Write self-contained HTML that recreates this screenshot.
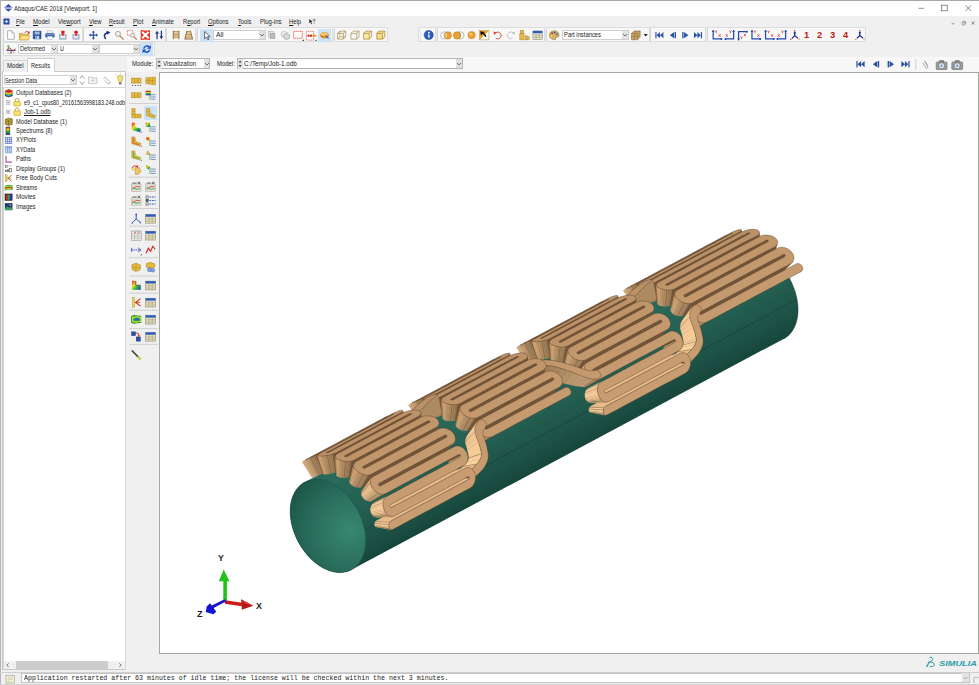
<!DOCTYPE html>
<html><head><meta charset="utf-8"><title>Abaqus/CAE 2018 [Viewport: 1]</title><style>
html,body{margin:0;padding:0}
body{width:979px;height:685px;overflow:hidden;background:#f0f0f0;position:relative;font-family:'Liberation Sans',sans-serif}
#r div,#r svg,#r span{position:absolute}
.t{white-space:nowrap;line-height:1em;height:1em;transform-origin:0 50%;letter-spacing:0}
u{text-decoration:underline;text-decoration-thickness:.5px;text-underline-offset:.6px}
</style></head><body><div id="r"><div style="left:0px;top:0px;width:979px;height:1px;background:#a4aaa4"></div>
<div style="left:0px;top:0px;width:1px;height:685px;background:#b4b8b4"></div>
<div style="left:1px;top:1px;width:978px;height:14.5px;background:#fff"></div>
<div style="left:2px;top:71px;width:124px;height:599px;background:#fff;border:1px solid #c9c9c9;box-sizing:border-box"></div>
<div style="left:3px;top:59.5px;width:24.5px;height:12px;background:#f0f0f0;border:1px solid #d4d4d4;border-bottom:none;box-sizing:border-box"></div>
<div style="left:27px;top:57.5px;width:27.5px;height:14.5px;background:#fff;border:1px solid #d0d0d0;border-bottom:none;box-sizing:border-box"></div>
<div style="left:3.5px;top:74.5px;width:73px;height:10.8px;background:#fff;border:1px solid #cfcfcf;box-sizing:border-box"></div>
<div style="left:70px;top:75.5px;width:6px;height:8.8px;background:#e1e1e1"></div>
<svg style="left:70px;top:76.9px" width="6" height="6" viewBox="0 0 6 6"><path d="M1 2 L3 4 L5 2" fill="none" stroke="#555" stroke-width=".8"/></svg>
<div style="left:3px;top:87px;width:122.5px;height:583px;border:1px solid #d6d6d6;border-bottom:none;box-sizing:border-box"></div>
<div style="left:3.5px;top:660.8px;width:121.5px;height:8.6px;background:#f0f0f0"></div>
<div style="left:16px;top:661.4px;width:91.5px;height:7.6px;background:#cdcdcd"></div>
<div style="left:159.3px;top:72px;width:819.4px;height:581.8px;background:#fff;border:1px solid #a3a8a3;box-sizing:border-box"></div>
<div style="left:0px;top:671.5px;width:979px;height:0.7px;background:#cfcfcf"></div>
<div style="left:21px;top:672.6px;width:948.5px;height:10.2px;background:#fff;border:1px solid #c4c4c4;box-sizing:border-box"></div>
<div style="left:962px;top:673.4px;width:7px;height:8.6px;background:#e4e4e4"></div>
<div style="left:0px;top:683.6px;width:979px;height:1.4px;background:#d2d2d2"></div>
<div style="left:2.5px;top:27.4px;width:80.1px;height:14.4px;background:#f8f8f8;border:1px solid #dcdcdc;box-sizing:border-box"></div>
<div style="left:83.2px;top:27.4px;width:82.4px;height:14.4px;background:#f8f8f8;border:1px solid #dcdcdc;box-sizing:border-box"></div>
<div style="left:166px;top:27.4px;width:30.2px;height:14.4px;background:#f8f8f8;border:1px solid #dcdcdc;box-sizing:border-box"></div>
<div style="left:196.6px;top:27.4px;width:136.6px;height:14.4px;background:#f8f8f8;border:1px solid #dcdcdc;box-sizing:border-box"></div>
<div style="left:333.6px;top:27.4px;width:54px;height:14.4px;background:#f8f8f8;border:1px solid #dcdcdc;box-sizing:border-box"></div>
<div style="left:418.4px;top:27.4px;width:17.4px;height:14.4px;background:#f8f8f8;border:1px solid #dcdcdc;box-sizing:border-box"></div>
<div style="left:436.6px;top:27.4px;width:108.8px;height:14.4px;background:#f8f8f8;border:1px solid #dcdcdc;box-sizing:border-box"></div>
<div style="left:546px;top:27.4px;width:104px;height:14.4px;background:#f8f8f8;border:1px solid #dcdcdc;box-sizing:border-box"></div>
<div style="left:650.4px;top:27.4px;width:56px;height:14.4px;background:#f8f8f8;border:1px solid #dcdcdc;box-sizing:border-box"></div>
<div style="left:707px;top:27.4px;width:159.4px;height:14.4px;background:#f8f8f8;border:1px solid #dcdcdc;box-sizing:border-box"></div>
<div style="left:2.5px;top:41.6px;width:152.5px;height:14.4px;background:#f8f8f8;border:1px solid #dcdcdc;box-sizing:border-box"></div>
<div style="left:213px;top:29.6px;width:52.5px;height:10.8px;background:#fff;border:1px solid #cfcfcf;box-sizing:border-box"></div>
<div style="left:259px;top:30.6px;width:6px;height:8.8px;background:#e1e1e1"></div>
<svg style="left:259px;top:32px" width="6" height="6" viewBox="0 0 6 6"><path d="M1 2 L3 4 L5 2" fill="none" stroke="#555" stroke-width=".8"/></svg>
<div style="left:562px;top:29.6px;width:66.5px;height:10.8px;background:#fff;border:1px solid #cfcfcf;box-sizing:border-box"></div>
<div style="left:622px;top:30.6px;width:6px;height:8.8px;background:#e1e1e1"></div>
<svg style="left:622px;top:32px" width="6" height="6" viewBox="0 0 6 6"><path d="M1 2 L3 4 L5 2" fill="none" stroke="#555" stroke-width=".8"/></svg>
<div style="left:18px;top:43.6px;width:39px;height:10.8px;background:#fff;border:1px solid #cfcfcf;box-sizing:border-box"></div>
<div style="left:50.5px;top:44.6px;width:6px;height:8.8px;background:#e1e1e1"></div>
<svg style="left:50.5px;top:46px" width="6" height="6" viewBox="0 0 6 6"><path d="M1 2 L3 4 L5 2" fill="none" stroke="#555" stroke-width=".8"/></svg>
<div style="left:57px;top:43.6px;width:41.5px;height:10.8px;background:#fff;border:1px solid #cfcfcf;box-sizing:border-box"></div>
<div style="left:92px;top:44.6px;width:6px;height:8.8px;background:#e1e1e1"></div>
<svg style="left:92px;top:46px" width="6" height="6" viewBox="0 0 6 6"><path d="M1 2 L3 4 L5 2" fill="none" stroke="#555" stroke-width=".8"/></svg>
<div style="left:98.8px;top:43.6px;width:41px;height:10.8px;background:#fff;border:1px solid #cfcfcf;box-sizing:border-box"></div>
<div style="left:133.3px;top:44.6px;width:6px;height:8.8px;background:#e1e1e1"></div>
<svg style="left:133.3px;top:46px" width="6" height="6" viewBox="0 0 6 6"><path d="M1 2 L3 4 L5 2" fill="none" stroke="#555" stroke-width=".8"/></svg>
<div style="left:127px;top:56.6px;width:852px;height:15px;background:#f7f7f7"></div>
<div style="left:156px;top:58.2px;width:53.8px;height:11.2px;background:#fff;border:1px solid #b4b4b4;box-sizing:border-box"></div>
<div style="left:203.8px;top:59.2px;width:5.5px;height:9.2px;background:#e1e1e1"></div>
<svg style="left:203.55px;top:60.8px" width="6" height="6" viewBox="0 0 6 6"><path d="M1 2 L3 4 L5 2" fill="none" stroke="#555" stroke-width=".8"/></svg>
<div style="left:156.6px;top:59px;width:5px;height:9.6px;background:#e4e4e4"></div>
<div style="left:237px;top:58.2px;width:225.5px;height:11.2px;background:#fff;border:1px solid #b4b4b4;box-sizing:border-box"></div>
<div style="left:456px;top:59.2px;width:6px;height:9.2px;background:#e1e1e1"></div>
<svg style="left:456px;top:60.8px" width="6" height="6" viewBox="0 0 6 6"><path d="M1 2 L3 4 L5 2" fill="none" stroke="#555" stroke-width=".8"/></svg>
<div style="left:237.6px;top:59px;width:5px;height:9.6px;background:#e4e4e4"></div>
<div style="left:200.3px;top:28.6px;width:12.4px;height:13px;background:#cbe3f8"></div>
<div style="left:318.2px;top:28.6px;width:13.2px;height:13px;background:#cbe3f8"></div>
<div style="left:140.2px;top:42.6px;width:13.2px;height:13px;background:#cbe3f8"></div>
<div style="left:144.2px;top:106.4px;width:13.2px;height:13.6px;background:#cbe3f8"></div>
<svg style="left:0;top:0" width="979" height="685" viewBox="0 0 979 685"><g transform="translate(4.20 3.60) scale(0.840)"><path d="M5 .4L9 4H1Z" fill="#3a4cb0"/><path d="M5 9.6L9 6H1Z" fill="#3a4cb0"/><rect x="0" y="4.4" width="10" height="1.2" fill="#6a78c8"/></g>
<path d="M918.5 8.3H924" stroke="#444" stroke-width=".6"/>
<rect x="941.6" y="5.2" width="5.6" height="5.6" fill="none" stroke="#444" stroke-width=".6"/>
<path d="M965.4 5.2L971.2 11M971.2 5.2L965.4 11" stroke="#444" stroke-width=".6"/>
<path d="M951.6 23.8H954.4" stroke="#666" stroke-width=".7"/>
<path d="M962 22.4H964.6V25H962ZM963 22.4V21.4H965.6V24H964.6" fill="none" stroke="#666" stroke-width=".5"/>
<path d="M971.6 21.4L974.6 24.6M974.6 21.4L971.6 24.6" stroke="#666" stroke-width=".7"/>
<g transform="translate(3.20 18.20) scale(0.660)"><rect x=".4" y=".4" width="9.2" height="9.2" rx="1" fill="#2a4aa8"/><path d="M2 5L5 2.4L8 5L5 7.6Z" fill="#9ab4e8"/><circle cx="5" cy="5" r="1.3" fill="#fff"/></g>
<g transform="translate(308.60 18.40) scale(0.700)"><path d="M1 .8V7L2.6 5.6L3.8 8.2L4.8 7.8L3.6 5.2H5.6Z" fill="#222"/><path d="M6.4 3Q6.4 1.2 7.8 1.2Q9.2 1.2 9.2 2.6Q9.2 3.6 7.9 4.4V5.6M7.9 6.8V7.8" fill="none" stroke="#222" stroke-width=".9"/></g>
<path d="M3.4 30V41" stroke="#c4c4c4" stroke-width=".8" stroke-dasharray=".8 .8"/>
<path d="M83.6 30V41" stroke="#c4c4c4" stroke-width=".8" stroke-dasharray=".8 .8"/>
<path d="M166.4 30V41" stroke="#c4c4c4" stroke-width=".8" stroke-dasharray=".8 .8"/>
<path d="M196.8 30V41" stroke="#c4c4c4" stroke-width=".8" stroke-dasharray=".8 .8"/>
<path d="M334.0 30V41" stroke="#c4c4c4" stroke-width=".8" stroke-dasharray=".8 .8"/>
<path d="M420.4 30V41" stroke="#c4c4c4" stroke-width=".8" stroke-dasharray=".8 .8"/>
<path d="M437.2 30V41" stroke="#c4c4c4" stroke-width=".8" stroke-dasharray=".8 .8"/>
<path d="M546.2 30V41" stroke="#c4c4c4" stroke-width=".8" stroke-dasharray=".8 .8"/>
<path d="M650.6 30V41" stroke="#c4c4c4" stroke-width=".8" stroke-dasharray=".8 .8"/>
<path d="M707.2 30V41" stroke="#c4c4c4" stroke-width=".8" stroke-dasharray=".8 .8"/>
<path d="M3.4 44V55" stroke="#c4c4c4" stroke-width=".8" stroke-dasharray=".8 .8"/>
<path d="M915.8 59V70" stroke="#c4c4c4" stroke-width=".8"/>
<g transform="translate(6.20 30.30) scale(0.940)"><path d="M1.5 .5H6L8.5 3V9.5H1.5Z" fill="#fff" stroke="#8a8a8a" stroke-width=".7"/><path d="M6 .5V3H8.5" fill="#eee" stroke="#8a8a8a" stroke-width=".6"/></g>
<g transform="translate(18.80 30.30) scale(1.060)"><path d="M.5 3H4L5 4H9V9H.5Z" fill="#e8b84a" stroke="#b98a22" stroke-width=".5"/><path d="M.5 9L2 5H10.5L9 9Z" fill="#fbe08a" stroke="#c79a2c" stroke-width=".5"/><path d="M5.5 2.2Q7.5 .2 9.3 1.8" fill="none" stroke="#d8281e" stroke-width=".9"/><path d="M10.2 .6V3.2H7.8Z" fill="#d8281e"/></g>
<g transform="translate(32.40 30.30) scale(0.940)"><rect x=".8" y=".8" width="8.4" height="8.4" rx=".6" fill="#2c58a8" stroke="#1c3c80" stroke-width=".5"/><rect x="2.3" y="1.3" width="5.4" height="3.2" fill="#9fb8dc"/><rect x="2.8" y="6" width="4.4" height="3.2" fill="#c8d4e8"/><rect x="3.4" y="6.5" width="1.2" height="2.2" fill="#2c58a8"/></g>
<g transform="translate(45.00 30.30) scale(0.980)"><rect x="2.4" y=".6" width="5.2" height="3" fill="#f4f4f4" stroke="#999" stroke-width=".4"/><rect x=".5" y="3.2" width="9" height="4" rx=".8" fill="#3a62b4" stroke="#24408a" stroke-width=".4"/><rect x="2.2" y="6" width="5.6" height="3.4" fill="#fff" stroke="#8a94b0" stroke-width=".4"/><rect x="1" y="4" width="8" height=".9" fill="#7f9ad0"/></g>
<g transform="translate(58.20 30.30) scale(0.940)"><rect x="1.4" y="4.6" width="7" height="4.8" fill="#b9c4d8" stroke="#7082a8" stroke-width=".5"/><rect x="2.4" y="6" width="5" height="2.2" fill="#e8ecf4"/><path d="M3.2 .6H6.8V3.4H5.9V5.6H4.1V3.4H3.2Z" fill="#dd1c1c"/></g>
<g transform="translate(71.40 30.30) scale(0.940)"><rect x="1.6" y="4.4" width="6.6" height="5" fill="#c0c6da" stroke="#7b86a8" stroke-width=".5"/><rect x="2.6" y="5.8" width="4.4" height="2.4" fill="#e4e6f0"/><circle cx="5" cy="2.1" r="1.9" fill="#dd1c1c"/><rect x="4.3" y="3" width="1.4" height="3" fill="#dd1c1c"/></g>
<g transform="translate(88.60 30.30) scale(0.960)"><path d="M5 .2L6.6 2.2H5.6V4.4H7.8V3.4L9.8 5L7.8 6.6V5.6H5.6V7.8H6.6L5 9.8L3.4 7.8H4.4V5.6H2.2V6.6L.2 5L2.2 3.4V4.4H4.4V2.2H3.4Z" fill="#2a48b0"/></g>
<g transform="translate(101.80 30.30) scale(0.940)"><path d="M4.2 9.2Q.6 4.8 5.8 2.6" fill="none" stroke="#1e2e86" stroke-width="1.6"/><path d="M5 .4L9.2 2.2L5.8 4.8Z" fill="#1e2e86"/></g>
<g transform="translate(114.40 30.30) scale(0.940)"><circle cx="3.8" cy="3.8" r="2.7" fill="#f2f2f2" stroke="#a8a090" stroke-width=".9"/><path d="M5.8 5.8L9.4 9.4" stroke="#b8955a" stroke-width="1.5" stroke-linecap="round"/></g>
<g transform="translate(126.80 29.70) scale(1.000)"><rect x=".6" y=".6" width="5.6" height="5" fill="#fff" stroke="#d84030" stroke-width=".6" stroke-dasharray="1 .5"/><circle cx="5.6" cy="5.6" r="2" fill="#f2f2f2" stroke="#a8a090" stroke-width=".8"/><path d="M7.2 7.2L9.6 9.6" stroke="#b8955a" stroke-width="1.3" stroke-linecap="round"/></g>
<g transform="translate(140.40 30.10) scale(1.000)"><rect x=".4" y=".4" width="9.2" height="9.2" fill="#e83a28"/><path d="M1.4 1.4L8.6 8.6M8.6 1.4L1.4 8.6" stroke="#fff" stroke-width="1.9"/><rect x="3.4" y="3.4" width="3.2" height="3.2" fill="#fff"/><path d="M.4 .4H3.2L.4 3.2ZM9.6 .4V3.2L6.8 .4ZM.4 9.6V6.8L3.2 9.6ZM9.6 9.6H6.8L9.6 6.8Z" fill="#e83a28"/></g>
<g transform="translate(154.60 30.30) scale(0.940)"><path d="M2.6 9.4V3.2" stroke="#1e2e86" stroke-width="1.3"/><path d="M.6 3.8L2.6 .4L4.6 3.8Z" fill="#1e2e86"/><path d="M7.2 .6V6.8" stroke="#1e2e86" stroke-width="1.3"/><path d="M5.2 6.2L7.2 9.6L9.2 6.2Z" fill="#1e2e86"/></g>
<g transform="translate(171.40 30.30) scale(0.940)"><path d="M2 1.2H8M2 2.9H8M2 4.6H8M2 6.3H8M2 8H8" stroke="#c49a4c" stroke-width="1.1"/><path d="M2 .4V9.6M8 .4V9.6" stroke="#7a5c28" stroke-width=".9"/></g>
<g transform="translate(184.00 30.30) scale(0.940)"><path d="M3 1.2H7M2.7 2.9H7.3M2.3 4.6H7.7M1.9 6.3H8.1M1.4 8H8.6" stroke="#c49a4c" stroke-width="1.1"/><path d="M3.2 .4L.9 9.4M6.8 .4L9.1 9.4M.6 9.3H9.4" stroke="#7a5c28" stroke-width=".9" fill="none"/></g>
<g transform="translate(202.20 30.70) scale(0.940)"><path d="M2.6 .8V8.6L4.6 6.8L6 9.6L7.2 9L5.8 6.3H8.4Z" fill="#fff" stroke="#222" stroke-width=".7" stroke-linejoin="round"/></g>
<g transform="translate(267.00 30.30) scale(0.940)"><rect x="1.4" y="1" width="5.6" height="6.6" fill="#e4e4e4" stroke="#a0a0a0" stroke-width=".5"/><rect x="3.4" y="3.4" width="5" height="5.6" fill="#bdbdbd" stroke="#8c8c8c" stroke-width=".5"/></g>
<g transform="translate(280.40 30.30) scale(0.980)"><path d="M1 2.4L4 .8L7 2.4V5.8L4 7.4L1 5.8Z" fill="#ececec" stroke="#9a9a9a" stroke-width=".5"/><path d="M3.4 4.6L6.4 3L9.4 4.6V8L6.4 9.6L3.4 8Z" fill="#d8d8d8" stroke="#8c8c8c" stroke-width=".5"/></g>
<g transform="translate(293.00 30.50) scale(1.080)"><rect x=".6" y=".8" width="8" height="6.4" fill="#fffafa" stroke="#d83828" stroke-width=".6" stroke-dasharray="1.4 .4"/><path d="M8.4 9.8H10V8.2Z" fill="#222"/></g>
<g transform="translate(305.80 30.50) scale(1.080)"><rect x=".6" y=".8" width="6.6" height="8" fill="#fff" stroke="#d83828" stroke-width=".6" stroke-dasharray="1 .6"/><circle cx="2.6" cy="4.8" r="1.1" fill="#d81818"/><circle cx="5" cy="4.8" r="1.1" fill="#d81818"/><circle cx="7.6" cy="4.8" r="1.2" fill="#e8a020"/><circle cx="9.2" cy="4.8" r=".8" fill="#e8a020"/><path d="M8.6 9.8H10V8.4Z" fill="#222"/></g>
<g transform="translate(320.00 30.30) scale(0.960)"><ellipse cx="4.6" cy="5.2" rx="4.2" ry="3" fill="#f0a030" stroke="#c87818" stroke-width=".5"/><ellipse cx="4.4" cy="4" rx="3.4" ry="1.6" fill="#f8c870"/><path d="M5.6 5.4L9 8.4" stroke="#3858b8" stroke-width="1.2"/><path d="M1.4 6.4H4" stroke="#d84020" stroke-width=".8"/></g>
<g transform="translate(336.80 30.30) scale(0.960)"><path d="M.8 3.2H6.8V9.2H.8ZM.8 3.2L3.2 .8H9.2L6.8 3.2M9.2 .8V6.8L6.8 9.2" fill="none" stroke="#9a7420" stroke-width=".6" stroke-linejoin="round"/><path d="M3.2 .8V6.8H9.2M3.2 6.8L.8 9.2" fill="none" stroke="#9a7420" stroke-width=".5"/></g>
<g transform="translate(350.20 30.30) scale(0.960)"><path d="M.8 3.2H6.8V9.2H.8ZM.8 3.2L3.2 .8H9.2L6.8 3.2M9.2 .8V6.8L6.8 9.2" fill="none" stroke="#9a7420" stroke-width=".6" stroke-linejoin="round"/></g>
<g transform="translate(362.80 30.30) scale(0.960)"><path d="M.8 3.2H6.8V9.2H.8ZM.8 3.2L3.2 .8H9.2L6.8 3.2M9.2 .8V6.8L6.8 9.2" fill="#f8e9a4" stroke="#9a7420" stroke-width=".6" stroke-linejoin="round"/></g>
<g transform="translate(376.00 30.30) scale(0.960)"><path d="M.8 3.2H6.8V9.2H.8ZM.8 3.2L3.2 .8H9.2L6.8 3.2M9.2 .8V6.8L6.8 9.2" fill="#f4dc80" stroke="#9a7420" stroke-width=".6" stroke-linejoin="round"/></g>
<g transform="translate(423.80 30.10) scale(0.980)"><circle cx="5" cy="5" r="4.7" fill="#2a5cc0" stroke="#1a3c90" stroke-width=".5"/><circle cx="5.2" cy="2.6" r=".9" fill="#fff"/><path d="M4 4.4H5.9V7.8H4.6V5.2H4Z" fill="#fff"/></g>
<g transform="translate(440.20 29.70) scale(1.140)"><circle cx="3.6" cy="5" r="3.2" fill="#fff" stroke="#888" stroke-width=".5"/><circle cx="6.6" cy="5" r="3.2" fill="#f0a030" stroke="#b87818" stroke-width=".5"/><path d="M5.1 2.2A3.2 3.2 0 0 1 5.1 7.8A3.2 3.2 0 0 1 5.1 2.2" fill="#f6c060" stroke="#888" stroke-width=".3"/></g>
<g transform="translate(453.00 29.70) scale(1.140)"><circle cx="6.4" cy="5" r="3.2" fill="#fff" stroke="#888" stroke-width=".5"/><circle cx="3.6" cy="5" r="3.2" fill="#f0a030" stroke="#b87818" stroke-width=".5"/><path d="M5 2.2A3.2 3.2 0 0 1 5 7.8" fill="none" stroke="#888" stroke-width=".4"/></g>
<g transform="translate(467.60 31.10) scale(0.800)"><circle cx="5" cy="5" r="4.6" fill="#f0a030" stroke="#c07818" stroke-width=".6"/><circle cx="4" cy="3.8" r="1.8" fill="#f8c878"/></g>
<g transform="translate(479.00 30.10) scale(1.040)"><rect x=".5" y=".6" width="9" height="8.8" fill="#fff" stroke="#b08838" stroke-width=".5"/><path d="M.5 .6H9.5L.5 9.4Z" fill="#e8a030"/><path d="M2.4 2.4Q5.4 3 6.6 6.4" stroke="#111" stroke-width="1.3" fill="none"/><path d="M1.2 1.2L5.2 1.8L1.8 5.2Z" fill="#111"/></g>
<g transform="translate(493.00 30.30) scale(0.940)"><path d="M2.2 3.4A3.6 3.6 0 1 1 3 8.4" fill="none" stroke="#d84a3a" stroke-width="1"/><path d="M.4 1.2L4 2.4L1.2 5Z" fill="#d84a3a"/></g>
<g transform="translate(506.00 30.30) scale(0.940)"><path d="M7.8 3.4A3.6 3.6 0 1 0 7 8.4" fill="none" stroke="#c4c4c4" stroke-width="1"/><path d="M9.6 1.2L6 2.4L8.8 5Z" fill="#c4c4c4"/></g>
<g transform="translate(519.00 29.90) scale(1.060)"><rect x=".8" y="3.6" width="4" height="5.8" fill="#e8b850" stroke="#a88020" stroke-width=".5"/><rect x="1.6" y=".6" width="2.6" height="2.6" fill="#e8b850" stroke="#a88020" stroke-width=".5"/><rect x="6" y="5.6" width="1.6" height="3.8" fill="#e8b850" stroke="#a88020" stroke-width=".4"/><rect x="8.2" y="6.4" width="1.4" height="3" fill="#e8b850" stroke="#a88020" stroke-width=".4"/></g>
<g transform="translate(532.40 30.10) scale(1.040)"><rect x=".5" y=".8" width="9" height="8.4" fill="#e8e2c8" stroke="#8a8a78" stroke-width=".5"/><rect x=".5" y=".8" width="9" height="2.2" fill="#2c5cc0"/><path d="M.5 5H9.5M.5 7H9.5M3.5 3V9.2M6.5 3V9.2" stroke="#9a947c" stroke-width=".45"/></g>
<g transform="translate(549.00 30.10) scale(1.040)"><path d="M5 .6C8 .6 9.6 2.6 9.6 4.8C9.6 7 8 7 7 7C6 7 6.2 8.4 6.4 9C4 10 .4 8 .4 5C.4 2.4 2.4 .6 5 .6Z" fill="#d8b070" stroke="#8a6830" stroke-width=".5"/><circle cx="3" cy="3" r=".9" fill="#d82020"/><circle cx="5.6" cy="2.4" r=".9" fill="#2050c8"/><circle cx="7.6" cy="4" r=".9" fill="#20a040"/><circle cx="2.4" cy="5.6" r=".9" fill="#f0e020"/></g>
<g transform="translate(630.60 30.10) scale(1.020)"><path d="M.8 3.4L3.4 .8H9.4V6.6L6.8 9.4H.8Z" fill="#c8a868" stroke="#7a6030" stroke-width=".5"/><path d="M.8 3.4H6.8V9.4M6.8 3.4L9.4 .8M.8 6.4H6.8L9.4 3.8M3.8 3.4V9.4M3.8 3.4L6.4 .8" fill="none" stroke="#7a6030" stroke-width=".45"/></g>
<path d="M643.6 34L645.7 36.6L647.8 34Z" fill="#222"/>
<g transform="translate(655.00 30.90) scale(0.860)"><rect x=".4" y="1.4" width="1.4" height="7.2" fill="#2c55a8"/><path d="M5.8 1.4V8.6L1.8 5ZM9.8 1.4V8.6L5.8 5Z" fill="#2c55a8"/></g>
<g transform="translate(668.60 30.90) scale(0.860)"><rect x="7" y="1.4" width="1.6" height="7.2" fill="#2c55a8"/><path d="M6.4 1.4V8.6L1.4 5Z" fill="#2c55a8"/></g>
<g transform="translate(681.00 30.90) scale(0.860)"><rect x="1.4" y="1.4" width="1.6" height="7.2" fill="#2c55a8"/><path d="M3.6 1.4V8.6L8.6 5Z" fill="#2c55a8"/></g>
<g transform="translate(693.80 30.90) scale(0.860)"><rect x="8.2" y="1.4" width="1.4" height="7.2" fill="#2c55a8"/><path d="M4.2 1.4V8.6L8.2 5ZM.2 1.4V8.6L4.2 5Z" fill="#2c55a8"/></g>
<g transform="translate(711.40 29.70) scale(1.100)"><path d="M1.6 .6V8.4H9.4" fill="none" stroke="#2446b4" stroke-width="1.1"/><path d="M.4 2L1.6 0L2.8 2Z" fill="#2446b4"/><circle cx="9.1" cy="8.4" r=".9" fill="#2446b4"/><path d="M3.4 0.8L4.3 2.0L5.2 0.8M4.3 2.0V3.2" fill="none" stroke="#d02818" stroke-width=".65"/><path d="M6.6 4.2L8.4 6.4M8.4 4.2L6.6 6.4" fill="none" stroke="#d02818" stroke-width=".65"/></g>
<g transform="translate(724.40 29.70) scale(1.100)"><path d="M8.4 .6V8.4H.6" fill="none" stroke="#2446b4" stroke-width="1.1"/><path d="M7.2 2L8.4 0L9.6 2Z" fill="#2446b4"/><circle cx=".9" cy="8.4" r=".9" fill="#2446b4"/><path d="M4.6 0.8L5.5 2.0L6.4 0.8M5.5 2.0V3.2" fill="none" stroke="#d02818" stroke-width=".65"/><path d="M1.2 4.2L3.0 6.4M3.0 4.2L1.2 6.4" fill="none" stroke="#d02818" stroke-width=".65"/></g>
<g transform="translate(736.80 29.70) scale(1.100)"><path d="M1.6 9.6V1.8H9.4" fill="none" stroke="#2446b4" stroke-width="1.1"/><path d="M.4 8L1.6 10L2.8 8Z" fill="#2446b4"/><circle cx="9.2" cy="1.8" r=".9" fill="#2446b4"/><path d="M3.4 6.2L4.3 7.4L5.2 6.2M4.3 7.4V8.6" fill="none" stroke="#d02818" stroke-width=".65"/><path d="M6.4 3.6L8.2 5.8M8.2 3.6L6.4 5.8" fill="none" stroke="#d02818" stroke-width=".65"/></g>
<g transform="translate(750.20 29.70) scale(1.100)"><path d="M1.6 .6V8.4H9.4" fill="none" stroke="#2446b4" stroke-width="1.1"/><path d="M.4 2L1.6 0L2.8 2Z" fill="#2446b4"/><circle cx="9.1" cy="8.4" r=".9" fill="#2446b4"/><path d="M3.4 0.8L4.3 2.0L5.2 0.8M4.3 2.0V3.2" fill="none" stroke="#d02818" stroke-width=".65"/><path d="M6.6 4.2L8.4 6.4M8.4 4.2L6.6 6.4" fill="none" stroke="#d02818" stroke-width=".65"/></g>
<g transform="translate(763.80 29.70) scale(1.100)"><path d="M1.6 .6V8.4H9.4" fill="none" stroke="#2446b4" stroke-width="1.1"/><path d="M.4 2L1.6 0L2.8 2Z" fill="#2446b4"/><circle cx="9.1" cy="8.4" r=".9" fill="#2446b4"/><path d="M3.4 0.8L4.3 2.0L5.2 0.8M4.3 2.0V3.2" fill="none" stroke="#d02818" stroke-width=".65"/><path d="M6.6 4.2L8.4 6.4M8.4 4.2L6.6 6.4" fill="none" stroke="#d02818" stroke-width=".65"/></g>
<g transform="translate(776.40 29.70) scale(1.100)"><path d="M8.4 .6V8.4H.6" fill="none" stroke="#2446b4" stroke-width="1.1"/><path d="M7.2 2L8.4 0L9.6 2Z" fill="#2446b4"/><circle cx=".9" cy="8.4" r=".9" fill="#2446b4"/><path d="M4.6 0.8L5.5 2.0L6.4 0.8M5.5 2.0V3.2" fill="none" stroke="#d02818" stroke-width=".65"/><path d="M1.2 4.2L3.0 6.4M3.0 4.2L1.2 6.4" fill="none" stroke="#d02818" stroke-width=".65"/></g>
<g transform="translate(789.40 29.90) scale(1.060)"><path d="M5 5.4V2.2M5 5.4L2.2 8.2M5 5.4L8 7.8" fill="none" stroke="#1e2e86" stroke-width="1.2"/><circle cx="5" cy="2.6" r="1" fill="#1e2e86"/><circle cx="5" cy=".8" r=".6" fill="#d02818"/><circle cx="1.2" cy="9" r=".6" fill="#d02818"/><circle cx="9" cy="8.6" r=".6" fill="#d02818"/></g>
<g transform="translate(854.60 29.90) scale(1.040)"><path d="M5 5.4V2.2M5 5.4L2.2 8.2M5 5.4L8 7.8" fill="none" stroke="#1e2e86" stroke-width="1.2"/><circle cx="5" cy="2.6" r="1" fill="#1e2e86"/><circle cx="5" cy=".8" r=".6" fill="#d02818"/><circle cx="1.2" cy="9" r=".6" fill="#d02818"/><circle cx="9" cy="8.6" r=".6" fill="#d02818"/></g>
<g transform="translate(5.80 43.60) scale(1.060)"><path d="M.8 6.4H9.2" stroke="#2858b0" stroke-width="1.2"/><path d="M1 6.4Q3 2 5 5.4T9 4.8" fill="none" stroke="#d03020" stroke-width=".9"/><path d="M2.4 1.6V6M2.4 1.6L1.4 3M2.4 1.6L3.4 3" stroke="#30a040" stroke-width=".7" fill="none"/><path d="M1 8.8H9" stroke="#555" stroke-width=".5" stroke-dasharray=".8 .6"/><path d="M5 6.4V9.6" stroke="#c03020" stroke-width=".8"/></g>
<g transform="translate(141.80 44.20) scale(0.980)"><path d="M2 4.6A3.2 3.2 0 0 1 7.6 3" fill="none" stroke="#1c50c8" stroke-width="1.5"/><path d="M9.2 .8V4.6H5.4Z" fill="#1c50c8"/><path d="M8 5.4A3.2 3.2 0 0 1 2.4 7" fill="none" stroke="#1c50c8" stroke-width="1.5"/><path d="M.8 9.2V5.4H4.6Z" fill="#1c50c8"/></g>
<path d="M157.5 62.6L159.1 60.4L160.7 62.6ZM157.5 65L159.1 67.2L160.7 65Z" fill="#444"/>
<path d="M238.5 62.6L240.1 60.4L241.7 62.6ZM238.5 65L240.1 67.2L241.7 65Z" fill="#444"/>
<g transform="translate(856.00 59.80) scale(0.880)"><rect x=".4" y="1.4" width="1.4" height="7.2" fill="#2c4f9c"/><path d="M5.8 1.4V8.6L1.8 5ZM9.8 1.4V8.6L5.8 5Z" fill="#2c4f9c"/></g>
<g transform="translate(871.60 59.80) scale(0.880)"><rect x="7" y="1.4" width="1.6" height="7.2" fill="#2c4f9c"/><path d="M6.4 1.4V8.6L1.4 5Z" fill="#2c4f9c"/></g>
<g transform="translate(886.40 59.80) scale(0.880)"><rect x="1.4" y="1.4" width="1.6" height="7.2" fill="#2c4f9c"/><path d="M3.6 1.4V8.6L8.6 5Z" fill="#2c4f9c"/></g>
<g transform="translate(901.20 59.80) scale(0.880)"><rect x="8.2" y="1.4" width="1.4" height="7.2" fill="#2c4f9c"/><path d="M4.2 1.4V8.6L8.2 5ZM.2 1.4V8.6L4.2 5Z" fill="#2c4f9c"/></g>
<g transform="translate(921.40 59.40) scale(0.940)"><path d="M3 1.4L6.6 7.6Q7.4 9 6 9.4Q4.8 9.6 4.2 8.4L1.6 3.6" fill="none" stroke="#a0a0b0" stroke-width="1"/><path d="M4.4 2.4L6.8 6.8" stroke="#8088b0" stroke-width=".7"/></g>
<g transform="translate(935.60 58.80) scale(1.200)"><rect x=".5" y="2.6" width="9" height="6.4" rx=".8" fill="#9c9c9c" stroke="#6a6a6a" stroke-width=".5"/><rect x="3" y="1.2" width="4" height="1.8" fill="#7a7a7a"/><circle cx="5" cy="5.8" r="2.5" fill="#f0f2f8" stroke="#5a5a5a" stroke-width=".5"/><circle cx="5" cy="5.8" r="1" fill="#6a88d0"/></g>
<g transform="translate(951.20 58.80) scale(1.200)"><rect x=".5" y="2.6" width="9" height="6.4" rx=".8" fill="#9c9c9c" stroke="#6a6a6a" stroke-width=".5"/><rect x="3" y="1.2" width="4" height="1.8" fill="#7a7a7a"/><circle cx="5" cy="5.8" r="2.5" fill="#f0f2f8" stroke="#5a5a5a" stroke-width=".5"/><circle cx="5" cy="5.8" r="1" fill="#6a88d0"/></g>
<path d="M80 78.6L82.2 75.6L84.4 78.6M80 81.6L82.2 84.6L84.4 81.6" fill="none" stroke="#8a8a8a" stroke-width=".8"/>
<path d="M88.6 77H92L93 78H97V83.4H88.6Z" fill="#f4f4f4" stroke="#aaa" stroke-width=".6"/><path d="M91 80.4H94.6M92.8 78.8V82" stroke="#aaa" stroke-width=".5"/>
<path d="M103.4 78.4Q104.6 76.6 106.2 78L110 81.8Q110.8 83.4 109.2 83.8Q108 83.8 107 82.6L104.4 80" fill="none" stroke="#b4b4b4" stroke-width="1"/>
<path d="M118 76Q120.2 74.6 122.4 76Q123.6 78 122 80L121.4 82.6H119L118.4 80Q116.8 78 118 76Z" fill="#f4e470" stroke="#8a8a40" stroke-width=".5"/><rect x="119" y="82.6" width="2.4" height="1.8" fill="#666"/><path d="M115.6 74.6L116.8 75.6M124.8 74.6L123.6 75.6M120.2 72.8V74" stroke="#777" stroke-width=".5"/>
<path d="M8.6 663.4L6.8 665.2L8.6 667M119.4 663.4L121.2 665.2L119.4 667" fill="none" stroke="#555" stroke-width=".8"/>
<rect x="6" y="675.4" width="8.4" height="7.6" fill="#f4f0d8" stroke="#9a9a8a" stroke-width=".6"/><path d="M7.6 677.6H12.8M7.6 679.4H12.8M7.6 681.2H11" stroke="#b8b098" stroke-width=".5"/>
<path d="M963.6 677L965.4 679L967.2 677" fill="none" stroke="#888" stroke-width=".7"/>
<path d="M974 683V677.4H978.6" fill="none" stroke="#aaa" stroke-width=".8"/>
<g transform="translate(4.40 88.80) scale(0.840)"><path d="M1 2.6L5 .8L9.4 2.2V4L5 5.2L1 4Z" fill="#e02a20"/><path d="M1 4L5 5.2L9.4 4V5.6L5 6.8L1 5.6Z" fill="#f0d020"/><path d="M1 5.6L5 6.8L9.4 5.6V7.2L5 8.4L1 7.2Z" fill="#28a838"/><path d="M1 7.2L5 8.4L9.4 7.2V8.6L5 9.8L1 8.6Z" fill="#2848c8"/><path d="M1 2.6L5 .8L9.4 2.2V8.6L5 9.8L1 8.6Z" fill="none" stroke="#4a2a18" stroke-width=".6"/></g>
<rect x="6.4" y="100.7" width="3.6" height="3.6" fill="#fff" stroke="#9a9a9a" stroke-width=".5"/><path d="M7.2 102.5H9.2M8.2 101.5V103.5" stroke="#555" stroke-width=".5"/>
<g transform="translate(12.80 97.77) scale(0.860)"><path d="M2.8 4.6V3A2.2 2.2 0 0 1 7.2 3V4.6" fill="none" stroke="#b89820" stroke-width="1"/><rect x="1.2" y="4.4" width="7.6" height="5.2" rx=".6" fill="#f6e464" stroke="#b89820" stroke-width=".6"/></g>
<rect x="6.4" y="110.1" width="3.6" height="3.6" fill="#fff" stroke="#9a9a9a" stroke-width=".5"/><path d="M7.2 111.9H9.2M8.2 110.9V112.9" stroke="#555" stroke-width=".5"/>
<g transform="translate(12.80 107.24) scale(0.860)"><path d="M2.8 4.6V3A2.2 2.2 0 0 1 7.2 3V4.6" fill="none" stroke="#b89820" stroke-width="1"/><rect x="1.2" y="4.4" width="7.6" height="5.2" rx=".6" fill="#f6e464" stroke="#b89820" stroke-width=".6"/></g>
<g transform="translate(4.40 117.21) scale(0.840)"><path d="M1 2.6L5 .8L9.4 2.2V8.6L5 9.8L1 8.6Z" fill="#c8a840" stroke="#5a4a18" stroke-width=".6"/><path d="M1 4.4L5 5.6L9.4 4.2M1 6.4L5 7.6L9.4 6.2M5 3.4V9.8" fill="none" stroke="#5a4a18" stroke-width=".5"/><path d="M1 2.6L5 3.6L9.4 2.2" fill="none" stroke="#5a4a18" stroke-width=".5"/></g>
<defs><linearGradient id="spec" x1="0" y1="0" x2="0" y2="1"><stop offset="0" stop-color="#e01818"/><stop offset=".3" stop-color="#f0d818"/><stop offset=".6" stop-color="#20b040"/><stop offset="1" stop-color="#1830d0"/></linearGradient></defs>
<rect x="6" y="127.1" width="3.8" height="7.6" fill="url(#spec)" stroke="#333" stroke-width=".6"/>
<g transform="translate(4.40 136.25) scale(0.820)"><rect x="1" y="1.2" width="8" height="7.6" fill="#e4ecfa" stroke="#3858b8" stroke-width=".7"/><path d="M1 3.8H9M1 6.4H9M3.8 1.2V8.8M6.4 1.2V8.8" stroke="#3858b8" stroke-width=".6"/></g>
<g transform="translate(4.40 145.72) scale(0.820)"><rect x="1" y="1.2" width="8" height="7.6" fill="#dce8f8" stroke="#6888c8" stroke-width=".7"/><path d="M1 3.8H9M1 6.4H9M3.8 1.2V8.8M6.4 1.2V8.8" stroke="#6888c8" stroke-width=".6"/><path d="M1.4 2.2H8.6" stroke="#3050b0" stroke-width=".8" stroke-dasharray=".8 .8"/></g>
<g transform="translate(4.40 155.19) scale(0.820)"><path d="M2 1V8.4H9" fill="none" stroke="#a04890" stroke-width="1.4"/><path d="M2 1V8.4H9" fill="none" stroke="#e8a0c8" stroke-width=".5"/></g>
<g transform="translate(4.40 164.66) scale(0.820)"><rect x="1" y="1" width="2.4" height="2.4" fill="none" stroke="#333" stroke-width=".6"/><path d="M5 1.6H6M7.4 1.6H8.4" stroke="#333" stroke-width=".7"/><rect x="1" y="6.4" width="1.6" height="2.4" fill="#333"/><rect x="3.6" y="5.6" width="1.6" height="3.2" fill="#333"/><rect x="6.4" y="4.6" width="2.4" height="4.2" fill="none" stroke="#333" stroke-width=".6"/></g>
<g transform="translate(4.40 174.03) scale(0.840)"><rect x="1" y="1" width="2.2" height="8" fill="#e8d040" stroke="#888020" stroke-width=".4"/><path d="M8.6 1.4L4 5L8.6 8.6" fill="none" stroke="#e02818" stroke-width="1"/><path d="M4 5H8" stroke="#30a040" stroke-width=".8"/></g>
<g transform="translate(4.20 183.30) scale(0.880)"><path d="M.6 3Q5 .4 9.6 2.6V8Q5 6 .6 8.4Z" fill="#38a838"/><path d="M.6 4.4Q5 2 9.6 4M.6 7Q5 4.8 9.6 6.6" fill="none" stroke="#f0e030" stroke-width=".9"/><path d="M.6 5.8Q5 3.4 9.6 5.4" fill="none" stroke="#e03020" stroke-width=".9"/></g>
<g transform="translate(4.20 192.77) scale(0.880)"><rect x=".6" y="1" width="8.8" height="8" fill="#202020"/><rect x="1.6" y="2" width="2.4" height="6" fill="#d02828"/><rect x="4" y="2" width="2.2" height="6" fill="#30b040"/><rect x="6.2" y="2" width="2.2" height="6" fill="#3040d0"/></g>
<g transform="translate(4.40 202.44) scale(0.840)"><rect x=".8" y="1" width="8.4" height="8" fill="#203868" stroke="#182848" stroke-width=".5"/><path d="M.8 7L3.6 4.4L5.6 6.2L7.2 5L9.2 6.8V9H.8Z" fill="#38a060"/><circle cx="6.8" cy="3" r=".9" fill="#c8d8f0"/></g>
<path d="M129 103.5H158" stroke="#c8c8c8" stroke-width=".8"/>
<path d="M129 177.2H158" stroke="#c8c8c8" stroke-width=".8"/>
<path d="M129 208.5H158" stroke="#c8c8c8" stroke-width=".8"/>
<path d="M129 226.2H158" stroke="#c8c8c8" stroke-width=".8"/>
<path d="M129 257.7H158" stroke="#c8c8c8" stroke-width=".8"/>
<path d="M129 276.0H158" stroke="#c8c8c8" stroke-width=".8"/>
<path d="M129 293.2H158" stroke="#c8c8c8" stroke-width=".8"/>
<path d="M129 310.2H158" stroke="#c8c8c8" stroke-width=".8"/>
<path d="M129 328.6H158" stroke="#c8c8c8" stroke-width=".8"/>
<path d="M129 344.4H158" stroke="#c8c8c8" stroke-width=".8"/>
<g transform="translate(130.70 76.30) scale(1.100)"><rect x=".6" y="1.6" width="2.8" height="4.6" fill="#e6b93c" stroke="#a88420" stroke-width=".4"/><rect x="3.6" y="1.6" width="2.8" height="4.6" fill="#e6b93c" stroke="#a88420" stroke-width=".4"/><rect x="6.6" y="1.6" width="2.8" height="4.6" fill="#e6b93c" stroke="#a88420" stroke-width=".4"/><path d="M1.4 8.4H2.2M3.8 8.4H4.6M6.2 8.4H7M8.4 8.4H9.2" stroke="#333" stroke-width="1"/></g>
<g transform="translate(145.10 76.30) scale(1.100)"><path d="M.6 1.4L9.4 .6V8L.6 6.6Z" fill="#e6b93c" stroke="#a88420" stroke-width=".4"/><path d="M3.6 1.2V7M6.6 .9V7.5M.6 4L9.4 4.2" stroke="#a88420" stroke-width=".5"/></g>
<g transform="translate(130.70 89.70) scale(1.100)"><g transform="translate(0 1.2)"><rect x=".6" y="1.6" width="2.8" height="4.6" fill="#e6b93c" stroke="#a88420" stroke-width=".4"/><rect x="3.6" y="1.6" width="2.8" height="4.6" fill="#e6b93c" stroke="#a88420" stroke-width=".4"/><rect x="6.6" y="1.6" width="2.8" height="4.6" fill="#e6b93c" stroke="#a88420" stroke-width=".4"/></g></g>
<g transform="translate(145.10 89.70) scale(1.100)"><path d="M.6 1H5V5H.6Z" fill="#28a838"/><path d="M.6 1H5V2.2H.6Z" fill="#e02a20"/><path d="M.6 2.2H5V3.2H.6Z" fill="#f0d020"/><path d="M.6 4H5V5H.6Z" fill="#2848c8"/><path d="M5.4 4.6H9.6M5.4 6.6H9.6M5.4 8.6H9.6" stroke="#6a88c8" stroke-width=".8"/><path d="M4.4 3V9" stroke="#30a040" stroke-width=".7"/></g>
<g transform="translate(130.70 107.70) scale(1.100)"><path d="M1 .8H4V6H9.4V9.2H1Z" fill="#e6b93c" stroke="#a88420" stroke-width=".5"/><path d="M1 3.4H4M1 6H4V9.2M6.6 6V9.2" fill="none" stroke="#a88420" stroke-width=".4"/></g>
<g transform="translate(145.10 107.70) scale(1.100)"><path d="M1.4 .8H4.2L4.6 5.4L9.4 7.4L8.4 9.6L1.2 7Z" fill="#e6b93c" stroke="#a88420" stroke-width=".5"/><path d="M1.3 3.6H4.4M4.6 5.4L3.6 7.8M7 6.4L6 8.8" stroke="#a88420" stroke-width=".4"/></g>
<defs><linearGradient id="rbl" x1="0" y1="0" x2="1" y2="1"><stop offset="0" stop-color="#e01818"/><stop offset=".35" stop-color="#f0e020"/><stop offset=".65" stop-color="#20b040"/><stop offset="1" stop-color="#1830d0"/></linearGradient></defs>
<g transform="translate(130.70 121.80) scale(1.100)"><path d="M1 .8H3.8L4.4 5L9.2 6.4L8.6 9.4L1 7.4Z" fill="url(#rbl)"/><path d="M8.8 9.8H10V8.6Z" fill="#222"/></g>
<g transform="translate(145.10 121.80) scale(1.100)"><path d="M.6 .8H4.4V4.6H.6Z" fill="url(#rbl)"/><path d="M5.4 4.6H9.6M5.4 6.6H9.6M5.4 8.6H9.6" stroke="#6a88c8" stroke-width=".8"/><path d="M4.4 3V9" stroke="#30a040" stroke-width=".7"/></g>
<g transform="translate(130.70 136.00) scale(1.100)"><path d="M1 .8H3.8L4.4 5L9.2 6.8L8.4 9.2L1 7Z" fill="#e8a830" stroke="#a87820" stroke-width=".4"/><path d="M2.4 2V6.4L7.6 8" fill="none" stroke="#c86018" stroke-width=".6"/><path d="M8.8 9.8H10V8.6Z" fill="#222"/></g>
<g transform="translate(145.10 136.00) scale(1.100)"><path d="M.8 1L4.2 .8L3.8 4.2H1Z" fill="#f0a020"/><circle cx="2.4" cy="2.4" r=".9" fill="#e03020"/><path d="M5.4 4.6H9.6M5.4 6.6H9.6M5.4 8.6H9.6" stroke="#6a88c8" stroke-width=".8"/><path d="M4.4 3V9" stroke="#30a040" stroke-width=".7"/></g>
<g transform="translate(130.70 150.00) scale(1.100)"><path d="M1 .8H3.8L4.4 5L9.2 6.8L8.4 9.2L1 7Z" fill="#d8c040" stroke="#90902a" stroke-width=".4"/><path d="M2.4 2V6.4L7.6 8" fill="none" stroke="#40a040" stroke-width=".7"/><path d="M8.8 9.8H10V8.6Z" fill="#222"/></g>
<g transform="translate(145.10 150.00) scale(1.100)"><path d="M1 4L2.6 .8L4.2 4Z" fill="#e8c030" stroke="#a08820" stroke-width=".4"/><path d="M5.4 4.6H9.6M5.4 6.6H9.6M5.4 8.6H9.6" stroke="#6a88c8" stroke-width=".8"/><path d="M4.4 3V9" stroke="#30a040" stroke-width=".7"/></g>
<g transform="translate(130.70 164.00) scale(1.100)"><path d="M4 3.4H8L9.2 7.2L7 9.4H4.2Z" fill="#ecc864" stroke="#a88828" stroke-width=".5"/><path d="M1 3.6Q3 .6 6 2.2" fill="none" stroke="#e02818" stroke-width=".9"/><path d="M7 1.2L6.4 3.6L4.8 2Z" fill="#e02818"/><rect x=".8" y="3.6" width="2.2" height="2.4" fill="#f0d060"/></g>
<g transform="translate(145.10 164.00) scale(1.100)"><path d="M.8 .8L4.4 2.4L3.2 5L.8 3.6Z" fill="url(#rbl)"/><path d="M5.4 4.6H9.6M5.4 6.6H9.6M5.4 8.6H9.6" stroke="#6a88c8" stroke-width=".8"/><path d="M4.4 3V9" stroke="#30a040" stroke-width=".7"/></g>
<g transform="translate(130.70 181.10) scale(1.100)"><rect x=".6" y="2.6" width="8.8" height="6.6" fill="#e4e4dc" stroke="#9a9a8a" stroke-width=".4"/><path d="M1 4.6H9M1 6.6H9" stroke="#b0b0a0" stroke-width=".4"/><path d="M1.4 7.8Q4 4 8.6 5.2" fill="none" stroke="#d03828" stroke-width=".7"/><path d="M1.4 6Q5 8.6 8.6 7" fill="none" stroke="#30a048" stroke-width=".7"/><path d="M1.6 1.8H5.4M6.4 .8L8.6 2.4M8.6 .8L6.4 2.4" stroke="#444" stroke-width=".7"/></g>
<g transform="translate(145.10 181.10) scale(1.100)"><rect x=".6" y="2.6" width="8.8" height="6.6" fill="#e4e4dc" stroke="#9a9a8a" stroke-width=".4"/><path d="M1 4.6H9M1 6.6H9" stroke="#b0b0a0" stroke-width=".4"/><path d="M1.4 7.8Q4 4 8.6 5.2" fill="none" stroke="#d03828" stroke-width=".7"/><path d="M1.4 6Q5 8.6 8.6 7" fill="none" stroke="#30a048" stroke-width=".7"/><path d="M1.6 1.8H5.4M6.4 .8L8.6 2.4M8.6 .8L6.4 2.4" stroke="#444" stroke-width=".7"/></g>
<g transform="translate(130.70 195.00) scale(1.100)"><rect x=".6" y="2.6" width="8.8" height="6.6" fill="#e4e4dc" stroke="#9a9a8a" stroke-width=".4"/><path d="M1 4.6H9M1 6.6H9" stroke="#b0b0a0" stroke-width=".4"/><path d="M1.4 7.8Q4 4 8.6 5.2" fill="none" stroke="#d03828" stroke-width=".7"/><path d="M1.4 6Q5 8.6 8.6 7" fill="none" stroke="#30a048" stroke-width=".7"/><path d="M1.6 1.8H5.4M6.4 .8L8.6 2.4M8.6 .8L6.4 2.4" stroke="#444" stroke-width=".7"/></g>
<g transform="translate(145.10 195.00) scale(1.100)"><rect x=".8" y=".8" width="2" height="2" fill="#fff" stroke="#333" stroke-width=".5"/><rect x=".8" y="4" width="2" height="2" fill="#208040" stroke="#333" stroke-width=".5"/><rect x=".8" y="7.2" width="2" height="2" fill="#fff" stroke="#333" stroke-width=".5"/><path d="M4 1.8H9.6M4 5H9.6M4 8.2H9.6" stroke="#3060d0" stroke-width=".9" stroke-dasharray="1.6 .7"/></g>
<g transform="translate(130.70 213.00) scale(1.100)"><path d="M5 5.4V1.6M5 5.4L1.8 8.6M5 5.4L8.4 8.4" fill="none" stroke="#2a50c0" stroke-width=".9"/><circle cx="5" cy="1.2" r=".8" fill="#2a50c0"/><circle cx="1.4" cy="9" r=".7" fill="#2a50c0"/><circle cx="8.8" cy="8.8" r=".7" fill="#2a50c0"/></g>
<g transform="translate(145.10 213.00) scale(1.100)"><rect x=".5" y="1.2" width="9" height="8" fill="#e8e0c0" stroke="#8a8468" stroke-width=".5"/><rect x=".5" y="1.2" width="9" height="2.2" fill="#2c5cc0"/><path d="M.5 5.4H9.5M.5 7.4H9.5M3.5 3.4V9.2M6.5 3.4V9.2" stroke="#9a9478" stroke-width=".45"/></g>
<g transform="translate(130.70 229.90) scale(1.100)"><rect x=".5" y="1" width="9" height="8.4" fill="#f4f4f0" stroke="#8a8a80" stroke-width=".5"/><path d="M.5 3.4H9.5M.5 5.4H9.5M.5 7.4H9.5M3.5 1V9.4M6.5 1V9.4" stroke="#9a9a90" stroke-width=".45"/><path d="M4 1.6L4.8 2.8M4.8 1.6L4 2.8M7 1.6L7.6 2.2L8.2 1.6M7.6 2.2V3" stroke="#d02818" stroke-width=".5" fill="none"/></g>
<g transform="translate(145.10 229.90) scale(1.100)"><rect x=".5" y="1.2" width="9" height="8" fill="#e8e0c0" stroke="#8a8468" stroke-width=".5"/><rect x=".5" y="1.2" width="9" height="2.2" fill="#2c5cc0"/><path d="M.5 5.4H9.5M.5 7.4H9.5M3.5 3.4V9.2M6.5 3.4V9.2" stroke="#9a9478" stroke-width=".45"/></g>
<g transform="translate(130.70 244.40) scale(1.100)"><path d="M.6 5H8.4" stroke="#3050c8" stroke-width=".8" stroke-dasharray="1.4 .6"/><path d="M6.8 3.2L9.4 5L6.8 6.8" fill="none" stroke="#3050c8" stroke-width=".8"/><path d="M.8 3.2V6.8" stroke="#3050c8" stroke-width=".8"/><path d="M8.8 9.8H10V8.6Z" fill="#222"/></g>
<g transform="translate(145.10 244.40) scale(1.100)"><path d="M.8 8L3 3.4L5 6.4L7 1.8L9.2 4.4" fill="none" stroke="#d02020" stroke-width="1"/></g>
<g transform="translate(130.70 261.40) scale(1.100)"><path d="M1 3L5 1.6L9 3.4L8.4 8L4.6 9L1.4 7.6Z" fill="#e6b93c" stroke="#a88420" stroke-width=".5"/><path d="M5 1.6L4.6 9M1 5.4L9 5.8" stroke="#a88420" stroke-width=".4"/></g>
<g transform="translate(145.10 261.40) scale(1.100)"><path d="M1 2L5 .8L9 2.4L8.6 5.4L4.6 6.4L1.4 5.4Z" fill="#e6b93c" stroke="#a88420" stroke-width=".5"/><circle cx="4" cy="7.6" r="1.8" fill="#88a8e0" stroke="#3860b8" stroke-width=".5"/><circle cx="7" cy="8" r="1.6" fill="#88a8e0" stroke="#3860b8" stroke-width=".5"/></g>
<g transform="translate(130.70 279.80) scale(1.100)"><path d="M1.2 .8H4V5.4H9.2V9H1.2Z" fill="url(#rbl)"/><path d="M4.6 1V5H9" fill="none" stroke="#222" stroke-width=".7"/></g>
<g transform="translate(145.10 279.80) scale(1.100)"><rect x=".5" y="1.2" width="9" height="8" fill="#e8e0c0" stroke="#8a8468" stroke-width=".5"/><rect x=".5" y="1.2" width="9" height="2.2" fill="#2c5cc0"/><path d="M.5 5.4H9.5M.5 7.4H9.5M3.5 3.4V9.2M6.5 3.4V9.2" stroke="#9a9478" stroke-width=".45"/></g>
<g transform="translate(130.70 296.90) scale(1.100)"><rect x="1.6" y=".8" width="2" height="8.6" fill="#e8d458" stroke="#a09030" stroke-width=".4"/><path d="M9 1.6L4.4 5L9 8.4" fill="none" stroke="#e02818" stroke-width="1"/><path d="M4.4 5H8.4" stroke="#e02818" stroke-width=".8"/></g>
<g transform="translate(145.10 296.90) scale(1.100)"><rect x=".5" y="1.2" width="9" height="8" fill="#e8e0c0" stroke="#8a8468" stroke-width=".5"/><rect x=".5" y="1.2" width="9" height="2.2" fill="#2c5cc0"/><path d="M.5 5.4H9.5M.5 7.4H9.5M3.5 3.4V9.2M6.5 3.4V9.2" stroke="#9a9478" stroke-width=".45"/></g>
<g transform="translate(130.70 313.90) scale(1.100)"><path d="M.4 2L3 1L9.6 2V8L3 9L.4 8Z" fill="#2a8a30"/><path d="M1.2 2.6Q5 1.4 9.6 2.8V7.2Q5 8.6 1.2 7.4Z" fill="#e8e030"/><ellipse cx="5.4" cy="5" rx="3.6" ry="2" fill="#30b850"/><ellipse cx="5.6" cy="5" rx="2.2" ry="1.1" fill="#2858d0"/></g>
<g transform="translate(145.10 313.90) scale(1.100)"><rect x=".5" y="1.2" width="9" height="8" fill="#e8e0c0" stroke="#8a8468" stroke-width=".5"/><rect x=".5" y="1.2" width="9" height="2.2" fill="#2c5cc0"/><path d="M.5 5.4H9.5M.5 7.4H9.5M3.5 3.4V9.2M6.5 3.4V9.2" stroke="#9a9478" stroke-width=".45"/></g>
<g transform="translate(130.70 331.00) scale(1.100)"><rect x=".8" y=".8" width="3.6" height="3.4" fill="#2a50b0" stroke="#182c70" stroke-width=".4"/><rect x="5" y="5.4" width="3.8" height="3.8" fill="#2a50b0" stroke="#182c70" stroke-width=".4"/><path d="M5 1.6Q8 1.8 7.4 4.6" fill="none" stroke="#e02818" stroke-width=".9"/><path d="M6.2 4L7.4 5.6L8.6 4Z" fill="#e02818"/></g>
<g transform="translate(145.10 331.00) scale(1.100)"><rect x=".5" y="1.2" width="9" height="8" fill="#e8e0c0" stroke="#8a8468" stroke-width=".5"/><rect x=".5" y="1.2" width="9" height="2.2" fill="#2c5cc0"/><path d="M.5 5.4H9.5M.5 7.4H9.5M3.5 3.4V9.2M6.5 3.4V9.2" stroke="#9a9478" stroke-width=".45"/></g>
<g transform="translate(130.70 349.40) scale(1.100)"><path d="M1 1L7.6 7.6" stroke="#4a3a30" stroke-width="1.5"/><path d="M6.4 6.6L9.2 9.2" stroke="#b8d038" stroke-width="1.8"/><path d="M1.4 .6L3.6 2.2" stroke="#999" stroke-width=".5"/></g>
<path d="M929.4 657.6Q933 656.4 932.6 659.6Q932.2 661.4 929.6 661.8Q935.2 662.4 934.2 665.4Q933 667.2 929.8 666.4" fill="none" stroke="#2a9cab" stroke-width="1"/><path d="M926.6 667L929.4 661.6" stroke="#2a9cab" stroke-width="1.3"/></svg>
<svg style="left:0;top:0" width="979" height="685" viewBox="0 0 979 685"><defs><linearGradient id="gbody" gradientUnits="userSpaceOnUse" x1="304.6" y1="482.2" x2="351.4" y2="569.8"><stop offset="0" stop-color="#2a6b5c"/><stop offset=".45" stop-color="#256153"/><stop offset=".8" stop-color="#1d5246"/><stop offset="1" stop-color="#17463b"/></linearGradient><radialGradient id="gcap" gradientUnits="userSpaceOnUse" cx="350" cy="530" r="70"><stop offset="0" stop-color="#38876f"/><stop offset=".5" stop-color="#2b705e"/><stop offset="1" stop-color="#1b5446"/></radialGradient><linearGradient id="gtop" gradientUnits="userSpaceOnUse" x1="295.5" y1="465.2" x2="347.5" y2="562.5"><stop offset="0" stop-color="#b98f66"/><stop offset=".35" stop-color="#c3986c"/><stop offset="1" stop-color="#c99e72"/></linearGradient></defs>
<path d="M351.4 569.8L783.6 338.9L785.9 337.6L788.0 335.9L789.9 334.0L791.6 331.9L793.2 329.5L794.5 327.0L795.7 324.2L796.6 321.3L797.3 318.1L797.8 314.9L798.0 311.5L798.0 308.1L797.8 304.5L797.3 300.9L796.6 297.3L795.7 293.6L794.6 290.0L793.2 286.4L791.7 282.8L790.0 279.3L788.0 275.9L785.9 272.7L783.7 269.5L781.3 266.6L778.8 263.8L776.1 261.2L773.4 258.8L770.5 256.6L767.7 254.7L764.7 253.0L761.8 251.6L758.8 250.5L755.8 249.6L752.9 249.0L750.0 248.7L747.2 248.7L744.5 248.9L741.8 249.5L739.3 250.3L736.9 251.4L304.6 482.2L302.4 483.6L300.3 485.3L298.3 487.2L296.6 489.3L295.0 491.7L293.7 494.2L292.5 497.0L291.6 499.9L290.9 503.0L290.5 506.3L290.2 509.7L290.2 513.1L290.4 516.7L290.9 520.3L291.6 523.9L292.5 527.6L293.6 531.2L295.0 534.8L296.5 538.4L298.3 541.9L300.2 545.3L302.3 548.5L304.5 551.6L306.9 554.6L309.5 557.4L312.1 560.0L314.9 562.4L317.7 564.6L320.6 566.5L323.5 568.2L326.5 569.6L329.4 570.7L332.4 571.6L335.3 572.2L338.2 572.5L341.0 572.5L343.8 572.2L346.4 571.7L349.0 570.9L351.4 569.8Z" fill="url(#gbody)"/>
<path d="M364.8 530.1L797.0 299.3" stroke="#123c32" stroke-width=".6" fill="none"/>
<path d="M783.6 338.9L785.9 337.6L788.0 335.9L789.9 334.0L791.6 331.9L793.2 329.5L794.5 327.0L795.7 324.2L796.6 321.3L797.3 318.1L797.8 314.9L798.0 311.5L798.0 308.1L797.8 304.5L797.3 300.9L796.6 297.3L795.7 293.6L794.6 290.0L793.2 286.4L791.7 282.8L790.0 279.3L788.0 275.9L785.9 272.7L783.7 269.5L781.3 266.6L778.8 263.8L776.1 261.2L773.4 258.8L770.5 256.6L767.7 254.7L764.7 253.0L761.8 251.6L758.8 250.5L755.8 249.6L752.9 249.0L750.0 248.7L747.2 248.7L744.5 248.9L741.8 249.5L739.3 250.3L736.9 251.4" stroke="#123c32" stroke-width=".5" fill="none"/>
<path d="M351.4 569.8L354.3 567.9L357.0 565.5L359.4 562.7L361.4 559.5L363.1 556.0L364.4 552.1L365.3 547.9L365.7 543.5L365.8 538.9L365.4 534.1L364.7 529.3L363.5 524.4L361.9 519.6L360.0 514.8L357.7 510.1L355.1 505.6L352.2 501.4L349.1 497.4L345.7 493.7L342.1 490.4L338.3 487.4L334.5 484.9L330.5 482.9L326.6 481.3L322.6 480.2L318.7 479.6L315.0 479.5L311.3 479.9L307.9 480.8L304.6 482.2L301.7 484.1L299.0 486.5L296.6 489.3L294.6 492.5L292.9 496.0L291.6 499.9L290.7 504.1L290.3 508.5L290.2 513.1L290.6 517.9L291.3 522.7L292.5 527.6L294.1 532.4L296.0 537.2L298.3 541.9L300.9 546.4L303.8 550.6L306.9 554.6L310.3 558.3L313.9 561.6L317.7 564.6L321.5 567.1L325.5 569.1L329.4 570.7L333.4 571.8L337.3 572.4L341.0 572.5L344.7 572.1L348.1 571.2Z" fill="url(#gcap)" stroke="#1a4a3e" stroke-width=".5"/>
<path d="M704.0 322.9L706.3 322.3L694.9 328.9L692.6 329.6ZM700.1 311.9L708.4 307.5L698.8 316.9L690.5 321.4ZM708.4 307.5L716.6 303.1L707.1 312.5L698.8 316.9ZM716.6 303.1L724.9 298.7L715.3 308.1L707.1 312.5ZM724.9 298.7L733.2 294.3L723.6 303.7L715.3 308.1ZM733.2 294.3L741.4 289.9L731.9 299.3L723.6 303.7ZM741.4 289.9L749.7 285.5L740.1 294.9L731.9 299.3ZM749.7 285.5L758.0 281.1L748.4 290.5L740.1 294.9ZM758.0 281.1L766.2 276.6L756.6 286.1L748.4 290.5ZM766.2 276.6L774.5 272.2L764.9 281.7L756.6 286.1ZM774.5 272.2L782.7 267.8L773.2 277.2L764.9 281.7ZM782.7 267.8L791.0 263.4L781.4 272.8L773.2 277.2ZM791.0 263.4L792.8 261.9L783.3 271.4L781.4 272.8ZM683.7 295.4L684.2 294.9L679.1 309.1L678.6 309.5ZM684.2 294.9L692.5 290.5L687.4 304.7L679.1 309.1ZM692.5 290.5L700.7 286.1L695.6 300.3L687.4 304.7ZM700.7 286.1L709.0 281.7L703.9 295.9L695.6 300.3ZM709.0 281.7L717.3 277.3L712.2 291.5L703.9 295.9ZM717.3 277.3L725.5 272.8L720.4 287.0L712.2 291.5ZM725.5 272.8L733.8 268.4L728.7 282.6L720.4 287.0ZM733.8 268.4L742.1 264.0L736.9 278.2L728.7 282.6ZM742.1 264.0L750.3 259.6L745.2 273.8L736.9 278.2ZM750.3 259.6L758.6 255.2L753.5 269.4L745.2 273.8ZM758.6 255.2L766.8 250.8L761.7 265.0L753.5 269.4ZM766.8 250.8L775.1 246.4L770.0 260.6L761.7 265.0ZM775.1 246.4L776.8 244.9L771.8 259.2L770.0 260.6ZM776.8 244.9L777.4 244.0L772.5 258.4L771.8 259.2ZM665.5 284.7L665.6 284.5L665.5 301.7L665.4 301.9ZM665.6 284.5L666.1 284.1L666.1 301.3L665.5 301.7ZM666.1 284.1L674.4 279.7L674.4 296.9L666.1 301.3ZM674.4 279.7L682.7 275.2L682.7 292.5L674.4 296.9ZM682.7 275.2L691.0 270.8L691.0 288.0L682.7 292.5ZM691.0 270.8L699.3 266.3L699.3 283.6L691.0 288.0ZM699.3 266.3L707.6 261.9L707.6 279.1L699.3 283.6ZM707.6 261.9L715.9 257.5L715.9 274.7L707.6 279.1ZM715.9 257.5L724.2 253.0L724.2 270.2L715.9 274.7ZM724.2 253.0L732.5 248.6L732.5 265.8L724.2 270.2ZM732.5 248.6L740.9 244.1L740.8 261.4L732.5 265.8ZM740.9 244.1L749.2 239.7L749.2 256.9L740.8 261.4ZM749.2 239.7L757.5 235.2L757.5 252.5L749.2 256.9ZM757.5 235.2L758.6 234.3L758.7 251.6L757.5 252.5ZM758.6 234.3L759.2 233.5L759.4 250.9L758.7 251.6ZM759.2 233.5L759.4 232.5L760.0 249.9L759.4 250.9ZM647.4 281.3L647.4 281.2L652.5 299.3L652.3 299.5ZM647.4 281.2L647.9 280.9L653.0 299.0L652.5 299.3ZM647.9 280.9L656.2 276.4L661.3 294.6L653.0 299.0ZM656.2 276.4L664.5 272.0L669.6 290.1L661.3 294.6ZM664.5 272.0L672.9 267.5L677.9 285.7L669.6 290.1ZM672.9 267.5L681.2 263.1L686.2 281.2L677.9 285.7ZM681.2 263.1L689.5 258.7L694.5 276.8L686.2 281.2ZM689.5 258.7L697.8 254.2L702.9 272.4L694.5 276.8ZM697.8 254.2L706.1 249.8L711.2 267.9L702.9 272.4ZM706.1 249.8L714.4 245.3L719.5 263.5L711.2 267.9ZM714.4 245.3L722.7 240.9L727.8 259.0L719.5 263.5ZM722.7 240.9L731.0 236.5L736.1 254.6L727.8 259.0ZM731.0 236.5L739.3 232.0L744.4 250.2L736.1 254.6ZM739.3 232.0L740.5 231.2L745.7 249.4L744.4 250.2ZM740.5 231.2L741.1 230.7L746.4 248.8L745.7 249.4ZM741.1 230.7L741.4 230.1L747.0 248.2L746.4 248.8ZM631.4 285.9L631.5 285.8L641.0 302.7L640.8 302.8ZM631.5 285.8L632.0 285.6L641.5 302.4L641.0 302.7ZM632.0 285.6L640.3 281.1L649.8 297.9L641.5 302.4ZM640.3 281.1L648.6 276.7L658.2 293.5L649.8 297.9ZM648.6 276.7L656.9 272.2L666.5 289.1L658.2 293.5ZM656.9 272.2L665.2 267.8L674.8 284.6L666.5 289.1ZM665.2 267.8L673.5 263.4L683.1 280.2L674.8 284.6ZM673.5 263.4L681.9 258.9L691.4 275.8L683.1 280.2ZM681.9 258.9L690.2 254.5L699.7 271.3L691.4 275.8ZM690.2 254.5L698.5 250.1L708.0 266.9L699.7 271.3ZM698.5 250.1L706.8 245.6L716.3 262.4L708.0 266.9ZM706.8 245.6L715.1 241.2L724.6 258.0L716.3 262.4ZM715.1 241.2L723.4 236.8L733.0 253.6L724.6 258.0ZM723.4 236.8L724.6 236.1L734.3 252.9L733.0 253.6ZM724.6 236.1L725.3 235.8L735.0 252.5L734.3 252.9ZM725.3 235.8L725.8 235.6L735.8 252.2L735.0 252.5ZM725.8 235.6L726.0 235.7L736.1 252.1L735.8 252.2ZM716.9 241.9L717.2 241.6L728.5 257.1L728.2 257.3ZM717.2 241.6L718.0 241.0L729.1 256.6L728.5 257.1ZM718.0 241.0L718.2 240.7L729.2 256.4L729.1 256.6ZM636.8 283.6L638.6 282.7L646.1 300.5L644.3 301.3ZM638.6 282.7L646.9 278.3L654.4 296.0L646.1 300.5ZM646.9 278.3L655.3 273.8L662.7 291.6L654.4 296.0ZM655.3 273.8L663.6 269.4L671.0 287.1L662.7 291.6ZM663.6 269.4L671.9 264.9L679.3 282.7L671.0 287.1ZM671.9 264.9L680.2 260.5L687.6 278.3L679.3 282.7ZM680.2 260.5L688.5 256.1L696.0 273.8L687.6 278.3ZM688.5 256.1L696.9 251.6L704.3 269.4L696.0 273.8ZM696.9 251.6L705.2 247.2L712.6 264.9L704.3 269.4ZM705.2 247.2L713.5 242.7L720.9 260.5L712.6 264.9ZM713.5 242.7L721.8 238.3L729.2 256.1L720.9 260.5ZM721.8 238.3L730.1 233.9L737.6 251.6L729.2 256.1ZM730.1 233.9L730.9 233.5L738.3 251.2L737.6 251.6ZM730.9 233.5L731.4 233.3L738.7 251.1L738.3 251.2ZM731.4 233.3L732.3 232.9L739.4 250.8L738.7 251.1ZM732.3 232.9L732.7 232.9L739.7 250.8L739.4 250.8ZM654.1 282.7L655.9 281.9L658.5 299.9L656.8 300.7ZM655.9 281.9L664.2 277.5L666.8 295.5L658.5 299.9ZM664.2 277.5L672.6 273.1L675.1 291.0L666.8 295.5ZM672.6 273.1L680.9 268.6L683.5 286.6L675.1 291.0ZM680.9 268.6L689.2 264.2L691.8 282.2L683.5 286.6ZM689.2 264.2L697.5 259.7L700.1 277.7L691.8 282.2ZM697.5 259.7L705.8 255.3L708.4 273.3L700.1 277.7ZM705.8 255.3L714.2 250.9L716.7 268.8L708.4 273.3ZM714.2 250.9L722.5 246.4L725.1 264.4L716.7 268.8ZM722.5 246.4L730.8 242.0L733.4 260.0L725.1 264.4ZM730.8 242.0L739.1 237.6L741.7 255.5L733.4 260.0ZM739.1 237.6L747.4 233.1L750.0 251.1L741.7 255.5ZM747.4 233.1L748.2 232.8L750.7 250.8L750.0 251.1ZM748.2 232.8L748.7 232.7L751.2 250.6L750.7 250.8ZM748.7 232.7L749.7 232.7L752.0 250.6L751.2 250.6ZM749.7 232.7L750.2 233.0L752.3 250.9L752.0 250.6ZM672.5 289.6L674.4 289.0L671.8 305.0L670.0 305.7ZM674.4 289.0L682.7 284.6L680.1 300.6L671.8 305.0ZM682.7 284.6L691.0 280.2L688.4 296.1L680.1 300.6ZM691.0 280.2L699.3 275.7L696.7 291.7L688.4 296.1ZM699.3 275.7L707.6 271.3L705.0 287.3L696.7 291.7ZM707.6 271.3L716.0 266.9L713.4 282.8L705.0 287.3ZM716.0 266.9L724.3 262.4L721.7 278.4L713.4 282.8ZM724.3 262.4L732.6 258.0L730.0 274.0L721.7 278.4ZM732.6 258.0L740.9 253.6L738.3 269.5L730.0 274.0ZM740.9 253.6L749.2 249.1L746.6 265.1L738.3 269.5ZM749.2 249.1L757.6 244.7L754.9 260.7L746.6 265.1ZM757.6 244.7L765.9 240.3L763.3 256.2L754.9 260.7ZM765.9 240.3L766.7 240.0L764.0 255.9L763.3 256.2ZM766.7 240.0L767.2 240.0L764.5 255.9L764.0 255.9ZM767.2 240.0L768.2 240.3L765.3 256.1L764.5 255.9ZM768.2 240.3L768.6 240.9L765.5 256.5L765.3 256.1ZM689.8 303.6L691.7 303.2L684.2 315.2L682.5 315.7ZM691.7 303.2L700.0 298.7L692.5 310.7L684.2 315.2ZM700.0 298.7L708.3 294.3L700.8 306.3L692.5 310.7ZM708.3 294.3L716.6 289.9L709.2 301.9L700.8 306.3ZM716.6 289.9L724.9 285.4L717.5 297.4L709.2 301.9ZM724.9 285.4L733.3 281.0L725.8 293.0L717.5 297.4ZM733.3 281.0L741.6 276.6L734.1 288.6L725.8 293.0ZM741.6 276.6L749.9 272.1L742.4 284.1L734.1 288.6ZM749.9 272.1L758.2 267.7L750.7 279.7L742.4 284.1ZM758.2 267.7L766.5 263.3L759.1 275.3L750.7 279.7ZM766.5 263.3L774.8 258.8L767.4 270.8L759.1 275.3ZM774.8 258.8L783.2 254.4L775.7 266.4L767.4 270.8ZM783.2 254.4L783.9 254.2L776.4 266.1L775.7 266.4ZM783.9 254.2L784.4 254.2L776.9 266.1L776.4 266.1ZM784.4 254.2L785.3 254.8L777.6 266.5L776.9 266.1ZM785.3 254.8L785.7 255.7L777.8 267.2L777.6 266.5Z" fill="#745438" stroke="#745438" stroke-width=".3"/>
<path d="M785.7 255.7L785.6 256.0L777.6 267.5L777.8 267.2Z" fill="#e6bb88" stroke="#e6bb88" stroke-width=".3"/>
<path d="M623.4 290.6L623.7 290.2L633.7 306.7L633.8 306.8ZM623.7 290.2L624.2 289.8L634.0 306.5L633.7 306.7ZM638.6 284.2L639.1 284.5L644.9 302.5L644.7 302.2ZM639.1 284.5L639.8 284.6L645.3 302.7L644.9 302.5ZM656.3 285.0L656.4 285.7L657.6 303.3L657.7 302.7ZM656.4 285.7L657.1 286.6L657.8 304.1L657.6 303.3ZM657.1 286.6L657.9 287.3L658.3 304.6L657.8 304.1ZM674.7 293.8L674.8 294.9L670.8 309.9L670.9 309.0ZM674.8 294.9L675.4 296.4L670.9 311.1L670.8 309.9ZM675.4 296.4L676.1 297.6L671.4 312.0L670.9 311.1Z" fill="#d2a272" stroke="#d2a272" stroke-width=".3"/>
<path d="M624.2 289.8L625.2 289.2L634.6 306.0L634.0 306.5ZM625.2 289.2L626.3 288.6L635.4 305.6L634.6 306.0ZM639.8 284.6L641.2 284.7L646.2 302.8L645.3 302.7ZM641.2 284.7L642.5 284.6L647.1 302.8L646.2 302.8ZM657.9 287.3L659.4 288.1L659.2 305.3L658.3 304.6ZM659.4 288.1L660.8 288.7L660.2 305.7L659.2 305.3ZM676.1 297.6L677.5 299.1L672.3 313.2L671.4 312.0ZM677.5 299.1L678.8 300.1L673.2 313.9L672.3 313.2Z" fill="#cca272" stroke="#cca272" stroke-width=".3"/>
<path d="M626.3 288.6L628.0 287.7L636.7 304.9L635.4 305.6ZM642.5 284.6L644.5 284.5L648.6 302.7L647.1 302.8ZM660.8 288.7L662.8 289.3L661.8 306.1L660.2 305.7ZM678.8 300.1L680.7 301.4L674.7 314.8L673.2 313.9Z" fill="#c0966c" stroke="#c0966c" stroke-width=".3"/>
<path d="M628.0 287.7L629.4 287.0L637.9 304.4L636.7 304.9ZM644.5 284.5L646.2 284.4L649.9 302.5L648.6 302.7ZM662.8 289.3L664.5 289.7L663.1 306.3L661.8 306.1ZM680.7 301.4L682.3 302.2L675.9 315.3L674.7 314.8Z" fill="#ba9066" stroke="#ba9066" stroke-width=".3"/>
<path d="M629.4 287.0L631.5 286.0L639.6 303.5L637.9 304.4ZM646.2 284.4L648.5 284.0L651.8 302.1L649.9 302.5ZM664.5 289.7L666.9 290.0L665.1 306.4L663.1 306.3Z" fill="#ae8a60" stroke="#ae8a60" stroke-width=".3"/>
<path d="M631.5 286.0L633.2 285.3L641.1 302.9L639.6 303.5ZM648.5 284.0L650.2 283.7L653.3 301.8L651.8 302.1ZM666.9 290.0L668.7 290.0L666.6 306.3L665.1 306.4Z" fill="#a8845a" stroke="#a8845a" stroke-width=".3"/>
<path d="M633.2 285.3L635.3 284.3L642.9 302.0L641.1 302.9ZM650.2 283.7L652.5 283.2L655.3 301.2L653.3 301.8ZM668.7 290.0L670.9 289.9L668.6 306.0L666.6 306.3Z" fill="#9c7e5a" stroke="#9c7e5a" stroke-width=".3"/>
<path d="M635.3 284.3L636.8 283.6L644.3 301.3L642.9 302.0ZM652.5 283.2L654.1 282.7L656.8 300.7L655.3 301.2ZM670.9 289.9L672.5 289.6L670.0 305.7L668.6 306.0Z" fill="#9c7854" stroke="#9c7854" stroke-width=".3"/>
<path d="M682.3 302.2L684.5 303.1L677.7 315.8L675.9 315.3Z" fill="#b48a66" stroke="#b48a66" stroke-width=".3"/>
<path d="M684.5 303.1L686.2 303.5L679.2 316.0L677.7 315.8ZM686.2 303.5L688.3 303.7L681.1 316.0L679.2 316.0Z" fill="#a88460" stroke="#a88460" stroke-width=".3"/>
<path d="M688.3 303.7L689.8 303.6L682.5 315.7L681.1 316.0Z" fill="#a27e5a" stroke="#a27e5a" stroke-width=".3"/>
<path d="M692.5 306.5L691.8 307.6L683.6 318.8L684.4 317.8ZM691.8 307.6L691.4 309.3L682.9 320.2L683.6 318.8Z" fill="#e4b484" stroke="#e4b484" stroke-width=".3"/>
<path d="M691.4 309.3L691.4 310.7L682.7 321.3L682.9 320.2Z" fill="#e4ba84" stroke="#e4ba84" stroke-width=".3"/>
<path d="M691.4 310.7L691.7 312.7L682.7 322.8L682.7 321.3Z" fill="#e4ba8a" stroke="#e4ba8a" stroke-width=".3"/>
<path d="M691.7 312.7L692.3 314.2L683.0 324.0L682.7 322.8ZM692.3 314.2L693.3 316.2L683.6 325.5L683.0 324.0ZM693.3 316.2L694.3 317.7L684.4 326.6L683.6 325.5Z" fill="#eaba8a" stroke="#eaba8a" stroke-width=".3"/>
<path d="M694.3 317.7L695.9 319.4L685.6 327.8L684.4 326.6Z" fill="#deb484" stroke="#deb484" stroke-width=".3"/>
<path d="M695.9 319.4L697.3 320.6L686.7 328.5L685.6 327.8Z" fill="#d8ae84" stroke="#d8ae84" stroke-width=".3"/>
<path d="M697.3 320.6L699.1 321.8L688.3 329.3L686.7 328.5Z" fill="#cca87e" stroke="#cca87e" stroke-width=".3"/>
<path d="M699.1 321.8L700.6 322.5L689.6 329.6L688.3 329.3Z" fill="#c6a278" stroke="#c6a278" stroke-width=".3"/>
<path d="M700.6 322.5L702.5 322.9L691.3 329.8L689.6 329.6Z" fill="#c09c72" stroke="#c09c72" stroke-width=".3"/>
<path d="M702.5 322.9L704.0 322.9L692.6 329.6L691.3 329.8Z" fill="#ba9672" stroke="#ba9672" stroke-width=".3"/>
<path d="M631.5 286.0L639.6 303.5M636.8 283.6L644.3 301.3M648.5 284.0L651.8 302.1M654.1 282.7L656.8 300.7M656.4 285.7L657.6 303.3M666.9 290.0L665.1 306.4M672.5 289.6L670.0 305.7M674.8 294.9L670.8 309.9M684.5 303.1L677.7 315.8M689.8 303.6L682.5 315.7M691.4 310.7L682.7 321.3M699.1 321.8L688.3 329.3" fill="none" stroke="#5e452c" stroke-width=".35"/>
<path d="M704.0 322.9L702.5 322.9L700.6 322.5L699.1 321.8L697.3 320.6L695.9 319.4L694.3 317.7L693.3 316.2L692.3 314.2L691.7 312.7L691.4 310.7L691.4 309.3L691.8 307.6L692.5 306.5L693.7 305.4L702.0 301.0L710.3 296.5L718.6 292.1L726.9 287.6L735.2 283.2L743.5 278.7L751.8 274.3L760.2 269.8L768.5 265.4L776.8 261.0L785.1 256.5L785.6 256.0L785.7 255.7L785.3 254.8L784.4 254.2L783.9 254.2L783.2 254.4L774.8 258.8L766.5 263.3L758.2 267.7L749.9 272.1L741.6 276.6L733.3 281.0L724.9 285.4L716.6 289.9L708.3 294.3L700.0 298.7L691.7 303.2L689.8 303.6L688.3 303.7L686.2 303.5L684.5 303.1L682.3 302.2L680.7 301.4L678.8 300.1L677.5 299.1L676.1 297.6L675.4 296.4L674.8 294.9L674.7 293.8L675.0 292.4L675.5 291.5L677.2 290.2L685.5 285.7L693.7 281.3L702.0 276.9L710.3 272.5L718.5 268.1L726.8 263.7L735.0 259.3L743.3 254.9L751.6 250.4L759.8 246.0L768.1 241.6L768.6 241.2L768.6 240.9L768.2 240.3L767.2 240.0L766.7 240.0L765.9 240.3L757.6 244.7L749.2 249.1L740.9 253.6L732.6 258.0L724.3 262.4L716.0 266.9L707.6 271.3L699.3 275.7L691.0 280.2L682.7 284.6L674.4 289.0L672.5 289.6L670.9 289.9L668.7 290.0L666.9 290.0L664.5 289.7L662.8 289.3L660.8 288.7L659.4 288.1L657.9 287.3L657.1 286.6L656.4 285.7L656.3 285.0L656.6 284.0L657.1 283.3L658.8 282.1L667.1 277.7L675.3 273.3L683.6 268.9L691.8 264.5L700.1 260.0L708.4 255.6L716.6 251.2L724.9 246.8L733.1 242.4L741.4 238.0L749.7 233.6L750.2 233.2L750.2 233.0L749.7 232.7L748.7 232.7L748.2 232.8L747.4 233.1L739.1 237.6L730.8 242.0L722.5 246.4L714.2 250.9L705.8 255.3L697.5 259.7L689.2 264.2L680.9 268.6L672.6 273.1L664.2 277.5L655.9 281.9L654.1 282.7L652.5 283.2L650.2 283.7L648.5 284.0L646.2 284.4L644.5 284.5L642.5 284.6L641.2 284.7L639.8 284.6L639.1 284.5L638.6 284.2L638.5 283.9L638.9 283.4L639.5 282.9L641.2 281.9L649.5 277.5L657.8 273.0L666.0 268.6L674.3 264.2L682.5 259.8L690.8 255.4L699.1 251.0L707.3 246.6L715.6 242.2L723.8 237.8L732.1 233.3L732.6 233.0L732.7 232.9L732.3 232.9L731.4 233.3L730.9 233.5L730.1 233.9L721.8 238.3L713.5 242.7L705.2 247.2L696.9 251.6L688.5 256.1L680.2 260.5L671.9 264.9L663.6 269.4L655.3 273.8L646.9 278.3L638.6 282.7L636.8 283.6L635.3 284.3L633.2 285.3L631.5 286.0L629.4 287.0L628.0 287.7L626.4 288.5L632.7 285.1L633.0 285.0L633.7 284.6L642.0 280.2L650.3 275.8L658.5 271.3L666.8 266.9L675.1 262.5L683.3 258.1L691.6 253.7L699.8 249.3L708.1 244.9L716.4 240.5L724.6 236.0L727.0 234.8L728.5 234.0L730.6 232.9L732.2 232.1L734.3 231.2L735.8 230.6L737.7 229.9L738.9 229.6L740.1 229.4L740.8 229.5L741.3 229.7L741.4 230.1L741.1 230.7L740.5 231.2L739.3 232.0L731.0 236.5L722.7 240.9L714.4 245.3L706.1 249.8L697.8 254.2L689.5 258.7L681.2 263.1L672.9 267.5L664.5 272.0L656.2 276.4L647.9 280.9L647.4 281.2L647.4 281.3L647.8 281.5L648.8 281.3L649.3 281.2L650.1 280.8L658.3 276.4L666.6 272.0L674.8 267.6L683.1 263.2L691.4 258.8L699.6 254.4L707.9 249.9L716.2 245.5L724.4 241.1L732.7 236.7L740.9 232.3L743.4 231.2L745.0 230.6L747.2 230.0L749.0 229.6L751.3 229.3L753.0 229.3L755.0 229.4L756.4 229.7L757.8 230.2L758.6 230.8L759.3 231.7L759.4 232.5L759.2 233.5L758.6 234.3L757.5 235.2L749.2 239.7L740.9 244.1L732.5 248.6L724.2 253.0L715.9 257.5L707.6 261.9L699.3 266.3L691.0 270.8L682.7 275.2L674.4 279.7L666.1 284.1L665.6 284.5L665.5 284.7L666.0 285.2L667.0 285.4L667.6 285.3L668.3 285.0L676.7 280.6L685.0 276.2L693.3 271.7L701.6 267.3L709.9 262.8L718.3 258.4L726.6 254.0L734.9 249.5L743.2 245.1L751.5 240.7L759.9 236.2L761.7 235.6L763.3 235.2L765.6 235.0L767.4 235.1L769.7 235.4L771.4 235.8L773.5 236.7L774.8 237.5L776.2 238.8L777.0 239.9L777.6 241.4L777.7 242.6L777.4 244.0L776.8 244.9L775.1 246.4L766.8 250.8L758.6 255.2L750.3 259.6L742.1 264.0L733.8 268.4L725.5 272.8L717.3 277.3L709.0 281.7L700.7 286.1L692.5 290.5L684.2 294.9L683.7 295.4L683.7 295.7L684.1 296.4L685.0 296.9L685.5 296.9L686.3 296.7L694.6 292.2L703.0 287.8L711.3 283.4L719.6 278.9L727.9 274.5L736.2 270.1L744.6 265.6L752.9 261.2L761.2 256.8L769.5 252.3L777.8 247.9L779.7 247.4L781.2 247.2L783.4 247.4L785.1 247.8L787.3 248.6L788.8 249.5L790.7 251.0L791.8 252.3L793.0 254.1L793.6 255.6L794.0 257.6L793.9 259.0L793.4 260.7L792.8 261.9L791.0 263.4L782.7 267.8L774.5 272.2L766.2 276.6L758.0 281.1L749.7 285.5L741.4 289.9L733.2 294.3L724.9 298.7L716.6 303.1L708.4 307.5L700.1 311.9L699.6 312.4L699.5 312.8L699.8 313.8L700.6 314.4L701.1 314.5L701.8 314.3L710.4 309.7L719.0 305.1L727.7 300.5L736.3 295.9L744.9 291.3L753.5 286.7L762.1 282.1L770.7 277.5L779.4 272.9L788.0 268.3L796.6 263.7L798.4 263.4L800.4 264.2L802.1 266.0L802.8 268.2L802.6 270.2L801.4 271.5L792.8 276.1L784.1 280.8L775.5 285.4L766.8 290.0L758.2 294.6L749.5 299.2L740.9 303.8L732.2 308.5L723.6 313.1L715.0 317.7L706.3 322.3Z" fill="url(#gtop)" fill-rule="evenodd" stroke="#4b3622" stroke-width=".38" stroke-linejoin="round"/>
<path d="M647.4 283.9L649.2 282.7L653.0 300.8L651.0 302.0ZM649.2 282.7L651.5 281.4L655.3 299.5L653.0 300.8ZM651.5 281.4L652.4 280.6L656.4 298.7L655.3 299.5ZM627.9 300.2L629.7 299.5L631.0 317.2L629.2 317.9ZM629.7 299.5L632.4 297.9L633.7 315.6L631.0 317.2ZM632.4 297.9L634.6 296.2L636.1 314.0L633.7 315.6ZM634.6 296.2L636.6 294.6L638.3 312.3L636.1 314.0ZM636.6 294.6L638.3 292.9L640.3 310.7L638.3 312.3ZM638.3 292.9L640.2 290.8L642.6 308.7L640.3 310.7ZM640.2 290.8L642.2 288.7L645.0 306.7L642.6 308.7ZM642.2 288.7L644.1 286.7L647.4 304.7L645.0 306.7ZM644.1 286.7L647.4 283.9L651.0 302.0L647.4 304.7Z" fill="#ad8a60" stroke="#ad8a60" stroke-width=".3"/>
<path d="M621.6 299.1L621.9 299.9L624.6 317.8L624.6 317.2Z" fill="#d2a272" stroke="#d2a272" stroke-width=".3"/>
<path d="M621.9 299.9L623.3 300.4L625.5 318.3L624.6 317.8Z" fill="#cca272" stroke="#cca272" stroke-width=".3"/>
<path d="M623.3 300.4L625.5 300.5L627.2 318.3L625.5 318.3Z" fill="#ba9066" stroke="#ba9066" stroke-width=".3"/>
<path d="M625.5 300.5L627.9 300.2L629.2 317.9L627.2 318.3Z" fill="#a27e5a" stroke="#a27e5a" stroke-width=".3"/>
<path d="M621.9 299.9L624.6 317.8M625.5 300.5L627.2 318.3M627.9 300.2L629.2 317.9" fill="none" stroke="#5e452c" stroke-width=".35"/>
<path d="M647.4 283.9L644.1 286.7L642.2 288.7L640.2 290.8L638.3 292.9L636.6 294.6L634.6 296.2L632.4 297.9L629.7 299.5L627.9 300.2L625.5 300.5L623.3 300.4L621.9 299.9L621.6 299.1L622.5 298.3L624.7 296.9L626.6 295.7L628.3 294.3L629.8 292.9L631.3 291.6L633.6 289.4L635.9 287.4L637.6 286.0L639.6 284.6L641.8 283.2L644.5 281.7L646.4 280.8L648.6 280.1L650.7 279.8L652.1 280.0L652.4 280.6L651.5 281.4L649.2 282.7Z" fill="url(#gtop)" fill-rule="evenodd" stroke="#4b3622" stroke-width=".38" stroke-linejoin="round"/>
<path d="M691.6 349.4L687.3 353.9L673.8 355.5L678.3 351.6ZM687.3 353.9L683.0 358.4L669.3 359.5L673.8 355.5Z" fill="#e6bb88" stroke="#e6bb88" stroke-width=".3"/>
<path d="M693.6 305.9L690.8 310.3L682.3 321.0L685.5 317.2ZM693.3 327.9L694.8 332.4L682.9 338.1L682.1 334.7ZM694.8 332.4L696.0 337.7L683.6 342.1L682.9 338.1ZM696.0 337.7L696.3 339.1L683.7 343.1L683.6 342.1Z" fill="#f6cc96" stroke="#f6cc96" stroke-width=".3"/>
<path d="M690.8 310.3L690.2 311.7L681.5 322.3L682.3 321.0ZM690.2 311.7L689.8 313.4L680.9 323.6L681.5 322.3ZM689.8 313.4L689.7 315.1L680.5 325.0L680.9 323.6ZM689.7 315.1L689.8 317.0L680.3 326.5L680.5 325.0ZM689.8 317.0L690.2 318.9L680.4 328.0L680.3 326.5ZM691.7 323.5L693.3 327.9L682.1 334.7L681.1 331.4ZM681.7 362.5L682.3 364.8L668.2 364.5L667.8 362.8Z" fill="#f6c696" stroke="#f6c696" stroke-width=".3"/>
<path d="M690.2 318.9L690.8 321.0L680.6 329.6L680.4 328.0ZM690.8 321.0L691.7 323.5L681.1 331.4L680.6 329.6Z" fill="#f0c690" stroke="#f0c690" stroke-width=".3"/>
<path d="M696.3 339.1L696.2 341.4L683.3 344.9L683.7 343.1ZM696.2 341.4L695.2 344.2L682.1 347.2L683.3 344.9ZM683.0 358.4L682.0 360.2L668.2 361.0L669.3 359.5ZM682.0 360.2L681.7 362.5L667.8 362.8L668.2 361.0Z" fill="#fccc9c" stroke="#fccc9c" stroke-width=".3"/>
<path d="M695.2 344.2L693.1 347.6L679.8 350.0L682.1 347.2ZM693.1 347.6L691.6 349.4L678.3 351.6L679.8 350.0Z" fill="#fcd29c" stroke="#fcd29c" stroke-width=".3"/>
<path d="M682.3 364.8L683.5 366.3L669.3 365.4L668.2 364.5Z" fill="#d2ae84" stroke="#d2ae84" stroke-width=".3"/>
<path d="M683.5 366.3L685.1 366.7L670.8 365.5L669.3 365.4Z" fill="#ba9c72" stroke="#ba9c72" stroke-width=".3"/>
<path d="M689.8 317.0L680.3 326.5M696.2 341.4L683.3 344.9M691.6 349.4L678.3 351.6M683.0 358.4L669.3 359.5M682.0 360.2L668.2 361.0M683.5 366.3L669.3 365.4" fill="none" stroke="#5e452c" stroke-width=".35"/>
<path d="M698.2 315.7L697.7 317.1L697.7 318.8L698.1 320.9L698.6 322.2L700.2 326.8L701.6 331.5L703.1 339.2L703.1 342.8L702.6 345.3L701.9 347.3L700.8 349.7L699.4 352.1L697.8 354.4L695.7 356.8L691.2 361.4L686.6 365.9L685.1 366.7L683.5 366.3L682.3 364.8L681.7 362.5L682.0 360.2L683.0 358.4L687.3 353.9L691.6 349.4L693.1 347.6L695.2 344.2L696.2 341.4L696.3 339.1L696.0 337.7L694.8 332.4L693.3 327.9L691.7 323.5L690.8 321.0L690.2 318.9L689.8 317.0L689.7 315.1L689.8 313.4L690.2 311.7L690.8 310.3L693.6 305.9L695.0 304.9L697.0 304.8L699.1 305.8L700.7 307.5L701.4 309.5L700.9 311.4Z" fill="url(#gtop)" fill-rule="evenodd" stroke="#4b3622" stroke-width=".38" stroke-linejoin="round"/>
<path d="M593.4 368.9L601.6 364.5L592.0 374.0L583.8 378.4ZM601.6 364.5L609.9 360.1L600.3 369.6L592.0 374.0ZM609.9 360.1L618.1 355.7L608.5 365.2L600.3 369.6ZM618.1 355.7L626.3 351.3L616.7 360.8L608.5 365.2ZM626.3 351.3L634.6 346.9L625.0 356.4L616.7 360.8ZM634.6 346.9L642.8 342.5L633.2 352.0L625.0 356.4ZM642.8 342.5L651.0 338.2L641.5 347.6L633.2 352.0ZM651.0 338.2L659.3 333.8L649.7 343.2L641.5 347.6ZM659.3 333.8L667.5 329.4L657.9 338.8L649.7 343.2ZM667.5 329.4L669.3 327.8L659.8 337.3L657.9 338.8ZM577.0 352.4L577.5 351.9L572.4 366.1L571.8 366.5ZM577.5 351.9L585.7 347.5L580.6 361.7L572.4 366.1ZM585.7 347.5L594.0 343.1L588.8 357.3L580.6 361.7ZM594.0 343.1L602.2 338.7L597.1 352.9L588.8 357.3ZM602.2 338.7L610.4 334.3L605.3 348.5L597.1 352.9ZM610.4 334.3L618.7 329.9L613.5 344.1L605.3 348.5ZM618.7 329.9L626.9 325.5L621.8 339.7L613.5 344.1ZM626.9 325.5L635.1 321.1L630.0 335.3L621.8 339.7ZM635.1 321.1L643.4 316.7L638.3 330.9L630.0 335.3ZM643.4 316.7L651.6 312.3L646.5 326.5L638.3 330.9ZM651.6 312.3L653.3 310.9L648.3 325.2L646.5 326.5ZM653.3 310.9L653.9 309.9L649.0 324.3L648.3 325.2ZM558.8 341.7L558.9 341.5L558.8 358.7L558.7 358.9ZM558.9 341.5L559.4 341.1L559.3 358.3L558.8 358.7ZM559.4 341.1L567.6 336.7L567.6 353.9L559.3 358.3ZM567.6 336.7L575.9 332.2L575.9 349.5L567.6 353.9ZM575.9 332.2L584.2 327.8L584.2 345.0L575.9 349.5ZM584.2 327.8L592.5 323.4L592.5 340.6L584.2 345.0ZM592.5 323.4L600.8 318.9L600.8 336.2L592.5 340.6ZM600.8 318.9L609.1 314.5L609.1 331.7L600.8 336.2ZM609.1 314.5L617.4 310.1L617.4 327.3L609.1 331.7ZM617.4 310.1L625.7 305.6L625.7 322.9L617.4 327.3ZM625.7 305.6L634.0 301.2L634.0 318.4L625.7 322.9ZM634.0 301.2L635.1 300.3L635.2 317.5L634.0 318.4ZM635.1 300.3L635.7 299.5L635.9 316.8L635.2 317.5ZM635.7 299.5L635.9 298.4L636.5 315.9L635.9 316.8ZM540.6 338.3L540.7 338.2L545.7 356.3L545.6 356.5ZM540.7 338.2L541.2 337.9L546.3 356.0L545.7 356.3ZM541.2 337.9L549.5 333.4L554.6 351.6L546.3 356.0ZM549.5 333.4L557.8 329.0L562.9 347.1L554.6 351.6ZM557.8 329.0L566.1 324.6L571.1 342.7L562.9 347.1ZM566.1 324.6L574.4 320.1L579.4 338.3L571.1 342.7ZM574.4 320.1L582.7 315.7L587.7 333.8L579.4 338.3ZM582.7 315.7L590.9 311.3L596.0 329.4L587.7 333.8ZM590.9 311.3L599.2 306.8L604.3 325.0L596.0 329.4ZM599.2 306.8L607.5 302.4L612.6 320.5L604.3 325.0ZM607.5 302.4L615.8 298.0L620.9 316.1L612.6 320.5ZM615.8 298.0L617.0 297.2L622.2 315.3L620.9 316.1ZM617.0 297.2L617.6 296.6L622.9 314.8L622.2 315.3ZM617.6 296.6L617.9 296.0L623.5 314.1L622.9 314.8ZM524.6 342.9L524.7 342.8L534.2 359.7L534.1 359.7ZM524.7 342.8L525.3 342.6L534.8 359.4L534.2 359.7ZM525.3 342.6L533.6 338.1L543.1 354.9L534.8 359.4ZM533.6 338.1L541.9 333.7L551.4 350.5L543.1 354.9ZM541.9 333.7L550.1 329.3L559.7 346.1L551.4 350.5ZM550.1 329.3L558.4 324.8L568.0 341.7L559.7 346.1ZM558.4 324.8L566.7 320.4L576.3 337.2L568.0 341.7ZM566.7 320.4L575.0 316.0L584.6 332.8L576.3 337.2ZM575.0 316.0L583.3 311.6L592.9 328.4L584.6 332.8ZM583.3 311.6L591.6 307.1L601.2 323.9L592.9 328.4ZM591.6 307.1L599.9 302.7L609.5 319.5L601.2 323.9ZM599.9 302.7L601.1 302.1L610.8 318.8L609.5 319.5ZM601.1 302.1L601.8 301.7L611.6 318.4L610.8 318.8ZM601.8 301.7L602.3 301.6L612.3 318.1L611.6 318.4ZM602.3 301.6L602.5 301.6L612.6 318.0L612.3 318.1ZM593.4 307.8L593.7 307.6L605.0 323.0L604.7 323.2ZM593.7 307.6L594.5 307.0L605.7 322.5L605.0 323.0ZM594.5 307.0L594.7 306.6L605.7 322.3L605.7 322.5ZM530.1 340.6L531.9 339.7L539.3 357.5L537.6 358.3ZM531.9 339.7L540.2 335.3L547.6 353.0L539.3 357.5ZM540.2 335.3L548.5 330.8L555.9 348.6L547.6 353.0ZM548.5 330.8L556.8 326.4L564.2 344.2L555.9 348.6ZM556.8 326.4L565.1 322.0L572.5 339.7L564.2 344.2ZM565.1 322.0L573.4 317.5L580.8 335.3L572.5 339.7ZM573.4 317.5L581.7 313.1L589.1 330.9L580.8 335.3ZM581.7 313.1L590.0 308.7L597.4 326.4L589.1 330.9ZM590.0 308.7L598.3 304.2L605.8 322.0L597.4 326.4ZM598.3 304.2L606.6 299.8L614.1 317.6L605.8 322.0ZM606.6 299.8L607.4 299.4L614.8 317.2L614.1 317.6ZM607.4 299.4L607.9 299.2L615.2 317.0L614.8 317.2ZM607.9 299.2L608.8 298.9L615.9 316.7L615.2 317.0ZM608.8 298.9L609.2 298.9L616.2 316.8L615.9 316.7ZM547.3 339.7L549.2 338.9L551.8 356.9L550.0 357.7ZM549.2 338.9L557.5 334.5L560.1 352.5L551.8 356.9ZM557.5 334.5L565.8 330.1L568.4 348.0L560.1 352.5ZM565.8 330.1L574.1 325.6L576.7 343.6L568.4 348.0ZM574.1 325.6L582.4 321.2L585.0 339.2L576.7 343.6ZM582.4 321.2L590.7 316.8L593.3 334.8L585.0 339.2ZM590.7 316.8L599.0 312.4L601.6 330.3L593.3 334.8ZM599.0 312.4L607.3 307.9L609.9 325.9L601.6 330.3ZM607.3 307.9L615.6 303.5L618.2 321.5L609.9 325.9ZM615.6 303.5L624.0 299.1L626.5 317.0L618.2 321.5ZM624.0 299.1L624.7 298.8L627.3 316.7L626.5 317.0ZM624.7 298.8L625.3 298.6L627.7 316.6L627.3 316.7ZM625.3 298.6L626.3 298.6L628.5 316.5L627.7 316.6ZM626.3 298.6L626.7 298.9L628.8 316.8L628.5 316.5ZM565.8 346.6L567.6 346.0L565.0 362.0L563.3 362.7ZM567.6 346.0L575.9 341.6L573.3 357.6L565.0 362.0ZM575.9 341.6L584.2 337.2L581.6 353.2L573.3 357.6ZM584.2 337.2L592.5 332.8L589.9 348.7L581.6 353.2ZM592.5 332.8L600.9 328.3L598.2 344.3L589.9 348.7ZM600.9 328.3L609.2 323.9L606.6 339.9L598.2 344.3ZM609.2 323.9L617.5 319.5L614.9 335.4L606.6 339.9ZM617.5 319.5L625.8 315.1L623.2 331.0L614.9 335.4ZM625.8 315.1L634.1 310.6L631.5 326.6L623.2 331.0ZM634.1 310.6L642.4 306.2L639.8 322.2L631.5 326.6ZM642.4 306.2L643.2 305.9L640.5 321.9L639.8 322.2ZM643.2 305.9L643.7 305.9L641.0 321.8L640.5 321.9ZM643.7 305.9L644.7 306.2L641.8 322.0L641.0 321.8ZM644.7 306.2L645.1 306.8L642.0 322.5L641.8 322.0ZM583.1 360.6L585.6 359.9L578.1 371.9L575.8 372.7ZM585.6 359.9L593.8 355.5L586.3 367.5L578.1 371.9ZM593.8 355.5L602.0 351.1L594.6 363.1L586.3 367.5ZM602.0 351.1L610.3 346.7L602.8 358.7L594.6 363.1ZM610.3 346.7L618.5 342.3L611.0 354.3L602.8 358.7ZM618.5 342.3L626.7 337.9L619.3 349.9L611.0 354.3ZM626.7 337.9L635.0 333.5L627.5 345.5L619.3 349.9ZM635.0 333.5L643.2 329.1L635.7 341.1L627.5 345.5ZM643.2 329.1L651.4 324.7L644.0 336.7L635.7 341.1ZM651.4 324.7L659.7 320.3L652.2 332.3L644.0 336.7ZM659.7 320.3L660.4 320.1L652.9 332.1L652.2 332.3ZM660.4 320.1L660.9 320.2L653.4 332.1L652.9 332.1ZM660.9 320.2L661.8 320.7L654.1 332.5L653.4 332.1ZM661.8 320.7L662.2 321.6L654.3 333.1L654.1 332.5ZM597.2 379.9L599.6 379.3L588.2 385.9L585.9 386.6ZM673.7 339.7L674.4 339.6L663.0 346.1L662.3 346.3ZM674.4 339.6L674.9 339.7L663.4 346.1L663.0 346.1ZM674.9 339.7L675.6 340.4L664.0 346.6L663.4 346.1ZM675.6 340.4L675.8 341.4L664.1 347.3L664.0 346.6ZM683.4 361.8L683.8 362.0L669.8 362.1L669.4 362.1ZM683.8 362.0L684.3 362.7L670.2 362.7L669.8 362.1ZM684.3 362.7L684.2 363.8L670.1 363.5L670.2 362.7Z" fill="#745438" stroke="#745438" stroke-width=".3"/>
<path d="M684.0 364.2L683.4 364.8L669.3 364.3L669.9 363.8ZM683.4 364.8L674.7 369.4L660.6 368.9L669.3 364.3ZM674.7 369.4L666.1 374.0L651.9 373.6L660.6 368.9ZM666.1 374.0L657.4 378.7L643.3 378.2L651.9 373.6ZM657.4 378.7L648.7 383.3L634.6 382.8L643.3 378.2ZM648.7 383.3L640.0 387.9L625.9 387.5L634.6 382.8ZM640.0 387.9L631.4 392.6L617.3 392.1L625.9 387.5ZM631.4 392.6L622.7 397.2L608.6 396.7L617.3 392.1ZM622.7 397.2L614.0 401.8L599.9 401.3L608.6 396.7ZM614.0 401.8L605.4 406.4L591.2 406.0L599.9 401.3ZM605.4 406.4L604.0 407.8L589.8 407.2L591.2 406.0ZM680.9 353.0L672.6 357.4L659.4 360.1L667.7 355.7ZM672.6 357.4L664.3 361.9L651.1 364.6L659.4 360.1ZM664.3 361.9L656.0 366.3L642.8 369.0L651.1 364.6ZM656.0 366.3L647.7 370.7L634.5 373.4L642.8 369.0ZM647.7 370.7L639.4 375.1L626.2 377.8L634.5 373.4ZM639.4 375.1L631.1 379.6L617.9 382.3L626.2 377.8ZM631.1 379.6L622.8 384.0L609.6 386.7L617.9 382.3ZM622.8 384.0L614.4 388.4L601.3 391.1L609.6 386.7ZM614.4 388.4L606.1 392.8L593.0 395.5L601.3 391.1ZM662.2 321.6L662.1 322.0L654.1 333.4L654.3 333.1ZM675.8 341.4L675.6 341.8L663.9 347.7L664.1 347.3ZM675.6 341.8L675.1 342.3L663.3 348.2L663.9 347.7ZM600.4 382.3L599.1 383.5L587.3 389.2L588.6 388.1ZM684.2 363.8L684.0 364.2L669.9 363.8L670.1 363.5Z" fill="#e6bb88" stroke="#e6bb88" stroke-width=".3"/>
<path d="M604.0 407.8L603.3 410.0L589.0 408.9L589.8 407.2ZM598.4 384.7L597.7 386.6L585.6 391.7L586.4 390.2ZM597.7 386.6L597.4 388.1L585.1 393.0L585.6 391.7ZM597.4 388.1L597.4 390.4L584.9 394.7L585.1 393.0Z" fill="#fccc9c" stroke="#fccc9c" stroke-width=".3"/>
<path d="M603.3 410.0L603.3 412.3L588.9 410.7L589.0 408.9ZM597.4 390.4L597.6 392.1L584.9 396.1L584.9 394.7ZM597.6 392.1L598.2 394.4L585.2 397.8L584.9 396.1Z" fill="#f6cc96" stroke="#f6cc96" stroke-width=".3"/>
<path d="M603.3 412.3L604.0 414.3L589.6 412.0L588.9 410.7ZM584.6 367.7L585.0 369.7L576.0 379.8L576.0 378.3Z" fill="#e4ba8a" stroke="#e4ba8a" stroke-width=".3"/>
<path d="M604.0 414.3L605.4 415.3L590.8 412.5L589.6 412.0ZM592.4 378.8L593.9 379.5L582.8 386.6L581.6 386.3ZM602.3 400.8L603.5 401.5L589.8 402.5L588.7 402.1Z" fill="#c6a278" stroke="#c6a278" stroke-width=".3"/>
<path d="M516.7 347.6L516.9 347.2L527.0 363.7L527.1 363.8ZM516.9 347.2L517.4 346.8L527.2 363.5L527.0 363.7ZM531.9 341.2L532.4 341.4L538.1 359.5L538.0 359.2ZM532.4 341.4L533.1 341.6L538.5 359.7L538.1 359.5ZM549.6 341.9L549.7 342.7L550.8 360.3L551.0 359.6ZM549.7 342.7L550.4 343.6L551.1 361.1L550.8 360.3ZM550.4 343.6L551.2 344.3L551.5 361.6L551.1 361.1ZM567.9 350.8L568.1 351.9L564.0 366.9L564.2 366.0ZM568.1 351.9L568.6 353.4L564.2 368.1L564.0 366.9ZM568.6 353.4L569.4 354.6L564.6 369.0L564.2 368.1Z" fill="#d2a272" stroke="#d2a272" stroke-width=".3"/>
<path d="M517.4 346.8L518.5 346.2L527.9 363.0L527.2 363.5ZM518.5 346.2L519.5 345.6L528.7 362.6L527.9 363.0ZM533.1 341.6L534.5 341.6L539.4 359.8L538.5 359.7ZM534.5 341.6L535.8 341.6L540.4 359.8L539.4 359.8ZM551.2 344.3L552.7 345.1L552.5 362.3L551.5 361.6ZM552.7 345.1L554.0 345.6L553.5 362.7L552.5 362.3ZM569.4 354.6L570.8 356.1L565.5 370.2L564.6 369.0ZM570.8 356.1L572.0 357.1L566.4 370.9L565.5 370.2Z" fill="#cca272" stroke="#cca272" stroke-width=".3"/>
<path d="M519.5 345.6L521.2 344.7L530.0 361.9L528.7 362.6ZM535.8 341.6L537.8 341.5L541.9 359.7L540.4 359.8ZM554.0 345.6L556.1 346.3L555.1 363.1L553.5 362.7ZM572.0 357.1L574.0 358.4L567.9 371.8L566.4 370.9Z" fill="#c0966c" stroke="#c0966c" stroke-width=".3"/>
<path d="M521.2 344.7L522.7 344.0L531.2 361.4L530.0 361.9ZM537.8 341.5L539.4 341.3L543.2 359.5L541.9 359.7ZM556.1 346.3L557.8 346.6L556.4 363.3L555.1 363.1ZM574.0 358.4L575.6 359.2L569.2 372.3L567.9 371.8Z" fill="#ba9066" stroke="#ba9066" stroke-width=".3"/>
<path d="M522.7 344.0L524.8 343.0L532.9 360.5L531.2 361.4ZM539.4 341.3L541.7 341.0L545.1 359.1L543.2 359.5ZM557.8 346.6L560.1 347.0L558.3 363.4L556.4 363.3Z" fill="#ae8a60" stroke="#ae8a60" stroke-width=".3"/>
<path d="M524.8 343.0L526.4 342.3L534.3 359.9L532.9 360.5ZM541.7 341.0L543.5 340.7L546.6 358.8L545.1 359.1ZM560.1 347.0L561.9 347.0L559.8 363.3L558.3 363.4Z" fill="#a8845a" stroke="#a8845a" stroke-width=".3"/>
<path d="M526.4 342.3L528.6 341.3L536.2 359.0L534.3 359.9ZM543.5 340.7L545.8 340.2L548.6 358.2L546.6 358.8ZM561.9 347.0L564.2 346.9L561.8 363.0L559.8 363.3Z" fill="#9c7e5a" stroke="#9c7e5a" stroke-width=".3"/>
<path d="M528.6 341.3L530.1 340.6L537.6 358.3L536.2 359.0ZM545.8 340.2L547.3 339.7L550.0 357.7L548.6 358.2ZM564.2 346.9L565.8 346.6L563.3 362.7L561.8 363.0Z" fill="#9c7854" stroke="#9c7854" stroke-width=".3"/>
<path d="M575.6 359.2L577.8 360.1L571.0 372.8L569.2 372.3Z" fill="#b48a66" stroke="#b48a66" stroke-width=".3"/>
<path d="M577.8 360.1L579.4 360.5L572.4 373.0L571.0 372.8ZM579.4 360.5L581.6 360.7L574.4 373.0L572.4 373.0Z" fill="#a88460" stroke="#a88460" stroke-width=".3"/>
<path d="M581.6 360.7L583.1 360.6L575.8 372.7L574.4 373.0Z" fill="#a27e5a" stroke="#a27e5a" stroke-width=".3"/>
<path d="M585.7 363.5L585.1 364.6L576.9 375.8L577.6 374.8ZM585.1 364.6L584.7 366.3L576.2 377.2L576.9 375.8Z" fill="#e4b484" stroke="#e4b484" stroke-width=".3"/>
<path d="M584.7 366.3L584.6 367.7L576.0 378.3L576.2 377.2Z" fill="#e4ba84" stroke="#e4ba84" stroke-width=".3"/>
<path d="M585.0 369.7L585.5 371.2L576.2 381.0L576.0 379.8ZM585.5 371.2L586.6 373.2L576.9 382.5L576.2 381.0ZM586.6 373.2L587.6 374.7L577.6 383.5L576.9 382.5Z" fill="#eaba8a" stroke="#eaba8a" stroke-width=".3"/>
<path d="M587.6 374.7L589.2 376.4L578.9 384.8L577.6 383.5ZM599.9 398.1L600.9 399.4L587.4 401.2L586.6 400.4Z" fill="#deb484" stroke="#deb484" stroke-width=".3"/>
<path d="M589.2 376.4L590.5 377.6L580.0 385.5L578.9 384.8Z" fill="#d8ae84" stroke="#d8ae84" stroke-width=".3"/>
<path d="M590.5 377.6L592.4 378.8L581.6 386.3L580.0 385.5Z" fill="#cca87e" stroke="#cca87e" stroke-width=".3"/>
<path d="M593.9 379.5L595.8 379.9L584.6 386.8L582.8 386.6ZM603.5 401.5L605.1 402.1L591.3 402.7L589.8 402.5Z" fill="#c09c72" stroke="#c09c72" stroke-width=".3"/>
<path d="M595.8 379.9L597.2 379.9L585.9 386.6L584.6 386.8ZM605.1 402.1L606.4 402.2L592.5 402.6L591.3 402.7Z" fill="#ba9672" stroke="#ba9672" stroke-width=".3"/>
<path d="M599.1 383.5L598.4 384.7L586.4 390.2L587.3 389.2Z" fill="#fcd29c" stroke="#fcd29c" stroke-width=".3"/>
<path d="M598.2 394.4L598.8 396.1L585.7 399.0L585.2 397.8Z" fill="#f6c696" stroke="#f6c696" stroke-width=".3"/>
<path d="M598.8 396.1L599.9 398.1L586.6 400.4L585.7 399.0Z" fill="#eac090" stroke="#eac090" stroke-width=".3"/>
<path d="M600.9 399.4L602.3 400.8L588.7 402.1L587.4 401.2Z" fill="#d2a87e" stroke="#d2a87e" stroke-width=".3"/>
<path d="M604.0 407.8L589.8 407.2M603.3 410.0L589.0 408.9M604.0 414.3L589.6 412.0M524.8 343.0L532.9 360.5M530.1 340.6L537.6 358.3M541.7 341.0L545.1 359.1M547.3 339.7L550.0 357.7M549.7 342.7L550.8 360.3M560.1 347.0L558.3 363.4M565.8 346.6L563.3 362.7M568.1 351.9L564.0 366.9M577.8 360.1L571.0 372.8M583.1 360.6L575.8 372.7M584.6 367.7L576.0 378.3M592.4 378.8L581.6 386.3M597.2 379.9L585.9 386.6M599.1 383.5L587.3 389.2M597.4 388.1L585.1 393.0M602.3 400.8L588.7 402.1" fill="none" stroke="#5e452c" stroke-width=".35"/>
<path d="M684.0 364.2L684.2 363.8L684.3 362.7L683.8 362.0L683.4 361.8L682.7 362.0L674.5 366.4L666.2 370.8L658.0 375.2L649.8 379.6L641.5 384.0L633.3 388.4L625.1 392.8L616.8 397.2L608.6 401.6L606.4 402.2L605.1 402.1L603.5 401.5L602.3 400.8L600.9 399.4L599.9 398.1L598.8 396.1L598.2 394.4L597.6 392.1L597.4 390.4L597.4 388.1L597.7 386.6L598.4 384.7L599.1 383.5L600.4 382.3L608.7 377.9L617.0 373.4L625.3 369.0L633.6 364.5L641.9 360.1L650.2 355.7L658.5 351.2L666.8 346.8L675.1 342.3L675.6 341.8L675.8 341.4L675.6 340.4L674.9 339.7L674.4 339.6L673.7 339.7L665.5 344.1L657.2 348.5L649.0 352.9L640.7 357.3L632.5 361.7L624.3 366.1L616.0 370.5L607.8 374.9L599.6 379.3L597.2 379.9L595.8 379.9L593.9 379.5L592.4 378.8L590.5 377.6L589.2 376.4L587.6 374.7L586.6 373.2L585.5 371.2L585.0 369.7L584.6 367.7L584.7 366.3L585.1 364.6L585.7 363.5L587.0 362.4L595.2 358.0L603.5 353.5L611.8 349.1L620.1 344.6L628.4 340.2L636.7 335.8L645.0 331.3L653.3 326.9L661.6 322.5L662.1 322.0L662.2 321.6L661.8 320.7L660.9 320.2L660.4 320.1L659.7 320.3L651.4 324.7L643.2 329.1L635.0 333.5L626.7 337.9L618.5 342.3L610.3 346.7L602.0 351.1L593.8 355.5L585.6 359.9L583.1 360.6L581.6 360.7L579.4 360.5L577.8 360.1L575.6 359.2L574.0 358.4L572.0 357.1L570.8 356.1L569.4 354.6L568.6 353.4L568.1 351.9L567.9 350.8L568.2 349.4L568.8 348.5L570.0 347.5L578.3 343.1L586.5 338.6L594.8 334.2L603.1 329.8L611.4 325.3L619.7 320.9L628.0 316.4L636.3 312.0L644.6 307.6L645.1 307.1L645.1 306.8L644.7 306.2L643.7 305.9L643.2 305.9L642.4 306.2L634.1 310.6L625.8 315.1L617.5 319.5L609.2 323.9L600.9 328.3L592.5 332.8L584.2 337.2L575.9 341.6L567.6 346.0L565.8 346.6L564.2 346.9L561.9 347.0L560.1 347.0L557.8 346.6L556.1 346.3L554.0 345.6L552.7 345.1L551.2 344.3L550.4 343.6L549.7 342.7L549.6 341.9L549.8 341.0L550.4 340.3L552.1 339.1L560.3 334.7L568.5 330.3L576.8 325.9L585.0 321.5L593.2 317.1L601.5 312.7L609.7 308.3L617.9 303.9L626.2 299.5L626.7 299.1L626.7 298.9L626.3 298.6L625.3 298.6L624.7 298.8L624.0 299.1L615.6 303.5L607.3 307.9L599.0 312.4L590.7 316.8L582.4 321.2L574.1 325.6L565.8 330.1L557.5 334.5L549.2 338.9L547.3 339.7L545.8 340.2L543.5 340.7L541.7 341.0L539.4 341.3L537.8 341.5L535.8 341.6L534.5 341.6L533.1 341.6L532.4 341.4L531.9 341.2L531.8 340.9L532.2 340.4L532.8 339.9L534.5 338.9L542.7 334.5L551.0 330.1L559.2 325.7L567.4 321.3L575.7 316.9L583.9 312.5L592.1 308.1L600.4 303.7L608.6 299.3L609.1 299.0L609.2 298.9L608.8 298.9L607.9 299.2L607.4 299.4L606.6 299.8L598.3 304.2L590.0 308.7L581.7 313.1L573.4 317.5L565.1 322.0L556.8 326.4L548.5 330.8L540.2 335.3L531.9 339.7L530.1 340.6L528.6 341.3L526.4 342.3L524.8 343.0L522.7 344.0L521.2 344.7L519.7 345.5L525.9 342.1L526.3 342.0L527.0 341.6L535.2 337.2L543.5 332.8L551.7 328.4L560.0 324.0L568.2 319.6L576.4 315.2L584.7 310.8L592.9 306.4L601.1 302.0L603.5 300.7L605.0 299.9L607.1 298.9L608.7 298.1L610.8 297.1L612.3 296.5L614.2 295.9L615.4 295.6L616.6 295.4L617.3 295.4L617.9 295.7L617.9 296.0L617.6 296.6L617.0 297.2L615.8 298.0L607.5 302.4L599.2 306.8L590.9 311.3L582.7 315.7L574.4 320.1L566.1 324.6L557.8 329.0L549.5 333.4L541.2 337.9L540.7 338.2L540.6 338.3L541.1 338.5L542.0 338.3L542.5 338.2L543.3 337.8L551.6 333.4L559.8 329.0L568.0 324.6L576.3 320.2L584.5 315.8L592.7 311.4L601.0 307.0L609.2 302.6L617.4 298.2L619.9 297.1L621.5 296.6L623.7 295.9L625.5 295.6L627.8 295.3L629.5 295.2L631.5 295.3L632.9 295.6L634.3 296.2L635.2 296.8L635.8 297.7L635.9 298.4L635.7 299.5L635.1 300.3L634.0 301.2L625.7 305.6L617.4 310.1L609.1 314.5L600.8 318.9L592.5 323.4L584.2 327.8L575.9 332.2L567.6 336.7L559.4 341.1L558.9 341.5L558.8 341.7L559.3 342.2L560.3 342.4L560.8 342.3L561.6 342.0L569.9 337.6L578.2 333.2L586.5 328.7L594.8 324.3L603.1 319.9L611.4 315.5L619.7 311.0L628.1 306.6L636.4 302.2L638.2 301.5L639.8 301.2L642.1 301.0L643.9 301.0L646.2 301.3L647.9 301.8L650.0 302.6L651.3 303.5L652.7 304.8L653.5 305.9L654.1 307.4L654.2 308.5L653.9 309.9L653.3 310.9L651.6 312.3L643.4 316.7L635.1 321.1L626.9 325.5L618.7 329.9L610.4 334.3L602.2 338.7L594.0 343.1L585.7 347.5L577.5 351.9L577.0 352.4L576.9 352.7L577.4 353.4L578.3 353.9L578.8 353.9L579.6 353.7L587.9 349.2L596.2 344.8L604.5 340.4L612.8 336.0L621.1 331.5L629.4 327.1L637.7 322.7L646.0 318.3L654.3 313.8L656.2 313.3L657.7 313.2L659.9 313.3L661.6 313.7L663.8 314.6L665.4 315.5L667.2 316.9L668.4 318.2L669.5 320.1L670.1 321.6L670.5 323.5L670.4 325.0L669.9 326.7L669.3 327.8L667.5 329.4L659.3 333.8L651.0 338.2L642.8 342.5L634.6 346.9L626.3 351.3L618.1 355.7L609.9 360.1L601.6 364.5L593.4 368.9L592.9 369.4L592.7 369.8L593.0 370.8L593.9 371.4L594.3 371.5L595.1 371.3L603.4 366.9L611.7 362.5L620.0 358.1L628.3 353.6L636.6 349.2L644.9 344.8L653.2 340.4L661.5 335.9L669.8 331.5L671.6 331.1L673.0 331.1L675.0 331.5L676.5 332.1L678.4 333.4L679.7 334.6L681.1 336.4L681.9 338.0L682.7 340.2L683.0 342.0L683.0 344.2L682.6 345.8L681.9 347.7L681.1 348.9L679.2 350.5L671.0 354.9L662.7 359.3L654.5 363.7L646.3 368.1L638.0 372.5L629.8 376.9L621.6 381.3L613.3 385.7L605.1 390.1L604.5 390.6L604.3 391.0L604.4 392.1L605.0 392.9L605.4 393.0L606.1 392.8L614.4 388.4L622.8 384.0L631.1 379.6L639.4 375.1L647.7 370.7L656.0 366.3L664.3 361.9L672.6 357.4L680.9 353.0L682.5 352.6L683.8 352.7L685.5 353.3L686.8 354.0L688.2 355.4L689.1 356.7L690.0 358.7L690.4 360.4L690.6 362.8L690.5 364.5L690.0 366.8L689.3 368.5L688.3 370.4L687.3 371.6L685.3 373.2L676.6 377.9L667.9 382.5L659.1 387.1L650.4 391.8L641.7 396.4L633.0 401.1L624.3 405.7L615.6 410.4L606.9 415.0L605.4 415.3L604.0 414.3L603.3 412.3L603.3 410.0L604.0 407.8L605.4 406.4L614.0 401.8L622.7 397.2L631.4 392.6L640.0 387.9L648.7 383.3L657.4 378.7L666.1 374.0L674.7 369.4L683.4 364.8Z" fill="url(#gtop)" fill-rule="evenodd" stroke="#4b3622" stroke-width=".38" stroke-linejoin="round"/>
<path d="M595.4 379.2L598.6 378.5L587.3 385.3L584.3 386.3ZM539.2 366.5L542.1 365.7L538.1 380.7L535.4 381.7Z" fill="#ad8a60" stroke="#ad8a60" stroke-width=".3"/>
<path d="M594.4 379.3L595.4 379.2L584.3 386.3L583.3 386.4Z" fill="#b49672" stroke="#b49672" stroke-width=".3"/>
<path d="M531.9 363.9L532.9 365.2L530.1 381.1L529.7 380.0Z" fill="#d2a272" stroke="#d2a272" stroke-width=".3"/>
<path d="M532.9 365.2L534.8 366.2L531.5 381.8L530.1 381.1Z" fill="#c69c6c" stroke="#c69c6c" stroke-width=".3"/>
<path d="M534.8 366.2L537.1 366.8L533.4 382.1L531.5 381.8Z" fill="#ae8a60" stroke="#ae8a60" stroke-width=".3"/>
<path d="M537.1 366.8L539.2 366.5L535.4 381.7L533.4 382.1ZM542.1 365.7L545.4 365.5L541.1 380.3L538.1 380.7Z" fill="#9c7854" stroke="#9c7854" stroke-width=".3"/>
<path d="M545.4 365.5L550.0 365.8L545.0 380.2L541.1 380.3Z" fill="#a27e5a" stroke="#a27e5a" stroke-width=".3"/>
<path d="M550.0 365.8L555.4 366.8L549.6 380.5L545.0 380.2Z" fill="#a8845a" stroke="#a8845a" stroke-width=".3"/>
<path d="M555.4 366.8L561.3 368.4L554.6 381.2L549.6 380.5Z" fill="#a88460" stroke="#a88460" stroke-width=".3"/>
<path d="M561.3 368.4L567.4 370.5L559.8 382.3L554.6 381.2Z" fill="#ae8a66" stroke="#ae8a66" stroke-width=".3"/>
<path d="M567.4 370.5L573.4 372.7L564.9 383.5L559.8 382.3Z" fill="#b49066" stroke="#b49066" stroke-width=".3"/>
<path d="M573.4 372.7L579.2 375.1L569.9 384.8L564.9 383.5Z" fill="#ba966c" stroke="#ba966c" stroke-width=".3"/>
<path d="M579.2 375.1L584.7 377.1L574.6 385.8L569.9 384.8ZM584.7 377.1L590.4 378.8L579.7 386.5L574.6 385.8ZM590.4 378.8L594.4 379.3L583.3 386.4L579.7 386.5Z" fill="#ba9672" stroke="#ba9672" stroke-width=".3"/>
<path d="M595.4 379.2L584.3 386.3M537.1 366.8L533.4 382.1M539.2 366.5L535.4 381.7M542.1 365.7L538.1 380.7" fill="none" stroke="#5e452c" stroke-width=".35"/>
<path d="M594.4 379.3L590.4 378.8L584.7 377.1L579.2 375.1L573.4 372.7L567.4 370.5L561.3 368.4L555.4 366.8L550.0 365.8L545.4 365.5L542.1 365.7L539.2 366.5L537.1 366.8L534.8 366.2L532.9 365.2L531.9 363.9L532.2 362.6L533.6 361.8L537.0 360.6L538.2 360.4L543.4 359.9L549.2 360.0L555.4 360.9L561.7 362.2L568.0 364.0L574.2 366.0L579.9 368.0L584.9 369.6L589.1 370.7L592.2 370.9L594.9 370.2L596.9 370.3L598.8 371.5L600.2 373.5L600.6 375.6L600.0 377.5L598.6 378.5L595.4 379.2Z" fill="url(#gtop)" fill-rule="evenodd" stroke="#4b3622" stroke-width=".38" stroke-linejoin="round"/>
<path d="M489.2 437.6L491.5 437.0L480.1 443.6L477.8 444.3ZM485.3 426.6L493.6 422.2L484.0 431.7L475.8 436.1ZM493.6 422.2L501.8 417.8L492.2 427.3L484.0 431.7ZM501.8 417.8L510.0 413.4L500.5 422.9L492.2 427.3ZM510.0 413.4L518.3 409.0L508.7 418.5L500.5 422.9ZM518.3 409.0L526.5 404.6L516.9 414.1L508.7 418.5ZM526.5 404.6L534.7 400.3L525.2 409.7L516.9 414.1ZM534.7 400.3L543.0 395.9L533.4 405.3L525.2 409.7ZM543.0 395.9L551.2 391.5L541.6 400.9L533.4 405.3ZM551.2 391.5L559.4 387.1L549.9 396.5L541.6 400.9ZM559.4 387.1L561.2 385.5L551.7 395.1L549.9 396.5ZM468.9 410.1L469.4 409.6L464.3 423.8L463.8 424.2ZM469.4 409.6L477.7 405.2L472.6 419.4L464.3 423.8ZM477.7 405.2L485.9 400.8L480.8 415.0L472.6 419.4ZM485.9 400.8L494.1 396.4L489.0 410.6L480.8 415.0ZM494.1 396.4L502.4 392.0L497.3 406.2L489.0 410.6ZM502.4 392.0L510.6 387.6L505.5 401.8L497.3 406.2ZM510.6 387.6L518.8 383.2L513.7 397.4L505.5 401.8ZM518.8 383.2L527.1 378.8L522.0 393.0L513.7 397.4ZM527.1 378.8L535.3 374.4L530.2 388.6L522.0 393.0ZM535.3 374.4L543.5 370.0L538.4 384.2L530.2 388.6ZM543.5 370.0L545.2 368.6L540.2 382.9L538.4 384.2ZM545.2 368.6L545.8 367.6L540.9 382.0L540.2 382.9ZM450.7 399.4L450.8 399.2L450.7 416.4L450.6 416.6ZM450.8 399.2L451.3 398.8L451.3 416.0L450.7 416.4ZM451.3 398.8L459.5 394.4L459.5 411.6L451.3 416.0ZM459.5 394.4L467.8 390.0L467.7 407.2L459.5 411.6ZM467.8 390.0L476.0 385.6L476.0 402.8L467.7 407.2ZM476.0 385.6L484.2 381.2L484.2 398.4L476.0 402.8ZM484.2 381.2L492.5 376.8L492.4 394.0L484.2 398.4ZM492.5 376.8L500.7 372.4L500.7 389.6L492.4 394.0ZM500.7 372.4L508.9 368.0L508.9 385.3L500.7 389.6ZM508.9 368.0L517.2 363.6L517.1 380.9L508.9 385.3ZM517.2 363.6L525.4 359.2L525.4 376.5L517.1 380.9ZM525.4 359.2L527.1 358.0L527.2 375.2L525.4 376.5ZM527.1 358.0L527.6 357.2L527.9 374.5L527.2 375.2ZM527.6 357.2L527.9 356.1L528.4 373.6L527.9 374.5ZM432.6 396.0L432.6 395.9L437.7 414.0L437.5 414.2ZM432.6 395.9L433.1 395.6L438.2 413.7L437.7 414.0ZM433.1 395.6L441.4 391.1L446.5 409.3L438.2 413.7ZM441.4 391.1L449.7 386.7L454.8 404.8L446.5 409.3ZM449.7 386.7L458.0 382.3L463.1 400.4L454.8 404.8ZM458.0 382.3L466.3 377.8L471.4 396.0L463.1 400.4ZM466.3 377.8L474.6 373.4L479.7 391.5L471.4 396.0ZM474.6 373.4L482.9 369.0L488.0 387.1L479.7 391.5ZM482.9 369.0L491.2 364.5L496.3 382.7L488.0 387.1ZM491.2 364.5L499.5 360.1L504.6 378.2L496.3 382.7ZM499.5 360.1L507.8 355.7L512.9 373.8L504.6 378.2ZM507.8 355.7L508.9 354.9L514.1 373.0L512.9 373.8ZM508.9 354.9L509.5 354.3L514.8 372.5L514.1 373.0ZM509.5 354.3L509.9 353.7L515.4 371.8L514.8 372.5ZM416.6 400.6L416.7 400.5L426.2 417.4L426.0 417.5ZM416.7 400.5L417.2 400.3L426.7 417.1L426.2 417.4ZM417.2 400.3L425.5 395.8L435.0 412.7L426.7 417.1ZM425.5 395.8L433.8 391.4L443.3 408.2L435.0 412.7ZM433.8 391.4L442.1 387.0L451.6 403.8L443.3 408.2ZM442.1 387.0L450.4 382.5L459.9 399.4L451.6 403.8ZM450.4 382.5L458.7 378.1L468.2 394.9L459.9 399.4ZM458.7 378.1L467.0 373.7L476.5 390.5L468.2 394.9ZM467.0 373.7L475.3 369.3L484.8 386.1L476.5 390.5ZM475.3 369.3L483.6 364.8L493.1 381.6L484.8 386.1ZM483.6 364.8L491.8 360.4L501.4 377.2L493.1 381.6ZM491.8 360.4L493.1 359.8L502.7 376.5L501.4 377.2ZM493.1 359.8L493.8 359.4L503.5 376.1L502.7 376.5ZM493.8 359.4L494.3 359.3L504.2 375.8L503.5 376.1ZM494.3 359.3L494.4 359.3L504.5 375.7L504.2 375.8ZM485.4 365.5L485.7 365.3L497.0 380.7L496.7 380.9ZM485.7 365.3L486.4 364.7L497.6 380.2L497.0 380.7ZM486.4 364.7L486.7 364.3L497.7 380.0L497.6 380.2ZM422.0 398.3L423.8 397.4L431.3 415.2L429.5 416.0ZM423.8 397.4L432.1 393.0L439.6 410.7L431.3 415.2ZM432.1 393.0L440.4 388.5L447.9 406.3L439.6 410.7ZM440.4 388.5L448.7 384.1L456.2 401.9L447.9 406.3ZM448.7 384.1L457.1 379.7L464.5 397.4L456.2 401.9ZM457.1 379.7L465.4 375.2L472.8 393.0L464.5 397.4ZM465.4 375.2L473.7 370.8L481.1 388.6L472.8 393.0ZM473.7 370.8L482.0 366.4L489.4 384.1L481.1 388.6ZM482.0 366.4L490.3 361.9L497.7 379.7L489.4 384.1ZM490.3 361.9L498.6 357.5L506.0 375.3L497.7 379.7ZM498.6 357.5L499.3 357.1L506.7 374.9L506.0 375.3ZM499.3 357.1L499.8 356.9L507.2 374.7L506.7 374.9ZM499.8 356.9L500.7 356.6L507.9 374.4L507.2 374.7ZM500.7 356.6L501.1 356.6L508.1 374.5L507.9 374.4ZM439.3 397.4L441.1 396.6L443.7 414.6L442.0 415.4ZM441.1 396.6L449.4 392.2L452.0 410.2L443.7 414.6ZM449.4 392.2L457.7 387.8L460.3 405.7L452.0 410.2ZM457.7 387.8L466.1 383.3L468.6 401.3L460.3 405.7ZM466.1 383.3L474.4 378.9L476.9 396.9L468.6 401.3ZM474.4 378.9L482.7 374.5L485.2 392.5L476.9 396.9ZM482.7 374.5L491.0 370.1L493.5 388.0L485.2 392.5ZM491.0 370.1L499.3 365.6L501.8 383.6L493.5 388.0ZM499.3 365.6L507.6 361.2L510.1 379.2L501.8 383.6ZM507.6 361.2L515.9 356.8L518.5 374.7L510.1 379.2ZM515.9 356.8L516.7 356.5L519.2 374.4L518.5 374.7ZM516.7 356.5L517.2 356.3L519.6 374.3L519.2 374.4ZM517.2 356.3L518.2 356.3L520.4 374.2L519.6 374.3ZM518.2 356.3L518.7 356.6L520.7 374.5L520.4 374.2ZM457.7 404.3L459.6 403.7L457.0 419.7L455.2 420.4ZM459.6 403.7L467.9 399.3L465.3 415.3L457.0 419.7ZM467.9 399.3L476.2 394.9L473.6 410.9L465.3 415.3ZM476.2 394.9L484.5 390.5L481.9 406.4L473.6 410.9ZM484.5 390.5L492.8 386.0L490.2 402.0L481.9 406.4ZM492.8 386.0L501.1 381.6L498.5 397.6L490.2 402.0ZM501.1 381.6L509.4 377.2L506.8 393.2L498.5 397.6ZM509.4 377.2L517.7 372.8L515.1 388.7L506.8 393.2ZM517.7 372.8L526.0 368.3L523.4 384.3L515.1 388.7ZM526.0 368.3L534.3 363.9L531.7 379.9L523.4 384.3ZM534.3 363.9L535.1 363.7L532.5 379.6L531.7 379.9ZM535.1 363.7L535.6 363.6L532.9 379.5L532.5 379.6ZM535.6 363.6L536.6 363.9L533.7 379.7L532.9 379.5ZM536.6 363.9L537.1 364.5L534.0 380.2L533.7 379.7ZM475.1 418.3L476.9 417.9L469.4 429.9L467.7 430.4ZM476.9 417.9L485.2 413.4L477.7 425.4L469.4 429.9ZM485.2 413.4L493.5 409.0L486.0 421.0L477.7 425.4ZM493.5 409.0L501.8 404.6L494.3 416.6L486.0 421.0ZM501.8 404.6L510.1 400.2L502.6 412.2L494.3 416.6ZM510.1 400.2L518.4 395.7L510.9 407.7L502.6 412.2ZM518.4 395.7L526.7 391.3L519.2 403.3L510.9 407.7ZM526.7 391.3L535.0 386.9L527.5 398.9L519.2 403.3ZM535.0 386.9L543.3 382.5L535.8 394.5L527.5 398.9ZM543.3 382.5L551.6 378.0L544.1 390.0L535.8 394.5ZM551.6 378.0L552.4 377.8L544.9 389.8L544.1 390.0ZM552.4 377.8L552.9 377.9L545.3 389.8L544.9 389.8ZM552.9 377.9L553.8 378.5L546.0 390.2L545.3 389.8ZM553.8 378.5L554.1 379.3L546.2 390.8L546.0 390.2Z" fill="#745438" stroke="#745438" stroke-width=".3"/>
<path d="M554.1 379.3L554.0 379.7L546.1 391.1L546.2 390.8Z" fill="#e6bb88" stroke="#e6bb88" stroke-width=".3"/>
<path d="M408.6 405.3L408.9 404.9L419.0 421.4L419.0 421.5ZM408.9 404.9L409.4 404.5L419.2 421.2L419.0 421.4ZM423.8 398.9L424.3 399.2L430.1 417.2L429.9 416.9ZM424.3 399.2L425.1 399.3L430.5 417.4L430.1 417.2ZM441.5 399.7L441.7 400.4L442.8 418.0L442.9 417.4ZM441.7 400.4L442.3 401.3L443.0 418.8L442.8 418.0ZM442.3 401.3L443.1 402.0L443.5 419.3L443.0 418.8ZM459.9 408.5L460.0 409.6L456.0 424.6L456.1 423.7ZM460.0 409.6L460.6 411.1L456.2 425.8L456.0 424.6ZM460.6 411.1L461.3 412.3L456.6 426.7L456.2 425.8Z" fill="#d2a272" stroke="#d2a272" stroke-width=".3"/>
<path d="M409.4 404.5L410.4 403.9L419.8 420.7L419.2 421.2ZM410.4 403.9L411.5 403.3L420.6 420.3L419.8 420.7ZM425.1 399.3L426.4 399.4L431.4 417.5L430.5 417.4ZM426.4 399.4L427.7 399.3L432.3 417.5L431.4 417.5ZM443.1 402.0L444.6 402.8L444.4 420.0L443.5 419.3ZM444.6 402.8L446.0 403.4L445.4 420.4L444.4 420.0ZM461.3 412.3L462.7 413.8L457.5 427.9L456.6 426.7ZM462.7 413.8L464.0 414.8L458.4 428.6L457.5 427.9Z" fill="#cca272" stroke="#cca272" stroke-width=".3"/>
<path d="M411.5 403.3L413.2 402.4L421.9 419.6L420.6 420.3ZM427.7 399.3L429.7 399.2L433.8 417.4L432.3 417.5ZM446.0 403.4L448.0 404.0L447.0 420.8L445.4 420.4ZM464.0 414.8L465.9 416.1L459.9 429.5L458.4 428.6Z" fill="#c0966c" stroke="#c0966c" stroke-width=".3"/>
<path d="M413.2 402.4L414.6 401.7L423.1 419.1L421.9 419.6ZM429.7 399.2L431.4 399.0L435.1 417.2L433.8 417.4ZM448.0 404.0L449.7 404.4L448.3 421.0L447.0 420.8ZM465.9 416.1L467.5 416.9L461.1 430.0L459.9 429.5Z" fill="#ba9066" stroke="#ba9066" stroke-width=".3"/>
<path d="M414.6 401.7L416.7 400.7L424.9 418.2L423.1 419.1ZM431.4 399.0L433.7 398.7L437.0 416.8L435.1 417.2ZM449.7 404.4L452.1 404.7L450.3 421.1L448.3 421.0Z" fill="#ae8a60" stroke="#ae8a60" stroke-width=".3"/>
<path d="M416.7 400.7L418.4 400.0L426.3 417.6L424.9 418.2ZM433.7 398.7L435.4 398.4L438.5 416.5L437.0 416.8ZM452.1 404.7L453.9 404.7L451.8 421.0L450.3 421.1Z" fill="#a8845a" stroke="#a8845a" stroke-width=".3"/>
<path d="M418.4 400.0L420.5 399.0L428.1 416.7L426.3 417.6ZM435.4 398.4L437.7 397.9L440.5 415.9L438.5 416.5ZM453.9 404.7L456.1 404.6L453.8 420.7L451.8 421.0Z" fill="#9c7e5a" stroke="#9c7e5a" stroke-width=".3"/>
<path d="M420.5 399.0L422.0 398.3L429.5 416.0L428.1 416.7ZM437.7 397.9L439.3 397.4L442.0 415.4L440.5 415.9ZM456.1 404.6L457.7 404.3L455.2 420.4L453.8 420.7Z" fill="#9c7854" stroke="#9c7854" stroke-width=".3"/>
<path d="M467.5 416.9L469.7 417.8L462.9 430.5L461.1 430.0Z" fill="#b48a66" stroke="#b48a66" stroke-width=".3"/>
<path d="M469.7 417.8L471.4 418.2L464.4 430.7L462.9 430.5ZM471.4 418.2L473.5 418.4L466.3 430.7L464.4 430.7Z" fill="#a88460" stroke="#a88460" stroke-width=".3"/>
<path d="M473.5 418.4L475.1 418.3L467.7 430.4L466.3 430.7Z" fill="#a27e5a" stroke="#a27e5a" stroke-width=".3"/>
<path d="M477.7 421.2L477.0 422.3L468.8 433.5L469.6 432.5ZM477.0 422.3L476.6 424.0L468.1 434.9L468.8 433.5Z" fill="#e4b484" stroke="#e4b484" stroke-width=".3"/>
<path d="M476.6 424.0L476.6 425.4L467.9 436.0L468.1 434.9Z" fill="#e4ba84" stroke="#e4ba84" stroke-width=".3"/>
<path d="M476.6 425.4L476.9 427.4L467.9 437.5L467.9 436.0Z" fill="#e4ba8a" stroke="#e4ba8a" stroke-width=".3"/>
<path d="M476.9 427.4L477.5 428.9L468.2 438.7L467.9 437.5ZM477.5 428.9L478.5 430.9L468.9 440.2L468.2 438.7ZM478.5 430.9L479.5 432.4L469.6 441.3L468.9 440.2Z" fill="#eaba8a" stroke="#eaba8a" stroke-width=".3"/>
<path d="M479.5 432.4L481.1 434.1L470.8 442.5L469.6 441.3Z" fill="#deb484" stroke="#deb484" stroke-width=".3"/>
<path d="M481.1 434.1L482.5 435.3L471.9 443.2L470.8 442.5Z" fill="#d8ae84" stroke="#d8ae84" stroke-width=".3"/>
<path d="M482.5 435.3L484.4 436.5L473.5 444.0L471.9 443.2Z" fill="#cca87e" stroke="#cca87e" stroke-width=".3"/>
<path d="M484.4 436.5L485.8 437.2L474.8 444.3L473.5 444.0Z" fill="#c6a278" stroke="#c6a278" stroke-width=".3"/>
<path d="M485.8 437.2L487.8 437.6L476.5 444.5L474.8 444.3Z" fill="#c09c72" stroke="#c09c72" stroke-width=".3"/>
<path d="M487.8 437.6L489.2 437.6L477.8 444.3L476.5 444.5Z" fill="#ba9672" stroke="#ba9672" stroke-width=".3"/>
<path d="M416.7 400.7L424.9 418.2M422.0 398.3L429.5 416.0M433.7 398.7L437.0 416.8M439.3 397.4L442.0 415.4M441.7 400.4L442.8 418.0M452.1 404.7L450.3 421.1M457.7 404.3L455.2 420.4M460.0 409.6L456.0 424.6M469.7 417.8L462.9 430.5M475.1 418.3L467.7 430.4M476.6 425.4L467.9 436.0M484.4 436.5L473.5 444.0" fill="none" stroke="#5e452c" stroke-width=".35"/>
<path d="M489.2 437.6L487.8 437.6L485.8 437.2L484.4 436.5L482.5 435.3L481.1 434.1L479.5 432.4L478.5 430.9L477.5 428.9L476.9 427.4L476.6 425.4L476.6 424.0L477.0 422.3L477.7 421.2L478.9 420.1L487.2 415.7L495.5 411.2L503.8 406.8L512.1 402.4L520.4 397.9L528.7 393.5L536.9 389.0L545.2 384.6L553.5 380.2L554.0 379.7L554.1 379.3L553.8 378.5L552.9 377.9L552.4 377.8L551.6 378.0L543.3 382.5L535.0 386.9L526.7 391.3L518.4 395.7L510.1 400.2L501.8 404.6L493.5 409.0L485.2 413.4L476.9 417.9L475.1 418.3L473.5 418.4L471.4 418.2L469.7 417.8L467.5 416.9L465.9 416.1L464.0 414.8L462.7 413.8L461.3 412.3L460.6 411.1L460.0 409.6L459.9 408.5L460.2 407.1L460.7 406.2L462.4 404.8L470.7 400.5L478.9 396.1L487.1 391.7L495.4 387.3L503.6 382.9L511.8 378.5L520.1 374.1L528.3 369.7L536.5 365.3L537.0 364.8L537.1 364.5L536.6 363.9L535.6 363.6L535.1 363.7L534.3 363.9L526.0 368.3L517.7 372.8L509.4 377.2L501.1 381.6L492.8 386.0L484.5 390.5L476.2 394.9L467.9 399.3L459.6 403.7L457.7 404.3L456.1 404.6L453.9 404.7L452.1 404.7L449.7 404.4L448.0 404.0L446.0 403.4L444.6 402.8L443.1 402.0L442.3 401.3L441.7 400.4L441.5 399.7L441.8 398.7L442.3 398.0L444.0 396.8L452.2 392.4L460.5 388.0L468.7 383.6L476.9 379.2L485.2 374.8L493.4 370.4L501.6 366.0L509.9 361.6L518.1 357.2L518.6 356.8L518.7 356.6L518.2 356.3L517.2 356.3L516.7 356.5L515.9 356.8L507.6 361.2L499.3 365.6L491.0 370.1L482.7 374.5L474.4 378.9L466.1 383.3L457.7 387.8L449.4 392.2L441.1 396.6L439.3 397.4L437.7 397.9L435.4 398.4L433.7 398.7L431.4 399.0L429.7 399.2L427.7 399.3L426.4 399.4L425.1 399.3L424.3 399.2L423.8 398.9L423.7 398.6L424.1 398.1L424.7 397.6L426.4 396.6L434.7 392.2L442.9 387.8L451.1 383.4L459.4 379.0L467.6 374.6L475.8 370.2L484.1 365.8L492.3 361.4L500.6 357.0L501.1 356.7L501.1 356.6L500.7 356.6L499.8 356.9L499.3 357.1L498.6 357.5L490.3 361.9L482.0 366.4L473.7 370.8L465.4 375.2L457.1 379.7L448.7 384.1L440.4 388.5L432.1 393.0L423.8 397.4L422.0 398.3L420.5 399.0L418.4 400.0L416.7 400.7L414.6 401.7L413.2 402.4L411.6 403.2L417.9 399.8L418.2 399.7L419.0 399.3L427.2 394.9L435.4 390.5L443.7 386.1L451.9 381.7L460.1 377.3L468.4 372.9L476.6 368.5L484.8 364.1L493.1 359.7L495.5 358.4L497.0 357.6L499.1 356.6L500.7 355.8L502.8 354.8L504.3 354.2L506.1 353.6L507.3 353.3L508.6 353.1L509.3 353.1L509.8 353.4L509.9 353.7L509.5 354.3L508.9 354.9L507.8 355.7L499.5 360.1L491.2 364.5L482.9 369.0L474.6 373.4L466.3 377.8L458.0 382.3L449.7 386.7L441.4 391.1L433.1 395.6L432.6 395.9L432.6 396.0L433.0 396.2L434.0 396.0L434.5 395.9L435.3 395.5L443.6 391.1L451.9 386.7L460.2 382.2L468.5 377.8L476.8 373.4L485.1 368.9L493.4 364.5L501.7 360.1L510.0 355.6L511.9 354.8L513.4 354.3L515.7 353.7L517.4 353.3L519.7 353.0L521.4 352.9L523.5 353.0L524.8 353.3L526.3 353.9L527.1 354.5L527.7 355.4L527.9 356.1L527.6 357.2L527.1 358.0L525.4 359.2L517.2 363.6L508.9 368.0L500.7 372.4L492.5 376.8L484.2 381.2L476.0 385.6L467.8 390.0L459.5 394.4L451.3 398.8L450.8 399.2L450.7 399.4L451.2 399.9L452.2 400.1L452.8 400.0L453.5 399.7L461.8 395.3L470.2 390.9L478.5 386.4L486.8 382.0L495.1 377.6L503.4 373.2L511.7 368.7L520.0 364.3L528.3 359.9L530.2 359.2L531.8 358.9L534.0 358.7L535.8 358.7L538.2 359.0L539.9 359.5L541.9 360.4L543.2 361.2L544.7 362.5L545.4 363.6L546.0 365.1L546.1 366.2L545.8 367.6L545.2 368.6L543.5 370.0L535.3 374.4L527.1 378.8L518.8 383.2L510.6 387.6L502.4 392.0L494.1 396.4L485.9 400.8L477.7 405.2L469.4 409.6L468.9 410.1L468.9 410.4L469.3 411.1L470.3 411.6L470.8 411.6L471.5 411.4L479.8 407.0L488.1 402.5L496.4 398.1L504.8 393.7L513.1 389.2L521.4 384.8L529.7 380.4L538.0 376.0L546.3 371.5L548.1 371.0L549.7 370.9L551.9 371.0L553.5 371.4L555.7 372.3L557.3 373.2L559.1 374.6L560.3 375.9L561.5 377.8L562.1 379.3L562.4 381.2L562.4 382.7L561.9 384.4L561.2 385.5L559.4 387.1L551.2 391.5L543.0 395.9L534.7 400.3L526.5 404.6L518.3 409.0L510.0 413.4L501.8 417.8L493.6 422.2L485.3 426.6L484.8 427.1L484.7 427.5L485.0 428.5L485.8 429.1L486.3 429.2L487.0 429.0L495.7 424.4L504.4 419.8L513.0 415.1L521.7 410.5L530.4 405.9L539.0 401.3L547.7 396.6L556.4 392.0L565.1 387.4L566.9 387.1L568.9 387.9L570.5 389.6L571.3 391.8L571.0 393.8L569.8 395.2L561.1 399.8L552.4 404.5L543.7 409.1L535.0 413.8L526.3 418.4L517.6 423.1L508.9 427.7L500.2 432.4L491.5 437.0Z" fill="url(#gtop)" fill-rule="evenodd" stroke="#4b3622" stroke-width=".38" stroke-linejoin="round"/>
<path d="M432.5 398.7L434.4 397.4L438.2 415.5L436.2 416.8ZM434.4 397.4L436.7 396.1L440.5 414.2L438.2 415.5ZM436.7 396.1L437.6 395.3L441.6 413.4L440.5 414.2ZM412.8 415.0L414.7 414.3L415.9 432.0L414.2 432.7ZM414.7 414.3L417.4 412.7L418.7 430.4L415.9 432.0ZM417.4 412.7L419.6 411.1L421.1 428.8L418.7 430.4ZM419.6 411.1L421.6 409.4L423.3 427.2L421.1 428.8ZM421.6 409.4L423.3 407.7L425.3 425.5L423.3 427.2ZM423.3 407.7L425.3 405.5L427.7 423.5L425.3 425.5ZM425.3 405.5L427.3 403.5L430.1 421.5L427.7 423.5ZM427.3 403.5L429.3 401.4L432.5 419.5L430.1 421.5ZM429.3 401.4L432.5 398.7L436.2 416.8L432.5 419.5Z" fill="#ad8a60" stroke="#ad8a60" stroke-width=".3"/>
<path d="M406.5 414.0L406.8 414.7L409.5 432.7L409.6 432.0Z" fill="#d2a272" stroke="#d2a272" stroke-width=".3"/>
<path d="M406.8 414.7L408.3 415.2L410.5 433.1L409.5 432.7Z" fill="#cca272" stroke="#cca272" stroke-width=".3"/>
<path d="M408.3 415.2L410.5 415.3L412.2 433.1L410.5 433.1Z" fill="#ba9066" stroke="#ba9066" stroke-width=".3"/>
<path d="M410.5 415.3L412.8 415.0L414.2 432.7L412.2 433.1Z" fill="#a27e5a" stroke="#a27e5a" stroke-width=".3"/>
<path d="M406.8 414.7L409.5 432.7M410.5 415.3L412.2 433.1M412.8 415.0L414.2 432.7" fill="none" stroke="#5e452c" stroke-width=".35"/>
<path d="M432.5 398.7L429.3 401.4L427.3 403.5L425.3 405.5L423.3 407.7L421.6 409.4L419.6 411.1L417.4 412.7L414.7 414.3L412.8 415.0L410.5 415.3L408.3 415.2L406.8 414.7L406.5 414.0L407.4 413.1L409.7 411.8L411.6 410.5L413.3 409.1L414.8 407.7L416.4 406.4L418.7 404.2L421.0 402.1L422.7 400.8L424.7 399.3L427.0 397.9L429.7 396.4L431.6 395.5L433.8 394.8L436.0 394.5L437.3 394.7L437.6 395.3L436.7 396.1L434.4 397.4Z" fill="url(#gtop)" fill-rule="evenodd" stroke="#4b3622" stroke-width=".38" stroke-linejoin="round"/>
<path d="M476.7 464.1L472.3 468.7L458.8 470.3L463.4 466.3ZM472.3 468.7L467.9 473.2L454.3 474.4L458.8 470.3Z" fill="#e6bb88" stroke="#e6bb88" stroke-width=".3"/>
<path d="M478.8 420.6L476.0 425.0L467.5 435.7L470.7 431.9ZM478.5 442.6L480.0 447.1L468.1 452.8L467.3 449.4ZM480.0 447.1L481.3 452.4L468.8 456.8L468.1 452.8ZM481.3 452.4L481.5 453.8L468.9 457.8L468.8 456.8Z" fill="#f6cc96" stroke="#f6cc96" stroke-width=".3"/>
<path d="M476.0 425.0L475.4 426.4L466.7 437.0L467.5 435.7ZM475.4 426.4L475.0 428.1L466.1 438.3L466.7 437.0ZM475.0 428.1L474.9 429.8L465.7 439.7L466.1 438.3ZM474.9 429.8L475.1 431.7L465.5 441.2L465.7 439.7ZM475.1 431.7L475.4 433.6L465.6 442.7L465.5 441.2ZM476.9 438.2L478.5 442.6L467.3 449.4L466.3 446.1ZM466.7 477.4L467.2 479.6L453.2 479.3L452.8 477.7Z" fill="#f6c696" stroke="#f6c696" stroke-width=".3"/>
<path d="M475.4 433.6L476.0 435.7L465.8 444.3L465.6 442.7ZM476.0 435.7L476.9 438.2L466.3 446.1L465.8 444.3Z" fill="#f0c690" stroke="#f0c690" stroke-width=".3"/>
<path d="M481.5 453.8L481.4 456.0L468.5 459.6L468.9 457.8ZM481.4 456.0L480.4 458.9L467.3 461.9L468.5 459.6ZM467.9 473.2L466.9 475.0L453.2 475.9L454.3 474.4ZM466.9 475.0L466.7 477.4L452.8 477.7L453.2 475.9Z" fill="#fccc9c" stroke="#fccc9c" stroke-width=".3"/>
<path d="M480.4 458.9L478.2 462.3L465.0 464.7L467.3 461.9ZM478.2 462.3L476.7 464.1L463.4 466.3L465.0 464.7Z" fill="#fcd29c" stroke="#fcd29c" stroke-width=".3"/>
<path d="M467.2 479.6L468.4 481.1L454.2 480.3L453.2 479.3Z" fill="#d2ae84" stroke="#d2ae84" stroke-width=".3"/>
<path d="M468.4 481.1L470.0 481.6L455.7 480.4L454.2 480.3Z" fill="#ba9c72" stroke="#ba9c72" stroke-width=".3"/>
<path d="M475.1 431.7L465.5 441.2M481.5 453.8L468.9 457.8M476.7 464.1L463.4 466.3M467.9 473.2L454.3 474.4M466.9 475.0L453.2 475.9M468.4 481.1L454.2 480.3" fill="none" stroke="#5e452c" stroke-width=".35"/>
<path d="M483.4 430.4L482.9 431.8L482.9 433.5L483.4 435.6L483.8 436.9L485.4 441.5L486.8 446.2L488.3 453.9L488.3 457.5L487.7 460.1L487.1 462.0L486.0 464.5L484.5 466.9L482.9 469.2L480.8 471.6L477.7 474.6L474.6 477.7L471.6 480.8L470.0 481.6L468.4 481.1L467.2 479.6L466.7 477.4L466.9 475.0L467.9 473.2L472.3 468.7L476.7 464.1L478.2 462.3L480.4 458.9L481.4 456.0L481.5 453.8L481.3 452.4L480.0 447.1L478.5 442.6L476.9 438.2L476.0 435.7L475.4 433.6L475.1 431.7L474.9 429.8L475.0 428.1L475.4 426.4L476.0 425.0L478.8 420.6L480.2 419.6L482.2 419.5L484.3 420.5L485.9 422.2L486.6 424.2L486.1 426.1Z" fill="url(#gtop)" fill-rule="evenodd" stroke="#4b3622" stroke-width=".38" stroke-linejoin="round"/>
<path d="M379.0 483.4L387.2 479.0L377.6 488.5L369.5 492.8ZM387.2 479.0L395.3 474.7L385.8 484.1L377.6 488.5ZM395.3 474.7L403.5 470.3L393.9 479.8L385.8 484.1ZM403.5 470.3L411.7 466.0L402.1 475.4L393.9 479.8ZM411.7 466.0L419.8 461.6L410.2 471.0L402.1 475.4ZM419.8 461.6L428.0 457.3L418.4 466.7L410.2 471.0ZM428.0 457.3L436.1 452.9L426.6 462.3L418.4 466.7ZM436.1 452.9L444.3 448.6L434.7 458.0L426.6 462.3ZM444.3 448.6L452.4 444.2L442.9 453.6L434.7 458.0ZM452.4 444.2L454.2 442.6L444.7 452.2L442.9 453.6ZM362.6 466.8L363.1 466.4L358.0 480.6L357.5 481.0ZM363.1 466.4L371.3 462.0L366.2 476.2L358.0 480.6ZM371.3 462.0L379.5 457.7L374.3 471.9L366.2 476.2ZM379.5 457.7L387.6 453.3L382.5 467.5L374.3 471.9ZM387.6 453.3L395.8 448.9L390.6 463.1L382.5 467.5ZM395.8 448.9L403.9 444.6L398.8 458.8L390.6 463.1ZM403.9 444.6L412.1 440.2L407.0 454.4L398.8 458.8ZM412.1 440.2L420.2 435.9L415.1 450.1L407.0 454.4ZM420.2 435.9L428.4 431.5L423.3 445.7L415.1 450.1ZM428.4 431.5L436.5 427.2L431.4 441.4L423.3 445.7ZM436.5 427.2L438.2 425.7L433.2 440.0L431.4 441.4ZM438.2 425.7L438.8 424.8L433.9 439.2L433.2 440.0ZM344.4 456.2L344.5 456.0L344.4 473.2L344.3 473.4ZM344.5 456.0L345.0 455.6L345.0 472.8L344.4 473.2ZM345.0 455.6L353.2 451.2L353.2 468.4L345.0 472.8ZM353.2 451.2L361.4 446.8L361.4 464.0L353.2 468.4ZM361.4 446.8L369.6 442.4L369.6 459.6L361.4 464.0ZM369.6 442.4L377.9 438.0L377.8 455.2L369.6 459.6ZM377.9 438.0L386.1 433.6L386.0 450.8L377.8 455.2ZM386.1 433.6L394.3 429.2L394.3 446.4L386.0 450.8ZM394.3 429.2L402.5 424.8L402.5 442.1L394.3 446.4ZM402.5 424.8L410.7 420.4L410.7 437.7L402.5 442.1ZM410.7 420.4L418.9 416.0L418.9 433.3L410.7 437.7ZM418.9 416.0L420.1 415.1L420.2 432.4L418.9 433.3ZM420.1 415.1L420.6 414.3L420.9 431.7L420.2 432.4ZM420.6 414.3L420.9 413.3L421.4 430.7L420.9 431.7ZM326.3 452.8L326.3 452.6L331.4 470.8L331.2 470.9ZM326.3 452.6L326.8 452.3L331.9 470.5L331.4 470.8ZM326.8 452.3L335.1 447.9L340.1 466.1L331.9 470.5ZM335.1 447.9L343.3 443.5L348.3 461.7L340.1 466.1ZM343.3 443.5L351.5 439.1L356.6 457.3L348.3 461.7ZM351.5 439.1L359.7 434.8L364.8 452.9L356.6 457.3ZM359.7 434.8L367.9 430.4L373.0 448.5L364.8 452.9ZM367.9 430.4L376.1 426.0L381.2 444.1L373.0 448.5ZM376.1 426.0L384.3 421.6L389.4 439.7L381.2 444.1ZM384.3 421.6L392.6 417.2L397.6 435.3L389.4 439.7ZM392.6 417.2L400.8 412.8L405.9 431.0L397.6 435.3ZM400.8 412.8L401.9 412.0L407.1 430.2L405.9 431.0ZM401.9 412.0L402.5 411.5L407.8 429.6L407.1 430.2ZM402.5 411.5L402.9 410.9L408.4 429.0L407.8 429.6ZM310.3 457.3L310.4 457.3L319.9 474.1L319.7 474.2ZM310.4 457.3L310.9 457.0L320.4 473.8L319.9 474.1ZM310.9 457.0L319.1 452.6L328.7 469.5L320.4 473.8ZM319.1 452.6L327.3 448.2L336.9 465.1L328.7 469.5ZM327.3 448.2L335.6 443.9L345.1 460.7L336.9 465.1ZM335.6 443.9L343.8 439.5L353.3 456.3L345.1 460.7ZM343.8 439.5L352.0 435.1L361.5 451.9L353.3 456.3ZM352.0 435.1L360.2 430.7L369.7 447.5L361.5 451.9ZM360.2 430.7L368.4 426.3L378.0 443.1L369.7 447.5ZM368.4 426.3L376.6 421.9L386.2 438.7L378.0 443.1ZM376.6 421.9L384.8 417.5L394.4 434.4L386.2 438.7ZM384.8 417.5L386.1 416.9L395.7 433.7L394.4 434.4ZM386.1 416.9L386.8 416.6L396.5 433.3L395.7 433.7ZM386.8 416.6L387.3 416.4L397.2 433.0L396.5 433.3ZM387.3 416.4L387.4 416.5L397.5 432.9L397.2 433.0ZM378.4 422.7L378.7 422.4L390.0 437.9L389.7 438.1ZM378.7 422.4L379.4 421.8L390.6 437.4L390.0 437.9ZM379.4 421.8L379.7 421.5L390.7 437.2L390.6 437.4ZM315.7 455.1L317.5 454.2L325.0 471.9L323.2 472.8ZM317.5 454.2L325.8 449.8L333.2 467.5L325.0 471.9ZM325.8 449.8L334.0 445.4L341.4 463.1L333.2 467.5ZM334.0 445.4L342.2 441.0L349.6 458.7L341.4 463.1ZM342.2 441.0L350.4 436.6L357.9 454.4L349.6 458.7ZM350.4 436.6L358.7 432.2L366.1 450.0L357.9 454.4ZM358.7 432.2L366.9 427.8L374.3 445.6L366.1 450.0ZM366.9 427.8L375.1 423.4L382.5 441.2L374.3 445.6ZM375.1 423.4L383.4 419.0L390.8 436.8L382.5 441.2ZM383.4 419.0L391.6 414.6L399.0 432.4L390.8 436.8ZM391.6 414.6L392.3 414.3L399.7 432.0L399.0 432.4ZM392.3 414.3L392.8 414.1L400.2 431.8L399.7 432.0ZM392.8 414.1L393.7 413.7L400.9 431.6L400.2 431.8ZM393.7 413.7L394.1 413.7L401.1 431.6L400.9 431.6ZM333.0 454.1L335.5 453.1L338.0 471.1L335.7 472.1ZM335.5 453.1L343.6 448.7L346.2 466.7L338.0 471.1ZM343.6 448.7L351.8 444.4L354.4 462.4L346.2 466.7ZM351.8 444.4L360.0 440.0L362.5 458.0L354.4 462.4ZM360.0 440.0L368.1 435.7L370.7 453.6L362.5 458.0ZM368.1 435.7L376.3 431.3L378.8 449.3L370.7 453.6ZM376.3 431.3L384.4 427.0L387.0 444.9L378.8 449.3ZM384.4 427.0L392.6 422.6L395.1 440.6L387.0 444.9ZM392.6 422.6L400.7 418.3L403.3 436.2L395.1 440.6ZM400.7 418.3L408.9 413.9L411.5 431.9L403.3 436.2ZM408.9 413.9L409.7 413.6L412.2 431.5L411.5 431.9ZM409.7 413.6L410.2 413.5L412.6 431.4L412.2 431.5ZM410.2 413.5L411.2 413.5L413.4 431.4L412.6 431.4ZM411.2 413.5L411.7 413.8L413.7 431.6L413.4 431.4ZM351.4 461.1L353.3 460.5L350.7 476.5L348.9 477.1ZM353.3 460.5L361.5 456.1L358.9 472.1L350.7 476.5ZM361.5 456.1L369.7 451.7L367.1 467.7L358.9 472.1ZM369.7 451.7L378.0 447.4L375.4 463.3L367.1 467.7ZM378.0 447.4L386.2 443.0L383.6 458.9L375.4 463.3ZM386.2 443.0L394.4 438.6L391.8 454.6L383.6 458.9ZM394.4 438.6L402.6 434.2L400.0 450.2L391.8 454.6ZM402.6 434.2L410.9 429.8L408.3 445.8L400.0 450.2ZM410.9 429.8L419.1 425.4L416.5 441.4L408.3 445.8ZM419.1 425.4L427.3 421.0L424.7 437.0L416.5 441.4ZM427.3 421.0L428.1 420.8L425.5 436.7L424.7 437.0ZM428.1 420.8L428.6 420.8L425.9 436.7L425.5 436.7ZM428.6 420.8L429.6 421.1L426.7 436.9L425.9 436.7ZM429.6 421.1L430.1 421.7L427.0 437.3L426.7 436.9ZM368.8 475.1L370.6 474.6L363.1 486.6L361.4 487.2ZM370.6 474.6L378.8 470.2L371.3 482.3L363.1 486.6ZM378.8 470.2L387.0 465.9L379.6 477.9L371.3 482.3ZM387.0 465.9L395.3 461.5L387.8 473.5L379.6 477.9ZM395.3 461.5L403.5 457.1L396.0 469.1L387.8 473.5ZM403.5 457.1L411.7 452.7L404.2 464.7L396.0 469.1ZM411.7 452.7L419.9 448.3L412.5 460.3L404.2 464.7ZM419.9 448.3L428.2 443.9L420.7 455.9L412.5 460.3ZM428.2 443.9L436.4 439.6L428.9 451.6L420.7 455.9ZM436.4 439.6L444.6 435.2L437.1 447.2L428.9 451.6ZM444.6 435.2L445.4 435.0L437.9 446.9L437.1 447.2ZM445.4 435.0L445.9 435.0L438.3 446.9L437.9 446.9ZM445.9 435.0L446.8 435.6L439.0 447.3L438.3 446.9ZM446.8 435.6L447.1 436.4L439.2 447.9L439.0 447.3ZM382.9 494.4L385.2 493.8L373.8 500.3L371.5 501.1ZM458.6 454.6L459.4 454.4L447.9 460.9L447.2 461.1ZM459.4 454.4L459.8 454.5L448.3 460.9L447.9 460.9ZM459.8 454.5L460.5 455.2L448.9 461.4L448.3 460.9ZM460.5 455.2L460.7 456.2L449.0 462.2L448.9 461.4ZM468.3 476.7L468.7 476.8L454.7 477.0L454.4 476.9ZM468.7 476.8L469.2 477.6L455.2 477.5L454.7 477.0ZM469.2 477.6L469.2 478.7L455.1 478.3L455.2 477.5Z" fill="#745438" stroke="#745438" stroke-width=".3"/>
<path d="M468.9 479.1L468.3 479.6L454.2 479.1L454.8 478.7ZM468.3 479.6L459.7 484.2L445.6 483.7L454.2 479.1ZM459.7 484.2L451.2 488.8L437.0 488.3L445.6 483.7ZM451.2 488.8L442.6 493.4L428.4 492.9L437.0 488.3ZM442.6 493.4L434.0 498.0L419.8 497.5L428.4 492.9ZM434.0 498.0L425.4 502.6L411.3 502.1L419.8 497.5ZM425.4 502.6L416.8 507.1L402.7 506.7L411.3 502.1ZM416.8 507.1L408.2 511.7L394.1 511.3L402.7 506.7ZM408.2 511.7L399.6 516.3L385.5 515.8L394.1 511.3ZM399.6 516.3L391.0 520.9L376.9 520.4L385.5 515.8ZM391.0 520.9L389.7 522.3L375.5 521.6L376.9 520.4ZM465.8 467.9L457.6 472.2L444.4 474.9L452.6 470.6ZM457.6 472.2L449.4 476.6L436.2 479.3L444.4 474.9ZM449.4 476.6L441.1 481.0L428.0 483.7L436.2 479.3ZM441.1 481.0L432.9 485.4L419.8 488.1L428.0 483.7ZM432.9 485.4L424.7 489.8L411.5 492.5L419.8 488.1ZM424.7 489.8L416.5 494.1L403.3 496.9L411.5 492.5ZM416.5 494.1L408.2 498.5L395.1 501.2L403.3 496.9ZM408.2 498.5L400.0 502.9L386.9 505.6L395.1 501.2ZM400.0 502.9L391.8 507.3L378.6 510.0L386.9 505.6ZM447.1 436.4L447.0 436.8L439.1 448.3L439.2 447.9ZM460.7 456.2L460.6 456.7L448.8 462.5L449.0 462.2ZM460.6 456.7L460.0 457.2L448.2 463.0L448.8 462.5ZM386.1 496.8L384.8 498.0L372.9 503.7L374.3 502.6ZM469.2 478.7L468.9 479.1L454.8 478.7L455.1 478.3Z" fill="#e6bb88" stroke="#e6bb88" stroke-width=".3"/>
<path d="M389.7 522.3L388.9 524.4L374.7 523.4L375.5 521.6ZM384.0 499.2L383.3 501.0L371.2 506.2L372.1 504.7ZM383.3 501.0L383.0 502.6L370.8 507.5L371.2 506.2ZM383.0 502.6L383.0 504.9L370.5 509.2L370.8 507.5Z" fill="#fccc9c" stroke="#fccc9c" stroke-width=".3"/>
<path d="M388.9 524.4L388.9 526.8L374.6 525.1L374.7 523.4ZM383.0 504.9L383.2 506.6L370.6 510.5L370.5 509.2ZM383.2 506.6L383.8 508.9L370.9 512.2L370.6 510.5Z" fill="#f6cc96" stroke="#f6cc96" stroke-width=".3"/>
<path d="M388.9 526.8L389.7 528.7L375.2 526.5L374.6 525.1ZM370.3 482.2L370.6 484.1L361.6 494.3L361.6 492.8Z" fill="#e4ba8a" stroke="#e4ba8a" stroke-width=".3"/>
<path d="M389.7 528.7L391.0 529.7L376.5 527.0L375.2 526.5ZM378.1 493.3L379.5 493.9L368.5 501.1L367.2 500.7ZM388.0 515.3L389.1 516.0L375.4 517.0L374.3 516.6Z" fill="#c6a278" stroke="#c6a278" stroke-width=".3"/>
<path d="M302.3 462.1L302.6 461.7L312.7 478.2L312.7 478.3ZM302.6 461.7L303.1 461.3L312.9 478.0L312.7 478.2ZM317.5 455.6L318.0 455.9L323.8 474.0L323.6 473.7ZM318.0 455.9L318.8 456.0L324.2 474.2L323.8 474.0ZM335.2 456.4L335.4 457.1L336.5 474.7L336.6 474.1ZM335.4 457.1L336.0 458.0L336.7 475.5L336.5 474.7ZM336.0 458.0L336.8 458.7L337.2 476.1L336.7 475.5ZM353.6 465.2L353.7 466.3L349.7 481.4L349.8 480.5ZM353.7 466.3L354.3 467.9L349.9 482.6L349.7 481.4ZM354.3 467.9L355.0 469.0L350.3 483.5L349.9 482.6Z" fill="#d2a272" stroke="#d2a272" stroke-width=".3"/>
<path d="M303.1 461.3L304.1 460.6L313.6 477.5L312.9 478.0ZM304.1 460.6L305.2 460.0L314.3 477.1L313.6 477.5ZM318.8 456.0L320.1 456.1L325.1 474.3L324.2 474.2ZM320.1 456.1L321.4 456.1L326.0 474.2L325.1 474.3ZM336.8 458.7L338.3 459.5L338.1 476.7L337.2 476.1ZM338.3 459.5L339.7 460.1L339.1 477.1L338.1 476.7ZM355.0 469.0L356.4 470.5L351.2 484.6L350.3 483.5ZM356.4 470.5L357.7 471.6L352.1 485.4L351.2 484.6Z" fill="#cca272" stroke="#cca272" stroke-width=".3"/>
<path d="M305.2 460.0L306.9 459.2L315.6 476.4L314.3 477.1ZM321.4 456.1L323.4 456.0L327.5 474.1L326.0 474.2ZM339.7 460.1L341.7 460.7L340.7 477.5L339.1 477.1ZM357.7 471.6L359.6 472.9L353.6 486.3L352.1 485.4Z" fill="#c0966c" stroke="#c0966c" stroke-width=".3"/>
<path d="M306.9 459.2L308.4 458.5L316.8 475.8L315.6 476.4ZM323.4 456.0L325.1 455.8L328.8 473.9L327.5 474.1ZM341.7 460.7L343.4 461.1L342.1 477.7L340.7 477.5ZM359.6 472.9L361.2 473.7L354.8 486.8L353.6 486.3Z" fill="#ba9066" stroke="#ba9066" stroke-width=".3"/>
<path d="M308.4 458.5L310.4 457.5L318.6 475.0L316.8 475.8ZM325.1 455.8L327.4 455.5L330.7 473.6L328.8 473.9ZM343.4 461.1L345.8 461.4L344.0 477.8L342.1 477.7Z" fill="#ae8a60" stroke="#ae8a60" stroke-width=".3"/>
<path d="M310.4 457.5L312.1 456.7L320.0 474.4L318.6 475.0ZM327.4 455.5L329.1 455.2L332.2 473.2L330.7 473.6ZM345.8 461.4L347.6 461.5L345.5 477.8L344.0 477.8Z" fill="#a8845a" stroke="#a8845a" stroke-width=".3"/>
<path d="M312.1 456.7L314.2 455.8L321.9 473.5L320.0 474.4ZM329.1 455.2L331.4 454.6L334.2 472.6L332.2 473.2ZM347.6 461.5L349.8 461.4L347.5 477.5L345.5 477.8Z" fill="#9c7e5a" stroke="#9c7e5a" stroke-width=".3"/>
<path d="M314.2 455.8L315.7 455.1L323.2 472.8L321.9 473.5ZM331.4 454.6L333.0 454.1L335.7 472.1L334.2 472.6ZM349.8 461.4L351.4 461.1L348.9 477.1L347.5 477.5Z" fill="#9c7854" stroke="#9c7854" stroke-width=".3"/>
<path d="M361.2 473.7L363.4 474.6L356.7 487.3L354.8 486.8Z" fill="#b48a66" stroke="#b48a66" stroke-width=".3"/>
<path d="M363.4 474.6L365.1 475.0L358.1 487.5L356.7 487.3ZM365.1 475.0L367.2 475.2L360.0 487.4L358.1 487.5Z" fill="#a88460" stroke="#a88460" stroke-width=".3"/>
<path d="M367.2 475.2L368.8 475.1L361.4 487.2L360.0 487.4Z" fill="#a27e5a" stroke="#a27e5a" stroke-width=".3"/>
<path d="M371.4 478.0L370.8 479.1L362.5 490.2L363.3 489.3ZM370.8 479.1L370.3 480.8L361.9 491.6L362.5 490.2Z" fill="#e4b484" stroke="#e4b484" stroke-width=".3"/>
<path d="M370.3 480.8L370.3 482.2L361.6 492.8L361.9 491.6Z" fill="#e4ba84" stroke="#e4ba84" stroke-width=".3"/>
<path d="M370.6 484.1L371.2 485.7L361.9 495.5L361.6 494.3ZM371.2 485.7L372.2 487.7L362.6 497.0L361.9 495.5ZM372.2 487.7L373.3 489.1L363.3 498.0L362.6 497.0Z" fill="#eaba8a" stroke="#eaba8a" stroke-width=".3"/>
<path d="M373.3 489.1L374.8 490.9L364.5 499.2L363.3 498.0ZM385.5 512.6L386.5 513.9L373.0 515.7L372.2 514.8Z" fill="#deb484" stroke="#deb484" stroke-width=".3"/>
<path d="M374.8 490.9L376.2 492.0L365.6 500.0L364.5 499.2Z" fill="#d8ae84" stroke="#d8ae84" stroke-width=".3"/>
<path d="M376.2 492.0L378.1 493.3L367.2 500.7L365.6 500.0Z" fill="#cca87e" stroke="#cca87e" stroke-width=".3"/>
<path d="M379.5 493.9L381.5 494.4L370.2 501.2L368.5 501.1ZM389.1 516.0L390.8 516.6L376.9 517.2L375.4 517.0Z" fill="#c09c72" stroke="#c09c72" stroke-width=".3"/>
<path d="M381.5 494.4L382.9 494.4L371.5 501.1L370.2 501.2ZM390.8 516.6L392.0 516.6L378.1 517.1L376.9 517.2Z" fill="#ba9672" stroke="#ba9672" stroke-width=".3"/>
<path d="M384.8 498.0L384.0 499.2L372.1 504.7L372.9 503.7Z" fill="#fcd29c" stroke="#fcd29c" stroke-width=".3"/>
<path d="M383.8 508.9L384.5 510.6L371.4 513.4L370.9 512.2Z" fill="#f6c696" stroke="#f6c696" stroke-width=".3"/>
<path d="M384.5 510.6L385.5 512.6L372.2 514.8L371.4 513.4Z" fill="#eac090" stroke="#eac090" stroke-width=".3"/>
<path d="M386.5 513.9L388.0 515.3L374.3 516.6L373.0 515.7Z" fill="#d2a87e" stroke="#d2a87e" stroke-width=".3"/>
<path d="M389.7 522.3L375.5 521.6M388.9 524.4L374.7 523.4M389.7 528.7L375.2 526.5M310.4 457.5L318.6 475.0M315.7 455.1L323.2 472.8M327.4 455.5L330.7 473.6M333.0 454.1L335.7 472.1M335.4 457.1L336.5 474.7M345.8 461.4L344.0 477.8M351.4 461.1L348.9 477.1M353.7 466.3L349.7 481.4M363.4 474.6L356.7 487.3M368.8 475.1L361.4 487.2M370.3 482.2L361.6 492.8M378.1 493.3L367.2 500.7M382.9 494.4L371.5 501.1M384.8 498.0L372.9 503.7M383.0 502.6L370.8 507.5M388.0 515.3L374.3 516.6" fill="none" stroke="#5e452c" stroke-width=".35"/>
<path d="M468.9 479.1L469.2 478.7L469.2 477.6L468.7 476.8L468.3 476.7L467.6 476.8L459.5 481.2L451.3 485.6L443.2 489.9L435.0 494.3L426.9 498.6L418.7 503.0L410.6 507.3L402.4 511.7L394.2 516.0L392.0 516.6L390.8 516.6L389.1 516.0L388.0 515.3L386.5 513.9L385.5 512.6L384.5 510.6L383.8 508.9L383.2 506.6L383.0 504.9L383.0 502.6L383.3 501.0L384.0 499.2L384.8 498.0L386.1 496.8L394.3 492.4L402.5 488.0L410.7 483.6L418.9 479.2L427.2 474.8L435.4 470.4L443.6 466.0L451.8 461.6L460.0 457.2L460.6 456.7L460.7 456.2L460.5 455.2L459.8 454.5L459.4 454.4L458.6 454.6L450.5 458.9L442.3 463.3L434.2 467.6L426.0 472.0L417.8 476.3L409.7 480.7L401.5 485.1L393.4 489.4L385.2 493.8L382.9 494.4L381.5 494.4L379.5 493.9L378.1 493.3L376.2 492.0L374.8 490.9L373.3 489.1L372.2 487.7L371.2 485.7L370.6 484.1L370.3 482.2L370.3 480.8L370.8 479.1L371.4 478.0L372.6 476.9L380.8 472.5L389.0 468.1L397.2 463.7L405.5 459.3L413.7 454.9L421.9 450.5L430.1 446.1L438.3 441.7L446.5 437.3L447.0 436.8L447.1 436.4L446.8 435.6L445.9 435.0L445.4 435.0L444.6 435.2L436.4 439.6L428.2 443.9L419.9 448.3L411.7 452.7L403.5 457.1L395.3 461.5L387.0 465.9L378.8 470.2L370.6 474.6L368.8 475.1L367.2 475.2L365.1 475.0L363.4 474.6L361.2 473.7L359.6 472.9L357.7 471.6L356.4 470.5L355.0 469.0L354.3 467.9L353.7 466.3L353.6 465.2L353.9 463.9L354.5 463.0L356.1 461.6L364.3 457.3L372.4 452.9L380.6 448.5L388.8 444.2L396.9 439.8L405.1 435.5L413.2 431.1L421.4 426.8L429.5 422.4L430.0 422.0L430.1 421.7L429.6 421.1L428.6 420.8L428.1 420.8L427.3 421.0L419.1 425.4L410.9 429.8L402.6 434.2L394.4 438.6L386.2 443.0L378.0 447.4L369.7 451.7L361.5 456.1L353.3 460.5L351.4 461.1L349.8 461.4L347.6 461.5L345.8 461.4L343.4 461.1L341.7 460.7L339.7 460.1L338.3 459.5L336.8 458.7L336.0 458.0L335.4 457.1L335.2 456.4L335.5 455.5L336.0 454.8L337.7 453.6L345.9 449.2L354.0 444.8L362.2 440.5L370.3 436.1L378.5 431.8L386.6 427.4L394.8 423.1L403.0 418.7L411.1 414.4L411.6 414.0L411.7 413.8L411.2 413.5L410.2 413.5L409.7 413.6L408.9 413.9L400.7 418.3L392.6 422.6L384.4 427.0L376.3 431.3L368.1 435.7L360.0 440.0L351.8 444.4L343.6 448.7L335.5 453.1L333.0 454.1L331.4 454.6L329.1 455.2L327.4 455.5L325.1 455.8L323.4 456.0L321.4 456.1L320.1 456.1L318.8 456.0L318.0 455.9L317.5 455.6L317.5 455.3L317.8 454.8L318.4 454.4L319.6 453.6L327.8 449.2L336.1 444.8L344.3 440.5L352.5 436.1L360.7 431.7L368.9 427.3L377.1 422.9L385.3 418.5L393.6 414.1L394.1 413.8L394.1 413.7L393.7 413.7L392.8 414.1L392.3 414.3L391.6 414.6L383.4 419.0L375.1 423.4L366.9 427.8L358.7 432.2L350.4 436.6L342.2 441.0L334.0 445.4L325.8 449.8L317.5 454.2L315.7 455.1L314.2 455.8L312.1 456.7L310.4 457.5L308.4 458.5L306.9 459.2L305.3 460.0L311.6 456.6L311.9 456.4L312.7 456.0L320.8 451.7L329.0 447.3L337.1 443.0L345.3 438.6L353.4 434.3L361.6 429.9L369.8 425.5L377.9 421.2L386.1 416.8L388.5 415.6L390.0 414.8L392.1 413.7L393.7 412.9L395.8 412.0L397.3 411.4L399.1 410.7L400.3 410.4L401.6 410.2L402.3 410.3L402.8 410.5L402.9 410.9L402.5 411.5L401.9 412.0L400.8 412.8L392.6 417.2L384.3 421.6L376.1 426.0L367.9 430.4L359.7 434.8L351.5 439.1L343.3 443.5L335.1 447.9L326.8 452.3L326.3 452.6L326.3 452.8L326.7 452.9L327.7 452.8L328.2 452.6L329.0 452.3L337.1 447.9L345.3 443.6L353.4 439.2L361.6 434.9L369.8 430.5L377.9 426.2L386.1 421.8L394.2 417.4L402.4 413.1L404.9 412.0L406.4 411.4L408.7 410.8L410.4 410.4L412.7 410.1L414.4 410.0L416.5 410.2L417.8 410.4L419.3 411.0L420.1 411.6L420.7 412.5L420.9 413.3L420.6 414.3L420.1 415.1L418.9 416.0L410.7 420.4L402.5 424.8L394.3 429.2L386.1 433.6L377.9 438.0L369.6 442.4L361.4 446.8L353.2 451.2L345.0 455.6L344.5 456.0L344.4 456.2L344.9 456.6L345.9 456.8L346.5 456.8L347.2 456.5L355.5 452.1L363.7 447.7L371.9 443.3L380.2 438.9L388.4 434.6L396.6 430.2L404.8 425.8L413.1 421.4L421.3 417.0L423.2 416.4L424.8 416.0L427.0 415.8L428.8 415.9L431.2 416.2L432.9 416.6L434.9 417.5L436.2 418.3L437.7 419.6L438.4 420.7L439.0 422.2L439.1 423.3L438.8 424.8L438.2 425.7L436.5 427.2L428.4 431.5L420.2 435.9L412.1 440.2L403.9 444.6L395.8 448.9L387.6 453.3L379.5 457.7L371.3 462.0L363.1 466.4L362.6 466.8L362.6 467.2L363.0 467.9L364.0 468.3L364.5 468.4L365.2 468.1L373.5 463.8L381.7 459.4L389.9 455.0L398.1 450.6L406.4 446.2L414.6 441.8L422.8 437.5L431.1 433.1L439.3 428.7L441.1 428.2L442.7 428.0L444.9 428.2L446.5 428.6L448.7 429.4L450.3 430.3L452.1 431.8L453.3 433.1L454.5 434.9L455.1 436.4L455.4 438.4L455.4 439.8L454.9 441.5L454.2 442.6L452.4 444.2L444.3 448.6L436.1 452.9L428.0 457.3L419.8 461.6L411.7 466.0L403.5 470.3L395.3 474.7L387.2 479.0L379.0 483.4L378.5 483.9L378.4 484.3L378.7 485.2L379.5 485.9L380.0 486.0L380.7 485.8L388.9 481.4L397.2 477.0L405.4 472.6L413.6 468.3L421.8 463.9L430.1 459.5L438.3 455.1L446.5 450.7L454.8 446.4L456.5 445.9L458.0 445.9L460.0 446.4L461.5 447.0L463.3 448.2L464.6 449.4L466.0 451.3L466.9 452.8L467.6 455.1L467.9 456.8L467.9 459.1L467.6 460.6L466.8 462.5L466.0 463.7L464.1 465.4L456.0 469.7L447.8 474.1L439.7 478.4L431.5 482.8L423.4 487.1L415.2 491.5L407.0 495.8L398.9 500.2L390.7 504.6L390.2 505.1L390.0 505.5L390.1 506.6L390.7 507.3L391.1 507.4L391.8 507.3L400.0 502.9L408.2 498.5L416.5 494.1L424.7 489.8L432.9 485.4L441.1 481.0L449.4 476.6L457.6 472.2L465.8 467.9L467.5 467.5L468.8 467.6L470.5 468.1L471.7 468.8L473.1 470.2L474.0 471.5L474.9 473.6L475.4 475.3L475.5 477.6L475.4 479.4L474.9 481.7L474.3 483.3L473.2 485.2L472.2 486.4L470.2 488.0L461.6 492.6L452.9 497.3L444.3 501.9L435.7 506.5L427.1 511.1L418.4 515.7L409.8 520.3L401.2 524.9L392.6 529.5L391.0 529.7L389.7 528.7L388.9 526.8L388.9 524.4L389.7 522.3L391.0 520.9L399.6 516.3L408.2 511.7L416.8 507.1L425.4 502.6L434.0 498.0L442.6 493.4L451.2 488.8L459.7 484.2L468.3 479.6Z" fill="url(#gtop)" fill-rule="evenodd" stroke="#4b3622" stroke-width=".38" stroke-linejoin="round"/><g transform="translate(.7 1.2)"><path d="M222.6 601.2H226.2V578.6H222.6Z" fill="#22c018"/>
<path d="M218.2 580L223 568.4L228.8 580Z" fill="#22c018"/>
<path d="M224.4 599L241.4 601.6L241 605L224.2 602.6Z" fill="#cc1818"/>
<path d="M240.4 598L252.6 604.6L241.2 608.6Z" fill="#b81818"/><path d="M240.4 598L252.6 604.6L244 602Z" fill="#d84040"/>
<path d="M225.6 600L212 607.4L210.6 604.6L223.8 598Z" fill="#1818c8"/>
<path d="M209.4 602L215.6 610.6L212.6 613L205 610.8L206 605.4Z" fill="#1414d0"/></g></svg>
<span id="t0" class="t" style="left:13.80px;top:5.76px;font-size:6.9px;color:#1c1c1c;font-family:'Liberation Sans',sans-serif;transform:scaleX(0.8575)">Abaqus/CAE 2018 [Viewport: 1]</span>
<span id="t1" class="t" style="left:15.70px;top:19.31px;font-size:6.6px;color:#1c1c1c;font-family:'Liberation Sans',sans-serif;transform:scaleX(0.8270)"><u>F</u>ile</span>
<span id="t2" class="t" style="left:32.50px;top:19.31px;font-size:6.6px;color:#1c1c1c;font-family:'Liberation Sans',sans-serif;transform:scaleX(0.9183)"><u>M</u>odel</span>
<span id="t3" class="t" style="left:57.60px;top:19.31px;font-size:6.6px;color:#1c1c1c;font-family:'Liberation Sans',sans-serif;transform:scaleX(0.8880)">Vie<u>w</u>port</span>
<span id="t4" class="t" style="left:88.50px;top:19.31px;font-size:6.6px;color:#1c1c1c;font-family:'Liberation Sans',sans-serif;transform:scaleX(0.8811)"><u>V</u>iew</span>
<span id="t5" class="t" style="left:109.40px;top:19.31px;font-size:6.6px;color:#1c1c1c;font-family:'Liberation Sans',sans-serif;transform:scaleX(0.8287)"><u>R</u>esult</span>
<span id="t6" class="t" style="left:133.20px;top:19.31px;font-size:6.6px;color:#1c1c1c;font-family:'Liberation Sans',sans-serif;transform:scaleX(0.9055)"><u>P</u>lot</span>
<span id="t7" class="t" style="left:152.10px;top:19.31px;font-size:6.6px;color:#1c1c1c;font-family:'Liberation Sans',sans-serif;transform:scaleX(0.9007)"><u>A</u>nimate</span>
<span id="t8" class="t" style="left:182.50px;top:19.31px;font-size:6.6px;color:#1c1c1c;font-family:'Liberation Sans',sans-serif;transform:scaleX(0.8681)">R<u>e</u>port</span>
<span id="t9" class="t" style="left:208.00px;top:19.31px;font-size:6.6px;color:#1c1c1c;font-family:'Liberation Sans',sans-serif;transform:scaleX(0.9011)"><u>O</u>ptions</span>
<span id="t10" class="t" style="left:237.60px;top:19.31px;font-size:6.6px;color:#1c1c1c;font-family:'Liberation Sans',sans-serif;transform:scaleX(0.8698)"><u>T</u>ools</span>
<span id="t11" class="t" style="left:259.60px;top:19.31px;font-size:6.6px;color:#1c1c1c;font-family:'Liberation Sans',sans-serif;transform:scaleX(0.8981)">Plug-ins</span>
<span id="t12" class="t" style="left:289.30px;top:19.31px;font-size:6.6px;color:#1c1c1c;font-family:'Liberation Sans',sans-serif;transform:scaleX(0.8838)"><u>H</u>elp</span>
<span id="t13" class="t" style="left:132.00px;top:60.61px;font-size:6.6px;color:#1c1c1c;font-family:'Liberation Sans',sans-serif;transform:scaleX(0.9076)">Module:</span>
<span id="t14" class="t" style="left:163.00px;top:60.61px;font-size:6.6px;color:#1c1c1c;font-family:'Liberation Sans',sans-serif;transform:scaleX(0.8942)">Visualization</span>
<span id="t15" class="t" style="left:216.80px;top:60.61px;font-size:6.6px;color:#1c1c1c;font-family:'Liberation Sans',sans-serif;transform:scaleX(0.8991)">Model:</span>
<span id="t16" class="t" style="left:244.30px;top:60.61px;font-size:6.6px;color:#1c1c1c;font-family:'Liberation Sans',sans-serif;transform:scaleX(0.9458)">C:/Temp/Job-1.odb</span>
<span id="t17" class="t" style="left:215.50px;top:31.88px;font-size:6.4px;color:#1c1c1c;font-family:'Liberation Sans',sans-serif;transform:scaleX(1.0549)">All</span>
<span id="t18" class="t" style="left:564.00px;top:31.88px;font-size:6.4px;color:#1c1c1c;font-family:'Liberation Sans',sans-serif;transform:scaleX(0.9136)">Part instances</span>
<span id="t19" class="t" style="left:20.00px;top:45.78px;font-size:6.4px;color:#1c1c1c;font-family:'Liberation Sans',sans-serif;transform:scaleX(0.8909)">Deformed</span>
<span id="t20" class="t" style="left:59.50px;top:45.78px;font-size:6.4px;color:#1c1c1c;font-family:'Liberation Sans',sans-serif;transform:scaleX(0.8649)">U</span>
<span id="t21" class="t" style="left:6.50px;top:62.61px;font-size:6.6px;color:#1c1c1c;font-family:'Liberation Sans',sans-serif;transform:scaleX(0.9183)">Model</span>
<span id="t22" class="t" style="left:31.00px;top:62.61px;font-size:6.6px;color:#1c1c1c;font-family:'Liberation Sans',sans-serif;transform:scaleX(0.8636)">Results</span>
<span id="t23" class="t" style="left:5.00px;top:77.51px;font-size:6.6px;color:#1c1c1c;font-family:'Liberation Sans',sans-serif;transform:scaleX(0.8159)">Session Data</span>
<span id="t24" class="t" style="left:15.50px;top:90.11px;font-size:6.6px;color:#1c1c1c;font-family:'Liberation Sans',sans-serif;transform:scaleX(0.8803)">Output Databases (2)</span>
<span id="t25" class="t" style="left:24.00px;top:99.58px;font-size:6.6px;color:#1c1c1c;font-family:'Liberation Sans',sans-serif;transform:scaleX(0.8173)">e9_c1_cpus80_20161563998183.248.odb</span>
<span id="t26" class="t" style="left:24.00px;top:109.05px;font-size:6.6px;color:#1c1c1c;font-family:'Liberation Sans',sans-serif;text-decoration:underline;transform:scaleX(0.9036)">Job-1.odb</span>
<span id="t27" class="t" style="left:15.50px;top:118.52px;font-size:6.6px;color:#1c1c1c;font-family:'Liberation Sans',sans-serif;transform:scaleX(0.8805)">Model Database (1)</span>
<span id="t28" class="t" style="left:15.50px;top:127.99px;font-size:6.6px;color:#1c1c1c;font-family:'Liberation Sans',sans-serif;transform:scaleX(0.8815)">Spectrums (8)</span>
<span id="t29" class="t" style="left:15.50px;top:137.46px;font-size:6.6px;color:#1c1c1c;font-family:'Liberation Sans',sans-serif;transform:scaleX(0.8522)">XYPlots</span>
<span id="t30" class="t" style="left:15.50px;top:146.93px;font-size:6.6px;color:#1c1c1c;font-family:'Liberation Sans',sans-serif;transform:scaleX(0.8357)">XYData</span>
<span id="t31" class="t" style="left:15.50px;top:156.40px;font-size:6.6px;color:#1c1c1c;font-family:'Liberation Sans',sans-serif;transform:scaleX(0.8889)">Paths</span>
<span id="t32" class="t" style="left:15.50px;top:165.87px;font-size:6.6px;color:#1c1c1c;font-family:'Liberation Sans',sans-serif;transform:scaleX(0.8914)">Display Groups (1)</span>
<span id="t33" class="t" style="left:15.50px;top:175.34px;font-size:6.6px;color:#1c1c1c;font-family:'Liberation Sans',sans-serif;transform:scaleX(0.8950)">Free Body Cuts</span>
<span id="t34" class="t" style="left:15.50px;top:184.81px;font-size:6.6px;color:#1c1c1c;font-family:'Liberation Sans',sans-serif;transform:scaleX(0.8550)">Streams</span>
<span id="t35" class="t" style="left:15.50px;top:194.28px;font-size:6.6px;color:#1c1c1c;font-family:'Liberation Sans',sans-serif;transform:scaleX(0.9334)">Movies</span>
<span id="t36" class="t" style="left:15.50px;top:203.75px;font-size:6.6px;color:#1c1c1c;font-family:'Liberation Sans',sans-serif;transform:scaleX(0.9017)">Images</span>
<span id="t37" class="t" style="left:804.00px;top:30.92px;font-size:8.6px;color:#c02018;font-family:'Liberation Sans',sans-serif;font-weight:bold;transform:scaleX(1.0876)">1</span>
<span id="t38" class="t" style="left:817.00px;top:30.92px;font-size:8.6px;color:#c02018;font-family:'Liberation Sans',sans-serif;font-weight:bold;transform:scaleX(1.0876)">2</span>
<span id="t39" class="t" style="left:830.00px;top:30.92px;font-size:8.6px;color:#c02018;font-family:'Liberation Sans',sans-serif;font-weight:bold;transform:scaleX(1.0876)">3</span>
<span id="t40" class="t" style="left:843.40px;top:30.92px;font-size:8.6px;color:#c02018;font-family:'Liberation Sans',sans-serif;font-weight:bold;transform:scaleX(1.0876)">4</span>
<span id="t41" class="t" style="left:23.80px;top:676.34px;font-size:6.6px;color:#1c1c1c;font-family:'Liberation Mono',monospace;transform:scaleX(1.0026)">Application restarted after 63 minutes of idle time; the license will be checked within the next 3 minutes.</span>
<span id="t42" class="t" style="left:217.80px;top:555.26px;font-size:8.2px;color:#1c1c1c;font-family:'Liberation Sans',sans-serif;font-weight:bold;transform:scaleX(1.0606)">Y</span>
<span id="t43" class="t" style="left:256.30px;top:602.86px;font-size:8.2px;color:#1c1c1c;font-family:'Liberation Sans',sans-serif;font-weight:bold;transform:scaleX(1.0971)">X</span>
<span id="t44" class="t" style="left:196.60px;top:610.96px;font-size:8.2px;color:#1c1c1c;font-family:'Liberation Sans',sans-serif;font-weight:bold;transform:scaleX(1.1165)">Z</span>
<span id="t45" class="t" style="left:939.00px;top:660.04px;font-size:7.4px;color:#2a9cab;font-family:'Liberation Sans',sans-serif;font-weight:bold;font-style:italic;transform:scaleX(1.2504)">SIMULIA</span></div></body></html>
